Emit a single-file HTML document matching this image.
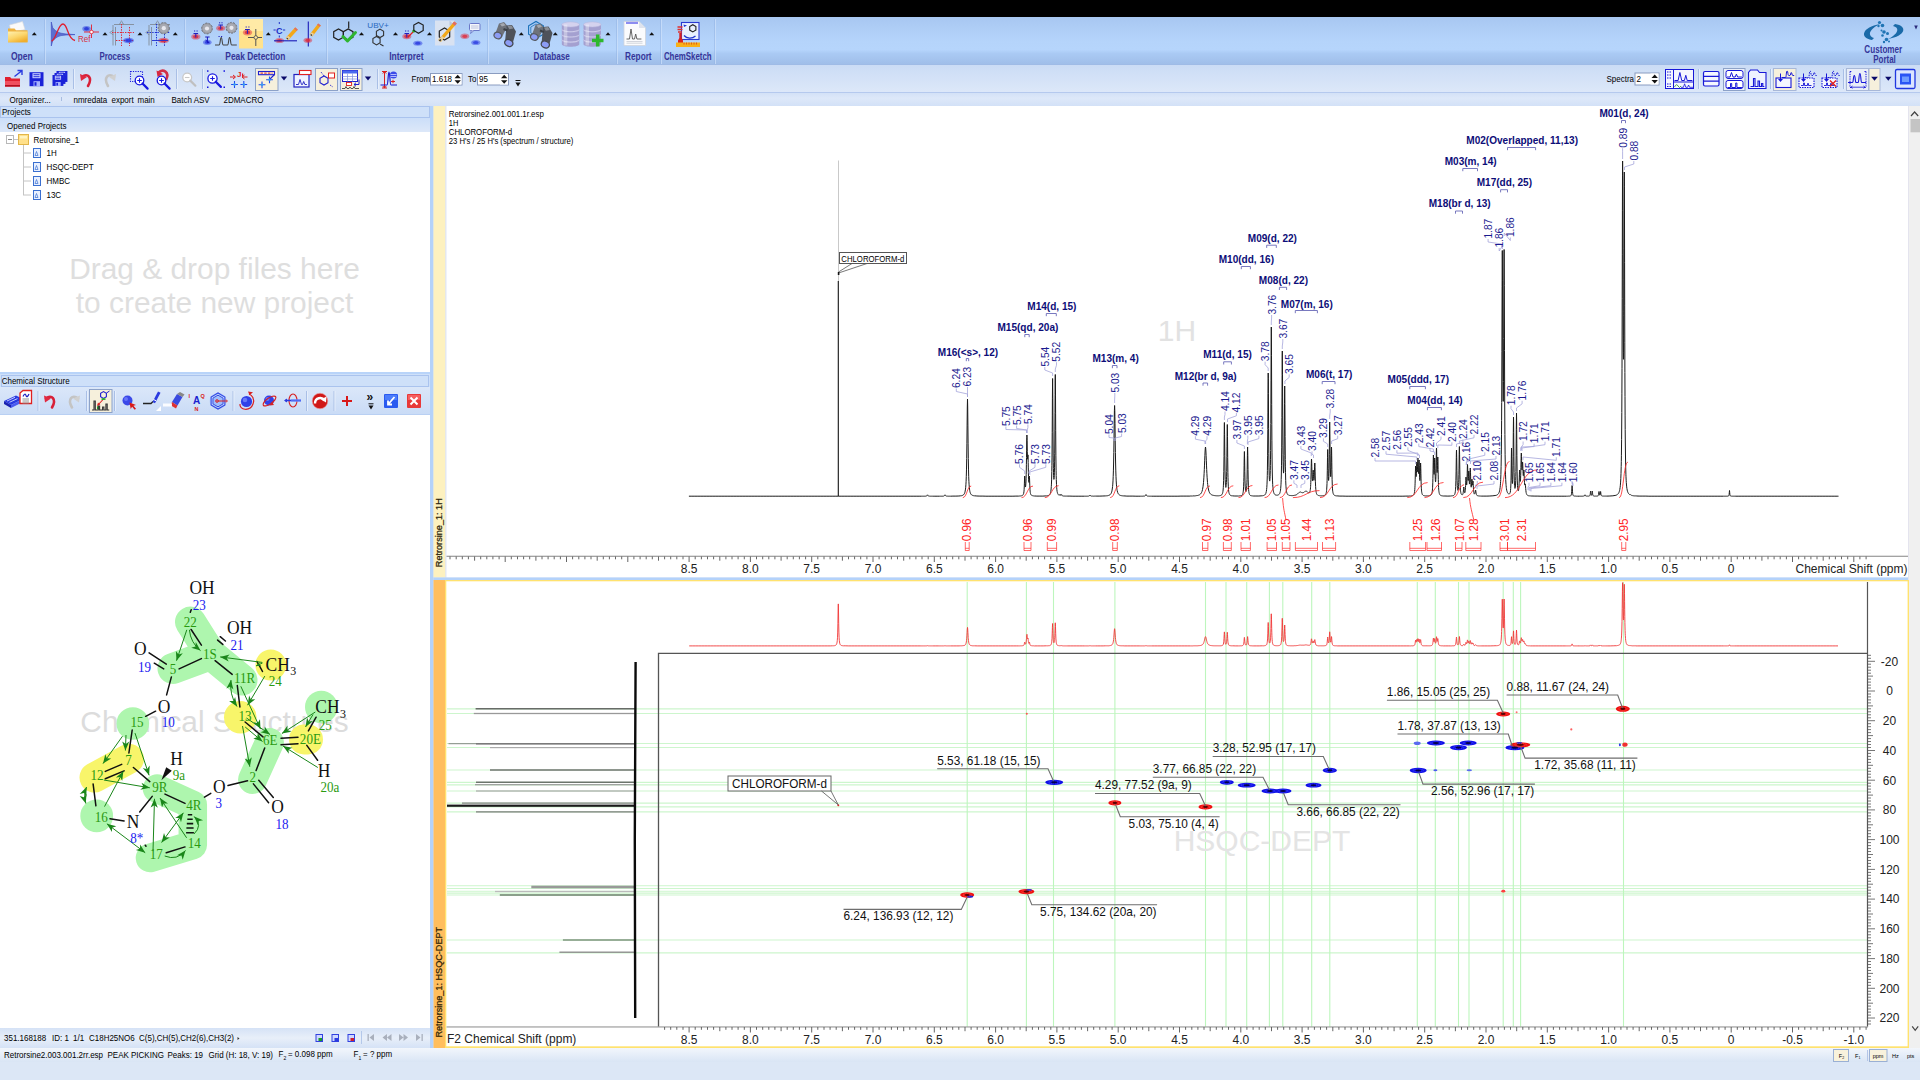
<!DOCTYPE html>
<html><head><meta charset="utf-8"><title>NMR Workbook</title>
<style>
html,body{margin:0;padding:0;background:#dce7f6;overflow:hidden;}
svg{display:block;font-family:"Liberation Sans",sans-serif;}
.ser{font-family:"Liberation Serif",serif;}
</style></head><body>
<svg width="1920" height="1080" viewBox="0 0 1920 1080">
<defs>
<linearGradient id="gRib" x1="0" y1="0" x2="0" y2="1">
<stop offset="0" stop-color="#a8c7f1"/><stop offset="0.5" stop-color="#b5d4fb"/><stop offset="0.68" stop-color="#b6d5fc"/><stop offset="0.76" stop-color="#aacaf4"/><stop offset="1" stop-color="#9fbde8"/></linearGradient>
<linearGradient id="gTb2" x1="0" y1="0" x2="0" y2="1">
<stop offset="0" stop-color="#cbdcf5"/><stop offset="1" stop-color="#dde8f9"/></linearGradient>
<linearGradient id="gTbS" x1="0" y1="0" x2="0" y2="1">
<stop offset="0" stop-color="#dbe7f9"/><stop offset="1" stop-color="#c9dbf6"/></linearGradient>
<linearGradient id="gTb3" x1="0" y1="0" x2="0" y2="1">
<stop offset="0" stop-color="#d3e1f7"/><stop offset="0.4" stop-color="#dde8f9"/><stop offset="1" stop-color="#d3e1f7"/></linearGradient>
<linearGradient id="gHdr" x1="0" y1="0" x2="0" y2="1">
<stop offset="0" stop-color="#cbdef9"/><stop offset="1" stop-color="#dde8f9"/></linearGradient>
<linearGradient id="gStat" x1="0" y1="0" x2="0" y2="1">
<stop offset="0" stop-color="#d5e2f6"/><stop offset="0.5" stop-color="#e8eff9"/><stop offset="1" stop-color="#d5e2f6"/></linearGradient>
<linearGradient id="gStat2" x1="0" y1="0" x2="0" y2="1">
<stop offset="0" stop-color="#f2f6fc"/><stop offset="1" stop-color="#d9e5f5"/></linearGradient>
</defs>
<rect x="0" y="0" width="1920" height="1080" fill="#dce7f6"/>
<rect x="0" y="0" width="1920" height="17" fill="#000"/>
<rect x="0" y="17" width="1920" height="48" fill="url(#gRib)"/>
<rect x="0" y="64" width="1920" height="1" fill="#9fbbe6"/>
<rect x="0" y="65" width="1920" height="28" fill="url(#gTb2)"/>
<rect x="0" y="92" width="1920" height="1" fill="#b5c9ee"/>
<rect x="0" y="93" width="1920" height="13" fill="url(#gTb3)"/>
<rect x="44" y="19" width="1" height="45" fill="#94b4e4" opacity="0.55"/><rect x="45" y="19" width="1" height="45" fill="#cfe1fb" opacity="0.7"/>
<rect x="184" y="19" width="1" height="45" fill="#94b4e4" opacity="0.55"/><rect x="185" y="19" width="1" height="45" fill="#cfe1fb" opacity="0.7"/>
<rect x="326" y="19" width="1" height="45" fill="#94b4e4" opacity="0.55"/><rect x="327" y="19" width="1" height="45" fill="#cfe1fb" opacity="0.7"/>
<rect x="487" y="19" width="1" height="45" fill="#94b4e4" opacity="0.55"/><rect x="488" y="19" width="1" height="45" fill="#cfe1fb" opacity="0.7"/>
<rect x="616" y="19" width="1" height="45" fill="#94b4e4" opacity="0.55"/><rect x="617" y="19" width="1" height="45" fill="#cfe1fb" opacity="0.7"/>
<rect x="660" y="19" width="1" height="45" fill="#94b4e4" opacity="0.55"/><rect x="661" y="19" width="1" height="45" fill="#cfe1fb" opacity="0.7"/>
<rect x="714" y="19" width="1" height="45" fill="#94b4e4" opacity="0.55"/><rect x="715" y="19" width="1" height="45" fill="#cfe1fb" opacity="0.7"/>
<rect x="0" y="106" width="430" height="942" fill="#fff"/>
<rect x="430" y="106" width="3.5" height="942" fill="#b4d2fa"/>
<rect x="0" y="106" width="430" height="12" fill="#cee0f9"/>
<rect x="0.5" y="106.5" width="429" height="11" fill="none" stroke="#aac3ee" stroke-width="1"/>
<rect x="0" y="118" width="430" height="14" fill="url(#gHdr)"/>
<rect x="0" y="372" width="430" height="3" fill="#b9d4f9"/>
<rect x="0" y="374" width="430" height="13" fill="#cee0f9"/>
<rect x="1.5" y="375.5" width="427" height="11" fill="none" stroke="#aac3ee" stroke-width="1"/>
<rect x="0" y="387" width="430" height="28" fill="url(#gTbS)"/>
<rect x="0" y="414" width="430" height="1" fill="#b9d0f3"/>
<rect x="0" y="1028" width="430" height="20" fill="url(#gStat)"/>
<rect x="0" y="1048" width="1920" height="14" fill="url(#gStat2)"/>
<rect x="433.5" y="106" width="12" height="471.5" fill="#fdf1bf"/>
<rect x="445.5" y="106" width="1" height="471.5" fill="#dfe3f8"/>
<rect x="446.5" y="106" width="1461.5" height="471.5" fill="#fff"/>
<rect x="433.5" y="577.5" width="1475" height="3" fill="#b4d2fa"/>
<rect x="1908" y="106" width="12" height="942" fill="#f0f0f0"/>
<rect x="1908" y="106" width="1" height="942" fill="#e4e4ee"/>
<rect x="1910.5" y="119" width="9.5" height="13.3" fill="#c4c4c4"/>
<path d="M1911 116 l3.6 -4 l3.6 4" fill="none" stroke="#444" stroke-width="1.2"/>
<path d="M1912.2 1026.3 l3 4 l3 -4" fill="none" stroke="#444" stroke-width="1.2"/>
<rect x="433.5" y="580" width="12" height="468" fill="#ffbe5e"/>
<rect x="445" y="580" width="1464" height="468" fill="#ffe26f"/>
<rect x="446.3" y="581.3" width="1461.3" height="465" fill="#fff"/>
<text x="2.17" y="115.2" font-size="8.7" fill="#000" transform="scale(0.92,1)" >Projects</text>
<text x="7.61" y="128.7" font-size="8.7" fill="#000" transform="scale(0.92,1)" >Opened Projects</text>
<text x="1.85" y="383.7" font-size="8.7" fill="#000" transform="scale(0.92,1)" >Chemical Structure</text>
<text x="10.33" y="102.6" font-size="8.7" fill="#000" transform="scale(0.92,1)" >Organizer...</text>
<rect x="61" y="97" width="1" height="4" fill="#a8bce0"/>
<text x="79.89" y="102.6" font-size="8.7" fill="#000" transform="scale(0.92,1)" >nmredata</text>
<text x="121.20" y="102.6" font-size="8.7" fill="#000" transform="scale(0.92,1)" >export</text>
<text x="149.46" y="102.6" font-size="8.7" fill="#000" transform="scale(0.92,1)" >main</text>
<text x="186.41" y="102.6" font-size="8.7" fill="#000" transform="scale(0.92,1)" >Batch ASV</text>
<text x="242.93" y="102.6" font-size="8.7" fill="#000" transform="scale(0.92,1)" >2DMACRO</text>
<text x="36.41" y="142.7" font-size="8.7" fill="#000" transform="scale(0.92,1)" >Retrorsine_1</text>
<text x="50.54" y="156.5" font-size="8.7" fill="#000" transform="scale(0.92,1)" >1H</text>
<rect x="33.5" y="148.5" width="7" height="9" fill="#e8f0ff" stroke="#3a6fd0" stroke-width="1"/>
<path d="M35 155.5 l1.5 -4 l1.5 4 z" fill="none" stroke="#3a6fd0" stroke-width="0.7"/>
<path d="M23 153 h8" stroke="#c4c4c4" stroke-width="1"/>
<text x="50.54" y="170.5" font-size="8.7" fill="#000" transform="scale(0.92,1)" >HSQC-DEPT</text>
<rect x="33.5" y="162.5" width="7" height="9" fill="#e8f0ff" stroke="#3a6fd0" stroke-width="1"/>
<path d="M35 169.5 l1.5 -4 l1.5 4 z" fill="none" stroke="#3a6fd0" stroke-width="0.7"/>
<path d="M23 167 h8" stroke="#c4c4c4" stroke-width="1"/>
<text x="50.54" y="184.5" font-size="8.7" fill="#000" transform="scale(0.92,1)" >HMBC</text>
<rect x="33.5" y="176.5" width="7" height="9" fill="#e8f0ff" stroke="#3a6fd0" stroke-width="1"/>
<path d="M35 183.5 l1.5 -4 l1.5 4 z" fill="none" stroke="#3a6fd0" stroke-width="0.7"/>
<path d="M23 181 h8" stroke="#c4c4c4" stroke-width="1"/>
<text x="50.54" y="198.5" font-size="8.7" fill="#000" transform="scale(0.92,1)" >13C</text>
<rect x="33.5" y="190.5" width="7" height="9" fill="#e8f0ff" stroke="#3a6fd0" stroke-width="1"/>
<path d="M35 197.5 l1.5 -4 l1.5 4 z" fill="none" stroke="#3a6fd0" stroke-width="0.7"/>
<path d="M23 195 h8" stroke="#c4c4c4" stroke-width="1"/>
<path d="M23.5 145 v50" stroke="#c4c4c4" stroke-width="1"/>
<path d="M12 139.5 h6" stroke="#c4c4c4" stroke-width="1"/>
<rect x="6.5" y="135.5" width="7" height="8" fill="#fff" stroke="#b8b8b8" stroke-width="1"/><path d="M8 139.5 h4" stroke="#888" stroke-width="1"/>
<rect x="18.5" y="134.5" width="10" height="10" fill="#ffe08a" stroke="#e2b64a" stroke-width="1"/><rect x="20" y="136" width="7" height="2.5" fill="#fff3c0"/>
<text x="214.5" y="279" font-size="29.9" fill="#dedede" text-anchor="middle">Drag &amp; drop files here</text>
<text x="214.5" y="313" font-size="29.9" fill="#dedede" text-anchor="middle">to create new project</text>
<text x="4.35" y="1041" font-size="8.7" fill="#000" transform="scale(0.92,1)" >351.168188</text>
<text x="56.52" y="1041" font-size="8.7" fill="#000" transform="scale(0.92,1)" >ID: 1</text>
<text x="79.35" y="1041" font-size="8.7" fill="#000" transform="scale(0.92,1)" >1/1</text>
<text x="96.74" y="1041" font-size="8.7" fill="#000" transform="scale(0.92,1)" >C18H25NO6</text>
<text x="151.09" y="1041" font-size="8.7" fill="#000" transform="scale(0.92,1)" >C(5),CH(5),CH2(6),CH3(2)</text>
<path d="M237.5 1037 l2 1.5 l-2 1.5 z" fill="#333"/>
<text x="4.35" y="1058" font-size="8.7" fill="#000" transform="scale(0.92,1)" >Retrorsine2.003.001.2rr.esp</text>
<text x="116.85" y="1058" font-size="8.7" fill="#000" transform="scale(0.92,1)" >PEAK PICKING</text>
<text x="182.07" y="1058" font-size="8.7" fill="#000" transform="scale(0.92,1)" >Peaks: 19</text>
<text x="226.63" y="1058" font-size="8.7" fill="#000" transform="scale(0.92,1)" >Grid (H: 18, V: 19)</text>
<text x="302.72" y="1057.5" font-size="8.7" fill="#000" transform="scale(0.92,1)" >F</text>
<text x="308.15" y="1060" font-size="5.5" fill="#000" transform="scale(0.92,1)" >2</text>
<text x="313.04" y="1057.5" font-size="8.7" fill="#000" transform="scale(0.92,1)" >= 0.098 ppm</text>
<text x="384.24" y="1057.5" font-size="8.7" fill="#000" transform="scale(0.92,1)" >F</text>
<text x="389.67" y="1060" font-size="5.5" fill="#000" transform="scale(0.92,1)" >1</text>
<text x="394.57" y="1057.5" font-size="8.7" fill="#000" transform="scale(0.92,1)" >= ? ppm</text>
<rect x="367.5" y="1034" width="1.3" height="7" fill="#a9b0bd"/><path d="M374 1034 v7 l-4.5 -3.5 z" fill="#a9b0bd"/>
<path d="M387 1034 v7 l-4.5 -3.5 z M391.5 1034 v7 l-4.5 -3.5 z" fill="#a9b0bd"/>
<path d="M399 1034 v7 l4.5 -3.5 z M403.5 1034 v7 l4.5 -3.5 z" fill="#a9b0bd"/>
<rect x="421.5" y="1034" width="1.3" height="7" fill="#a9b0bd"/><path d="M416 1034 v7 l4.5 -3.5 z" fill="#a9b0bd"/>
<rect x="361" y="1031" width="1" height="13" fill="#b4c8ea"/>
<rect x="316" y="1034.5" width="6.5" height="7" fill="#cfd8ff" stroke="#3040e0" stroke-width="1"/><rect x="318.5" y="1038" width="3.5" height="3" fill="#1a9a2a"/>
<rect x="332" y="1034.5" width="6.5" height="7" fill="#cfd8ff" stroke="#3040e0" stroke-width="1"/><rect x="334.5" y="1038" width="3.5" height="3" fill="#2a3ae0"/>
<rect x="348" y="1034.5" width="6.5" height="7" fill="#cfd8ff" stroke="#3040e0" stroke-width="1"/><rect x="350.5" y="1038" width="3.5" height="3" fill="#d02030"/>
<rect x="1833.5" y="1049.5" width="15" height="12" fill="#f8f2dc" stroke="#9ab0d4" stroke-width="1"/>
<rect x="1869.5" y="1049.5" width="17.5" height="12" fill="#f8f2dc" stroke="#9ab0d4" stroke-width="1"/><rect x="1867" y="1050" width="1" height="11" fill="#b4c6e8"/>
<text x="1838.80" y="1058" font-size="5.5" fill="#000" transform="scale(1,1)" >F</text>
<text x="1842.20" y="1059" font-size="3.5" fill="#000" transform="scale(1,1)" >2</text>
<text x="1855.00" y="1058" font-size="5.5" fill="#000" transform="scale(1,1)" >F</text>
<text x="1858.40" y="1059" font-size="3.5" fill="#000" transform="scale(1,1)" >1</text>
<text x="1872.70" y="1058" font-size="5.5" fill="#000" transform="scale(1,1)" >ppm</text>
<text x="1892.00" y="1058" font-size="5.5" fill="#000" transform="scale(1,1)" >Hz</text>
<text x="1907.00" y="1058" font-size="5.5" fill="#000" transform="scale(1,1)" >pts</text>
<text x="448.8" y="116.6" font-size="8.7" textLength="95" lengthAdjust="spacingAndGlyphs">Retrorsine2.001.001.1r.esp</text>
<text x="448.8" y="125.7" font-size="8.7" textLength="9.5" lengthAdjust="spacingAndGlyphs">1H</text>
<text x="448.8" y="134.8" font-size="8.7" textLength="63.3" lengthAdjust="spacingAndGlyphs">CHLOROFORM-d</text>
<text x="448.8" y="143.9" font-size="8.7" textLength="124.5" lengthAdjust="spacingAndGlyphs">23 H's / 25 H's (spectrum / structure)</text>
<text x="1177" y="341" font-size="30" fill="#e2e2e2" text-anchor="middle">1H</text>
<text transform="translate(442.3,567.2) rotate(-90)" font-size="9.15" fill="#2a2208" stroke="#2a2208" stroke-width="0.25">Retrorsine_1: 1H</text>
<path d="M838.5 160.5 V281" stroke="#c9c9c9" stroke-width="1"/>
<path d="M838.3 281 V496" stroke="#111" stroke-width="1.1"/>
<rect x="839.5" y="252.5" width="67" height="11" fill="#fff" stroke="#555" stroke-width="1"/>
<text x="841.3" y="261.6" font-size="8.7" textLength="63" lengthAdjust="spacingAndGlyphs">CHLOROFORM-d</text>
<path d="M852 263.5 L838.5 272 M867 263.5 L838.5 273" stroke="#555" stroke-width="0.8" fill="none"/>
<rect x="837.8" y="272" width="1.6" height="3" fill="#111"/>
<path d="M688.9 496.2 L691.9 496.2 L694.9 496.2 L697.9 496.2 L700.9 496.2 L703.9 496.2 L706.9 496.2 L709.9 496.2 L712.9 496.2 L715.9 496.2 L718.9 496.2 L721.9 496.2 L724.9 496.2 L727.9 496.2 L730.9 496.2 L733.9 496.2 L736.9 496.2 L739.9 496.2 L742.9 496.2 L745.9 496.2 L748.9 496.2 L751.9 496.2 L754.9 496.2 L757.9 496.2 L760.9 496.2 L763.9 496.2 L766.9 496.2 L769.9 496.2 L772.9 496.2 L775.9 496.2 L778.9 496.2 L781.9 496.2 L784.9 496.2 L787.9 496.2 L790.9 496.2 L793.9 496.2 L796.9 496.2 L799.9 496.2 L802.9 496.2 L805.9 496.2 L808.9 496.2 L811.9 496.2 L814.9 496.2 L817.9 496.2 L820.9 496.2 L823.9 496.2 L826.9 496.2 L829.9 496.2 L832.9 496.2 L835.9 496.2 L838.9 496.2 L841.9 496.2 L844.9 496.2 L847.9 496.2 L850.9 496.2 L853.9 496.2 L856.9 496.2 L859.9 496.2 L862.9 496.2 L865.9 496.2 L868.9 496.2 L871.9 496.2 L874.9 496.2 L877.9 496.2 L880.9 496.2 L883.9 496.2 L886.9 496.2 L889.9 496.2 L892.9 496.2 L895.9 496.2 L898.9 496.2 L901.9 496.2 L904.9 496.2 L907.9 496.2 L910.9 496.2 L913.9 496.2 L916.9 496.2 L919.9 496.2 L921.5 496.2 L922.0 496.2 L922.5 496.2 L922.9 496.2 L923.0 496.2 L923.5 496.2 L924.0 496.2 L924.5 496.2 L925.0 496.2 L925.5 496.2 L925.7 496.1 L925.9 496.1 L926.1 496.1 L926.3 496.1 L926.5 496.0 L926.7 495.9 L926.9 495.7 L927.1 495.4 L927.3 495.0 L927.5 494.8 L927.7 495.0 L927.9 495.4 L928.1 495.7 L928.3 495.9 L928.5 496.0 L928.7 496.1 L928.9 496.1 L929.1 496.1 L929.3 496.1 L929.5 496.2 L929.7 496.2 L929.9 496.2 L930.1 496.2 L930.6 496.2 L931.1 496.2 L931.6 496.2 L931.9 496.2 L932.1 496.2 L932.6 496.2 L933.1 496.2 L934.9 496.2 L937.9 496.2 L939.0 496.2 L939.5 496.2 L940.0 496.2 L940.5 496.2 L940.9 496.2 L941.0 496.2 L941.5 496.2 L942.0 496.2 L942.5 496.2 L943.0 496.1 L943.2 496.1 L943.4 496.1 L943.6 496.1 L943.8 496.1 L943.9 496.0 L944.0 496.0 L944.2 495.9 L944.4 495.7 L944.6 495.4 L944.8 495.0 L945.0 494.8 L945.2 495.0 L945.4 495.4 L945.6 495.7 L945.8 495.9 L946.0 496.0 L946.2 496.0 L946.4 496.1 L946.6 496.1 L946.8 496.1 L946.9 496.1 L947.0 496.1 L947.2 496.1 L947.4 496.1 L947.6 496.2 L948.1 496.2 L948.6 496.2 L949.1 496.2 L949.6 496.2 L949.9 496.2 L950.1 496.2 L950.6 496.2 L952.9 496.1 L955.9 496.1 L958.9 496.0 L960.0 495.9 L960.5 495.8 L961.0 495.8 L961.5 495.7 L961.9 495.6 L962.0 495.5 L962.5 495.4 L963.0 495.1 L963.5 494.8 L964.0 494.2 L964.5 493.4 L964.9 492.3 L965.0 491.9 L965.5 489.1 L965.7 487.3 L965.9 484.8 L966.1 481.3 L966.3 476.3 L966.5 469.1 L966.7 458.6 L966.9 443.8 L967.1 425.1 L967.3 407.0 L967.5 399.0 L967.7 407.0 L967.9 425.1 L968.1 443.8 L968.3 458.6 L968.5 469.1 L968.7 476.3 L968.9 481.3 L969.1 484.8 L969.3 487.3 L969.5 489.1 L969.7 490.4 L969.9 491.5 L970.1 492.3 L970.6 493.6 L970.9 494.1 L971.1 494.4 L971.6 494.9 L972.1 495.2 L972.6 495.4 L973.1 495.6 L973.6 495.7 L973.9 495.7 L974.1 495.8 L974.6 495.8 L976.9 496.0 L979.9 496.1 L982.9 496.1 L985.9 496.2 L988.9 496.2 L991.9 496.2 L994.9 496.2 L997.9 496.2 L1000.9 496.2 L1003.9 496.2 L1006.9 496.2 L1009.9 496.2 L1012.9 496.2 L1015.9 496.1 L1018.7 496.1 L1018.9 496.0 L1019.2 496.0 L1019.7 496.0 L1020.2 496.0 L1020.7 495.9 L1020.9 495.9 L1021.2 495.8 L1021.4 495.8 L1021.7 495.7 L1021.9 495.7 L1022.0 495.6 L1022.2 495.5 L1022.4 495.4 L1022.5 495.4 L1022.7 495.3 L1022.9 495.1 L1023.0 495.0 L1023.1 494.8 L1023.3 494.5 L1023.4 494.3 L1023.5 494.0 L1023.7 493.3 L1023.9 492.0 L1024.0 491.1 L1024.1 489.8 L1024.3 486.0 L1024.4 483.2 L1024.5 480.0 L1024.7 476.0 L1024.9 479.0 L1025.0 481.7 L1025.1 483.9 L1025.3 486.5 L1025.4 487.0 L1025.5 487.0 L1025.7 485.9 L1025.9 483.1 L1026.0 481.0 L1026.1 478.2 L1026.2 474.6 L1026.3 470.0 L1026.4 464.3 L1026.5 457.6 L1026.6 450.2 L1026.7 443.0 L1026.8 437.5 L1026.9 435.0 L1027.0 436.2 L1027.1 440.4 L1027.2 446.0 L1027.3 451.5 L1027.4 455.8 L1027.5 458.4 L1027.6 459.2 L1027.7 458.3 L1027.8 456.4 L1027.9 454.8 L1028.0 455.0 L1028.1 457.8 L1028.2 462.5 L1028.3 467.9 L1028.4 472.7 L1028.5 476.6 L1028.6 479.4 L1028.7 481.3 L1028.8 482.3 L1028.9 482.4 L1029.0 481.7 L1029.1 480.2 L1029.2 478.2 L1029.3 476.5 L1029.4 476.0 L1029.5 477.4 L1029.6 480.1 L1029.8 485.9 L1030.0 489.7 L1030.2 491.9 L1030.3 492.6 L1030.4 493.1 L1030.5 493.5 L1030.6 493.9 L1030.8 494.4 L1030.9 494.6 L1031.0 494.7 L1031.1 494.9 L1031.2 495.0 L1031.4 495.2 L1031.5 495.2 L1031.6 495.3 L1031.8 495.4 L1032.0 495.5 L1032.1 495.6 L1032.5 495.7 L1032.6 495.7 L1033.0 495.8 L1033.1 495.8 L1033.5 495.9 L1033.6 495.9 L1033.9 495.9 L1034.0 495.9 L1034.5 496.0 L1035.0 496.0 L1036.9 496.1 L1039.9 496.1 L1042.9 496.1 L1045.9 495.9 L1046.6 495.9 L1047.1 495.8 L1047.6 495.7 L1048.1 495.6 L1048.6 495.4 L1048.9 495.2 L1049.1 495.1 L1049.3 494.9 L1049.6 494.6 L1049.8 494.4 L1050.1 493.9 L1050.3 493.4 L1050.6 492.4 L1050.8 491.4 L1051.0 490.0 L1051.2 488.0 L1051.3 486.6 L1051.4 484.9 L1051.6 479.9 L1051.8 471.6 L1051.9 465.3 L1052.0 457.1 L1052.2 432.5 L1052.3 415.9 L1052.4 398.4 L1052.6 378.5 L1052.8 397.8 L1053.0 431.2 L1053.2 455.1 L1053.3 462.8 L1053.4 468.5 L1053.5 472.7 L1053.6 475.6 L1053.7 477.6 L1053.8 478.8 L1053.9 479.4 L1054.0 479.3 L1054.1 478.7 L1054.2 477.3 L1054.3 475.2 L1054.4 472.2 L1054.5 467.8 L1054.6 461.9 L1054.7 453.8 L1054.8 443.0 L1054.9 429.1 L1055.0 412.3 L1055.1 394.5 L1055.2 380.1 L1055.3 374.5 L1055.5 395.1 L1055.6 413.2 L1055.7 430.3 L1055.9 455.8 L1056.1 470.8 L1056.2 475.6 L1056.3 479.4 L1056.5 484.5 L1056.6 486.3 L1056.7 487.7 L1056.9 489.8 L1057.1 491.3 L1057.2 491.8 L1057.3 492.3 L1057.5 493.0 L1057.6 493.3 L1057.7 493.6 L1057.9 494.0 L1058.1 494.3 L1058.2 494.5 L1058.3 494.6 L1058.4 494.7 L1058.5 494.8 L1058.6 494.9 L1058.7 494.9 L1058.9 495.1 L1059.1 495.1 L1059.3 495.2 L1059.4 495.1 L1059.5 495.1 L1059.6 495.0 L1059.7 494.9 L1059.8 494.7 L1059.9 494.5 L1060.0 494.3 L1060.1 494.2 L1060.2 494.3 L1060.3 494.6 L1060.4 494.8 L1060.5 495.1 L1060.6 495.2 L1060.7 495.3 L1060.8 495.4 L1060.9 495.4 L1061.0 495.4 L1061.1 495.3 L1061.2 495.2 L1061.3 495.0 L1061.4 494.8 L1061.5 494.6 L1061.6 494.5 L1061.7 494.6 L1061.8 494.9 L1061.9 495.1 L1062.0 495.3 L1062.1 495.5 L1062.2 495.6 L1062.3 495.7 L1062.4 495.8 L1062.5 495.8 L1062.6 495.9 L1062.7 495.9 L1062.8 495.9 L1063.0 495.9 L1063.2 496.0 L1063.4 496.0 L1063.6 496.0 L1063.7 496.0 L1063.8 496.0 L1063.9 496.0 L1064.0 496.0 L1064.2 496.0 L1064.7 496.1 L1065.2 496.1 L1065.7 496.1 L1066.2 496.1 L1066.7 496.1 L1066.9 496.1 L1067.2 496.1 L1069.9 496.1 L1072.9 496.2 L1075.9 496.2 L1078.9 496.2 L1081.9 496.2 L1084.0 496.2 L1084.5 496.2 L1084.9 496.2 L1085.0 496.2 L1085.5 496.2 L1086.0 496.2 L1086.5 496.2 L1087.0 496.2 L1087.5 496.2 L1087.9 496.1 L1088.0 496.1 L1088.2 496.1 L1088.4 496.1 L1088.6 496.1 L1088.8 496.1 L1089.0 496.0 L1089.2 495.9 L1089.4 495.8 L1089.6 495.5 L1089.8 495.2 L1090.0 495.0 L1090.2 495.2 L1090.4 495.5 L1090.6 495.8 L1090.8 495.9 L1090.9 496.0 L1091.0 496.0 L1091.2 496.1 L1091.4 496.1 L1091.6 496.1 L1091.8 496.1 L1092.0 496.1 L1092.2 496.1 L1092.4 496.1 L1092.6 496.1 L1093.1 496.1 L1093.6 496.2 L1093.9 496.2 L1094.1 496.2 L1094.6 496.1 L1095.1 496.1 L1095.6 496.1 L1096.9 496.1 L1099.9 496.1 L1102.9 496.0 L1105.6 495.9 L1105.9 495.9 L1106.1 495.9 L1106.6 495.8 L1107.1 495.8 L1107.6 495.7 L1108.1 495.6 L1108.6 495.4 L1108.9 495.3 L1109.1 495.2 L1109.6 495.0 L1110.1 494.7 L1110.6 494.1 L1111.1 493.4 L1111.6 492.2 L1111.9 491.1 L1112.1 490.1 L1112.6 486.4 L1112.8 484.1 L1113.0 480.9 L1113.2 476.7 L1113.4 470.9 L1113.6 463.0 L1113.8 452.4 L1114.0 438.9 L1114.2 423.8 L1114.4 410.8 L1114.6 405.5 L1114.8 410.8 L1114.9 416.7 L1115.0 423.8 L1115.2 438.9 L1115.4 452.4 L1115.6 463.0 L1115.8 470.9 L1116.0 476.7 L1116.2 480.9 L1116.4 484.1 L1116.6 486.4 L1116.8 488.2 L1117.0 489.6 L1117.2 490.6 L1117.7 492.5 L1117.9 493.0 L1118.2 493.6 L1118.7 494.3 L1119.2 494.7 L1119.7 495.1 L1120.2 495.3 L1120.7 495.5 L1120.9 495.5 L1121.2 495.6 L1121.7 495.7 L1122.2 495.8 L1122.7 495.8 L1123.2 495.9 L1123.9 495.9 L1126.9 496.1 L1129.9 496.1 L1132.9 496.1 L1135.9 496.2 L1138.9 496.2 L1140.0 496.2 L1140.5 496.2 L1141.0 496.2 L1141.5 496.2 L1141.9 496.2 L1142.0 496.2 L1142.5 496.2 L1143.0 496.2 L1143.5 496.1 L1144.0 496.1 L1144.2 496.1 L1144.4 496.1 L1144.6 496.1 L1144.8 496.0 L1144.9 496.0 L1145.0 496.0 L1145.2 495.8 L1145.4 495.6 L1145.6 495.3 L1145.8 494.8 L1146.0 494.5 L1146.2 494.8 L1146.4 495.3 L1146.6 495.6 L1146.8 495.8 L1147.0 496.0 L1147.2 496.0 L1147.4 496.1 L1147.6 496.1 L1147.8 496.1 L1147.9 496.1 L1148.0 496.1 L1148.2 496.1 L1148.4 496.1 L1148.6 496.2 L1149.1 496.2 L1149.6 496.2 L1150.1 496.2 L1150.6 496.2 L1150.9 496.2 L1151.1 496.2 L1151.6 496.2 L1153.9 496.2 L1156.9 496.2 L1159.9 496.2 L1162.9 496.2 L1165.9 496.2 L1168.9 496.2 L1171.9 496.2 L1174.9 496.2 L1177.9 496.2 L1180.9 496.1 L1183.9 496.1 L1186.9 496.1 L1189.9 496.1 L1190.5 496.0 L1191.0 496.0 L1191.5 496.0 L1192.0 496.0 L1192.5 496.0 L1192.9 496.0 L1193.0 495.9 L1193.5 495.9 L1194.0 495.9 L1194.5 495.9 L1195.0 495.8 L1195.5 495.8 L1195.9 495.7 L1196.0 495.7 L1196.5 495.6 L1197.0 495.6 L1197.5 495.5 L1198.0 495.4 L1198.5 495.2 L1198.9 495.1 L1199.0 495.0 L1199.5 494.8 L1200.0 494.4 L1200.5 494.0 L1201.0 493.4 L1201.5 492.6 L1201.9 491.7 L1202.0 491.4 L1202.5 489.6 L1203.0 486.8 L1203.5 482.5 L1203.7 480.1 L1203.9 477.2 L1204.1 473.7 L1204.3 469.7 L1204.5 465.1 L1204.7 460.2 L1204.9 455.3 L1205.1 451.0 L1205.3 448.1 L1205.5 447.0 L1205.7 448.1 L1205.9 451.0 L1206.1 455.3 L1206.3 460.2 L1206.5 465.1 L1206.7 469.7 L1206.9 473.7 L1207.1 477.2 L1207.3 480.0 L1207.5 482.5 L1207.7 484.5 L1207.9 486.1 L1208.1 487.5 L1208.6 490.0 L1209.1 491.7 L1209.6 492.8 L1210.1 493.5 L1210.6 494.1 L1210.9 494.3 L1211.1 494.5 L1211.6 494.8 L1212.1 495.0 L1212.6 495.2 L1213.1 495.3 L1213.6 495.4 L1213.9 495.5 L1214.1 495.5 L1214.6 495.6 L1215.1 495.7 L1215.6 495.7 L1216.1 495.7 L1216.6 495.8 L1216.9 495.8 L1217.1 495.8 L1217.6 495.8 L1218.1 495.8 L1218.4 495.8 L1218.6 495.8 L1218.9 495.7 L1219.1 495.7 L1219.4 495.7 L1219.6 495.7 L1219.9 495.6 L1220.1 495.6 L1220.4 495.5 L1220.9 495.4 L1221.3 495.2 L1221.4 495.1 L1221.8 494.8 L1221.9 494.6 L1222.3 494.0 L1222.4 493.7 L1222.6 493.1 L1222.8 492.3 L1222.9 491.7 L1223.0 491.0 L1223.2 489.0 L1223.3 487.7 L1223.4 485.9 L1223.6 480.7 L1223.8 471.7 L1224.0 456.3 L1224.2 434.9 L1224.3 426.0 L1224.4 422.5 L1224.6 434.7 L1224.8 455.7 L1225.0 470.8 L1225.2 479.4 L1225.3 482.1 L1225.4 484.1 L1225.5 485.5 L1225.6 486.4 L1225.7 487.1 L1225.8 487.4 L1225.9 487.4 L1226.0 487.1 L1226.1 486.5 L1226.2 485.6 L1226.3 484.3 L1226.4 482.4 L1226.5 479.8 L1226.6 476.2 L1226.7 471.4 L1226.8 465.0 L1226.9 456.8 L1227.0 446.8 L1227.1 436.3 L1227.3 424.5 L1227.5 436.6 L1227.7 457.4 L1227.9 472.4 L1228.0 477.4 L1228.1 481.2 L1228.3 486.2 L1228.5 489.3 L1228.7 491.2 L1228.9 492.4 L1229.0 492.9 L1229.1 493.2 L1229.3 493.8 L1229.5 494.3 L1229.7 494.6 L1229.9 494.9 L1230.0 495.0 L1230.4 495.3 L1230.9 495.5 L1231.4 495.7 L1231.9 495.8 L1232.4 495.8 L1232.9 495.9 L1234.9 496.0 L1237.9 496.0 L1238.4 496.0 L1238.9 496.0 L1239.4 495.9 L1239.9 495.9 L1240.4 495.8 L1240.9 495.7 L1241.4 495.6 L1241.6 495.5 L1241.9 495.3 L1242.1 495.1 L1242.4 494.7 L1242.6 494.3 L1242.8 493.8 L1243.0 493.1 L1243.1 492.5 L1243.2 491.9 L1243.4 490.0 L1243.6 486.8 L1243.8 481.4 L1243.9 477.2 L1244.0 472.0 L1244.1 465.7 L1244.2 459.0 L1244.4 451.5 L1244.6 458.9 L1244.8 471.7 L1245.0 480.9 L1245.1 483.9 L1245.2 486.2 L1245.4 489.1 L1245.6 490.7 L1245.8 491.4 L1246.0 491.6 L1246.2 491.3 L1246.4 490.4 L1246.6 488.6 L1246.8 485.3 L1246.9 482.8 L1247.0 479.5 L1247.2 469.3 L1247.4 455.2 L1247.5 449.3 L1247.6 447.0 L1247.8 455.3 L1248.0 469.6 L1248.2 479.9 L1248.4 485.9 L1248.5 487.9 L1248.6 489.4 L1248.8 491.5 L1249.0 492.8 L1249.2 493.6 L1249.4 494.2 L1249.5 494.4 L1249.6 494.6 L1249.8 494.9 L1249.9 495.0 L1250.0 495.1 L1250.2 495.3 L1250.7 495.6 L1251.2 495.7 L1251.7 495.8 L1252.2 495.9 L1252.7 495.9 L1252.9 496.0 L1253.2 496.0 L1255.9 496.0 L1258.9 496.0 L1261.9 495.8 L1262.2 495.8 L1262.7 495.7 L1263.2 495.6 L1263.7 495.5 L1264.2 495.3 L1264.7 495.0 L1264.9 494.8 L1265.2 494.5 L1265.3 494.4 L1265.7 493.7 L1265.8 493.4 L1266.2 492.1 L1266.3 491.6 L1266.4 491.1 L1266.6 489.6 L1266.8 487.5 L1267.0 484.2 L1267.2 479.0 L1267.3 475.3 L1267.4 470.3 L1267.6 455.2 L1267.8 429.4 L1267.9 412.1 L1268.0 393.8 L1268.2 373.0 L1268.3 378.7 L1268.4 393.3 L1268.6 428.3 L1268.8 453.4 L1269.0 467.8 L1269.2 475.5 L1269.3 477.9 L1269.4 479.5 L1269.5 480.5 L1269.6 481.0 L1269.7 481.1 L1269.8 480.8 L1269.9 479.9 L1270.0 478.6 L1270.1 476.7 L1270.2 474.1 L1270.3 470.5 L1270.4 465.7 L1270.5 459.2 L1270.6 450.6 L1270.7 439.0 L1270.8 423.6 L1270.9 403.9 L1271.0 380.2 L1271.1 355.2 L1271.3 327.0 L1271.5 355.6 L1271.7 404.7 L1271.8 424.6 L1271.9 440.2 L1272.0 452.1 L1272.1 461.0 L1272.3 473.0 L1272.5 480.1 L1272.7 484.5 L1272.8 486.1 L1272.9 487.4 L1273.0 488.5 L1273.1 489.4 L1273.3 490.8 L1273.5 491.8 L1273.7 492.5 L1273.8 492.8 L1273.9 493.1 L1274.0 493.3 L1274.4 494.0 L1274.5 494.2 L1274.9 494.6 L1275.0 494.6 L1275.4 494.9 L1275.5 494.9 L1275.9 495.1 L1276.0 495.1 L1276.3 495.1 L1276.4 495.2 L1276.5 495.2 L1276.8 495.2 L1276.9 495.2 L1277.0 495.2 L1277.3 495.2 L1277.5 495.1 L1277.8 495.1 L1278.0 495.0 L1278.3 494.9 L1278.5 494.8 L1278.7 494.7 L1278.8 494.6 L1279.0 494.4 L1279.2 494.2 L1279.3 494.1 L1279.5 493.8 L1279.7 493.4 L1279.8 493.2 L1279.9 492.9 L1280.0 492.6 L1280.2 491.8 L1280.3 491.4 L1280.5 490.2 L1280.7 488.5 L1280.9 485.9 L1281.0 484.2 L1281.1 482.1 L1281.2 479.4 L1281.3 476.0 L1281.5 465.8 L1281.7 447.9 L1281.9 417.6 L1282.0 397.1 L1282.1 375.6 L1282.2 358.0 L1282.3 351.0 L1282.5 374.8 L1282.7 415.9 L1282.9 445.2 L1283.0 454.7 L1283.1 461.6 L1283.3 469.9 L1283.5 473.1 L1283.7 472.3 L1283.9 467.1 L1284.0 462.3 L1284.1 455.5 L1284.3 434.0 L1284.5 403.6 L1284.7 386.0 L1284.9 404.6 L1285.0 420.9 L1285.1 436.3 L1285.3 459.3 L1285.4 466.9 L1285.5 472.7 L1285.7 480.5 L1285.9 485.2 L1286.0 486.8 L1286.1 488.1 L1286.3 490.0 L1286.4 490.8 L1286.5 491.4 L1286.7 492.3 L1286.9 493.0 L1287.0 493.3 L1287.1 493.5 L1287.3 493.9 L1287.4 494.1 L1287.5 494.2 L1287.8 494.6 L1287.9 494.7 L1288.0 494.7 L1288.3 495.0 L1288.5 495.1 L1288.8 495.2 L1288.9 495.2 L1289.0 495.3 L1289.3 495.4 L1289.5 495.4 L1289.8 495.5 L1290.0 495.5 L1290.3 495.5 L1290.5 495.5 L1291.0 495.6 L1291.5 495.6 L1291.9 495.6 L1292.0 495.6 L1292.5 495.6 L1293.0 495.5 L1293.5 495.5 L1294.0 495.4 L1294.5 495.3 L1294.9 495.3 L1295.0 495.2 L1295.5 495.1 L1296.0 494.9 L1296.5 494.7 L1297.0 494.4 L1297.5 494.0 L1297.9 493.6 L1298.0 493.6 L1298.2 493.4 L1298.4 493.2 L1298.5 493.1 L1298.6 493.0 L1298.8 492.8 L1299.0 492.6 L1299.2 492.4 L1299.4 492.3 L1299.5 492.2 L1299.6 492.1 L1299.8 492.1 L1300.0 492.0 L1300.2 492.0 L1300.4 492.0 L1300.5 492.0 L1300.6 492.0 L1300.8 492.1 L1300.9 492.1 L1301.0 492.2 L1301.2 492.3 L1301.4 492.4 L1301.5 492.4 L1301.6 492.5 L1301.8 492.6 L1302.0 492.6 L1302.2 492.7 L1302.4 492.7 L1302.5 492.7 L1302.6 492.7 L1303.0 492.7 L1303.1 492.7 L1303.5 492.5 L1303.6 492.5 L1303.9 492.3 L1304.0 492.2 L1304.1 492.2 L1304.2 492.1 L1304.4 491.9 L1304.6 491.8 L1304.8 491.6 L1305.0 491.4 L1305.1 491.3 L1305.2 491.3 L1305.4 491.1 L1305.5 491.1 L1305.6 491.1 L1305.8 491.0 L1306.0 491.0 L1306.1 491.0 L1306.2 491.0 L1306.4 491.1 L1306.5 491.2 L1306.6 491.2 L1306.8 491.4 L1306.9 491.5 L1307.0 491.6 L1307.1 491.7 L1307.2 491.8 L1307.4 492.0 L1307.5 492.1 L1307.6 492.1 L1307.7 492.2 L1307.8 492.3 L1308.0 492.5 L1308.1 492.6 L1308.2 492.7 L1308.4 492.8 L1308.5 492.8 L1308.6 492.9 L1308.7 492.9 L1308.8 492.9 L1309.0 492.9 L1309.1 492.9 L1309.2 492.8 L1309.3 492.8 L1309.5 492.6 L1309.6 492.4 L1309.7 492.3 L1309.8 492.0 L1309.9 491.7 L1310.1 490.9 L1310.2 490.4 L1310.3 489.7 L1310.5 487.8 L1310.6 486.4 L1310.7 484.6 L1310.8 482.4 L1310.9 479.7 L1311.1 472.2 L1311.2 467.8 L1311.3 463.6 L1311.4 460.3 L1311.5 459.0 L1311.6 460.0 L1311.7 462.8 L1311.8 466.7 L1311.9 470.6 L1312.0 474.1 L1312.1 476.9 L1312.2 478.9 L1312.3 480.2 L1312.4 480.8 L1312.5 480.8 L1312.6 480.1 L1312.7 478.8 L1312.8 476.9 L1312.9 474.7 L1313.0 472.4 L1313.1 470.7 L1313.2 470.0 L1313.3 470.7 L1313.4 472.4 L1313.5 474.6 L1313.6 476.8 L1313.7 478.6 L1313.8 479.9 L1313.9 480.4 L1314.0 480.3 L1314.1 479.6 L1314.2 478.0 L1314.4 472.9 L1314.6 466.2 L1314.8 463.0 L1315.0 467.2 L1315.1 471.1 L1315.2 475.1 L1315.4 481.8 L1315.6 486.4 L1315.8 489.3 L1315.9 490.3 L1316.0 491.1 L1316.1 491.8 L1316.2 492.3 L1316.3 492.8 L1316.4 493.2 L1316.6 493.8 L1316.8 494.2 L1317.0 494.5 L1317.1 494.6 L1317.2 494.7 L1317.3 494.8 L1317.4 494.9 L1317.6 495.1 L1317.8 495.2 L1317.9 495.3 L1318.1 495.3 L1318.3 495.4 L1318.4 495.5 L1318.6 495.5 L1318.8 495.6 L1318.9 495.6 L1319.1 495.6 L1319.4 495.7 L1319.6 495.7 L1319.9 495.7 L1320.1 495.7 L1320.4 495.8 L1320.6 495.8 L1321.1 495.8 L1321.6 495.8 L1321.7 495.8 L1321.9 495.8 L1322.1 495.8 L1322.2 495.8 L1322.6 495.8 L1322.7 495.7 L1323.1 495.7 L1323.2 495.7 L1323.6 495.6 L1323.7 495.6 L1324.1 495.5 L1324.2 495.5 L1324.6 495.3 L1324.7 495.3 L1324.9 495.2 L1325.1 495.0 L1325.2 495.0 L1325.5 494.6 L1325.6 494.5 L1325.7 494.3 L1325.9 493.9 L1326.0 493.6 L1326.1 493.3 L1326.2 492.9 L1326.3 492.5 L1326.5 491.2 L1326.6 490.4 L1326.7 489.2 L1326.9 486.0 L1327.0 483.5 L1327.1 480.3 L1327.2 476.1 L1327.3 470.7 L1327.5 457.4 L1327.6 451.9 L1327.7 449.5 L1327.9 456.4 L1328.0 462.6 L1328.1 468.4 L1328.3 476.5 L1328.5 480.0 L1328.6 480.5 L1328.7 480.1 L1328.9 476.8 L1329.0 473.6 L1329.1 469.0 L1329.3 454.6 L1329.5 434.1 L1329.6 425.4 L1329.7 422.0 L1329.9 433.8 L1330.1 453.9 L1330.3 467.9 L1330.5 474.8 L1330.6 476.3 L1330.7 476.7 L1330.8 475.9 L1330.9 474.0 L1331.1 466.2 L1331.3 454.0 L1331.5 447.0 L1331.6 449.5 L1331.7 455.4 L1331.8 462.6 L1331.9 469.4 L1332.1 479.5 L1332.3 485.4 L1332.5 488.9 L1332.6 490.1 L1332.7 491.0 L1332.8 491.7 L1332.9 492.3 L1333.1 493.2 L1333.3 493.8 L1333.5 494.3 L1333.6 494.5 L1333.7 494.6 L1333.8 494.7 L1333.9 494.9 L1334.1 495.1 L1334.3 495.2 L1334.6 495.4 L1334.8 495.5 L1335.1 495.6 L1335.3 495.7 L1335.6 495.7 L1336.1 495.8 L1336.6 495.9 L1336.9 495.9 L1337.1 495.9 L1339.9 496.1 L1342.9 496.1 L1345.9 496.2 L1348.9 496.2 L1351.9 496.2 L1354.9 496.2 L1357.9 496.2 L1360.9 496.2 L1363.9 496.2 L1366.9 496.2 L1369.9 496.2 L1372.9 496.2 L1375.9 496.2 L1378.9 496.2 L1381.9 496.2 L1384.9 496.2 L1387.9 496.2 L1390.9 496.2 L1393.9 496.2 L1396.9 496.2 L1399.9 496.2 L1402.9 496.2 L1405.9 496.1 L1408.9 496.1 L1409.6 496.0 L1410.1 496.0 L1410.6 496.0 L1410.8 496.0 L1411.1 495.9 L1411.3 495.9 L1411.6 495.8 L1411.8 495.8 L1411.9 495.8 L1412.1 495.7 L1412.3 495.7 L1412.4 495.7 L1412.6 495.6 L1412.8 495.5 L1412.9 495.5 L1413.1 495.3 L1413.3 495.2 L1413.4 495.1 L1413.6 494.9 L1413.8 494.6 L1413.9 494.4 L1414.0 494.2 L1414.1 494.0 L1414.2 493.6 L1414.3 493.3 L1414.4 492.8 L1414.6 491.5 L1414.8 489.4 L1414.9 487.8 L1415.0 485.8 L1415.1 483.2 L1415.2 479.8 L1415.4 471.4 L1415.6 466.0 L1415.8 469.2 L1415.9 472.2 L1416.0 474.7 L1416.1 476.3 L1416.2 476.6 L1416.3 475.7 L1416.4 473.6 L1416.5 470.4 L1416.6 466.7 L1416.7 463.5 L1416.8 462.0 L1416.9 462.9 L1417.0 465.5 L1417.1 468.5 L1417.2 470.8 L1417.3 471.8 L1417.4 471.4 L1417.5 469.5 L1417.6 466.4 L1417.7 462.6 L1417.8 459.3 L1417.9 458.0 L1418.0 459.4 L1418.1 462.9 L1418.2 467.0 L1418.3 470.4 L1418.4 472.7 L1418.5 473.5 L1418.6 473.0 L1418.7 471.0 L1418.8 467.9 L1418.9 464.2 L1419.0 461.1 L1419.1 460.0 L1419.2 461.7 L1419.3 465.5 L1419.4 470.0 L1419.5 474.1 L1419.6 477.3 L1419.7 479.4 L1419.8 480.5 L1419.9 480.6 L1420.0 479.8 L1420.1 478.1 L1420.2 475.2 L1420.3 471.5 L1420.4 467.4 L1420.5 464.1 L1420.6 463.0 L1420.7 464.8 L1420.8 468.7 L1420.9 473.5 L1421.0 478.1 L1421.1 481.9 L1421.2 484.8 L1421.3 487.1 L1421.4 488.8 L1421.5 490.1 L1421.6 491.2 L1421.7 492.0 L1421.8 492.6 L1421.9 493.1 L1422.0 493.5 L1422.2 494.1 L1422.4 494.5 L1422.5 494.7 L1422.6 494.8 L1422.7 494.9 L1422.8 495.0 L1423.0 495.2 L1423.2 495.3 L1423.5 495.5 L1423.7 495.6 L1423.9 495.6 L1424.2 495.7 L1424.7 495.8 L1425.2 495.9 L1425.7 495.9 L1426.2 495.9 L1426.9 495.9 L1427.4 495.9 L1427.9 495.9 L1428.4 495.9 L1428.7 495.8 L1428.9 495.8 L1429.2 495.8 L1429.4 495.7 L1429.7 495.7 L1429.9 495.6 L1430.2 495.5 L1430.4 495.4 L1430.5 495.4 L1430.7 495.3 L1430.9 495.1 L1431.0 495.0 L1431.2 494.8 L1431.4 494.6 L1431.5 494.4 L1431.6 494.2 L1431.7 494.0 L1431.8 493.7 L1432.0 492.9 L1432.2 491.8 L1432.3 491.0 L1432.4 490.1 L1432.5 488.8 L1432.6 487.2 L1432.7 485.0 L1432.8 482.2 L1432.9 478.5 L1433.0 473.8 L1433.1 468.2 L1433.2 462.2 L1433.3 457.2 L1433.4 455.0 L1433.5 456.3 L1433.6 460.2 L1433.7 465.1 L1433.8 469.4 L1433.9 472.5 L1434.0 474.2 L1434.1 474.4 L1434.2 473.3 L1434.3 470.7 L1434.4 467.0 L1434.5 462.8 L1434.6 459.3 L1434.7 458.0 L1434.8 459.8 L1434.9 463.9 L1435.0 468.8 L1435.1 473.3 L1435.2 476.8 L1435.3 479.4 L1435.4 481.0 L1435.5 481.8 L1435.6 481.8 L1435.7 481.1 L1435.8 479.5 L1435.9 476.9 L1436.0 473.3 L1436.1 468.3 L1436.2 462.2 L1436.3 455.7 L1436.4 450.3 L1436.5 448.0 L1436.6 449.8 L1436.7 454.6 L1436.8 460.4 L1436.9 465.7 L1437.0 469.6 L1437.1 471.8 L1437.2 472.5 L1437.3 471.6 L1437.4 469.3 L1437.5 465.7 L1437.6 461.5 L1437.7 458.0 L1437.8 457.0 L1437.9 459.2 L1438.0 464.0 L1438.1 469.6 L1438.2 474.9 L1438.3 479.3 L1438.4 482.8 L1438.5 485.5 L1438.6 487.5 L1438.7 489.1 L1438.8 490.3 L1438.9 491.2 L1439.0 491.9 L1439.1 492.5 L1439.2 493.0 L1439.3 493.4 L1439.4 493.7 L1439.6 494.2 L1439.8 494.6 L1440.0 494.9 L1440.1 495.0 L1440.2 495.1 L1440.3 495.2 L1440.4 495.2 L1440.6 495.4 L1440.9 495.5 L1441.1 495.6 L1441.4 495.7 L1441.6 495.7 L1441.9 495.8 L1442.1 495.8 L1442.4 495.9 L1442.9 495.9 L1443.4 496.0 L1444.9 496.0 L1447.9 496.1 L1450.5 496.0 L1450.9 496.0 L1451.0 496.0 L1451.5 495.9 L1452.0 495.9 L1452.5 495.8 L1453.0 495.7 L1453.4 495.6 L1453.5 495.5 L1453.9 495.3 L1454.0 495.2 L1454.4 494.8 L1454.5 494.7 L1454.7 494.3 L1454.9 493.7 L1455.1 492.9 L1455.3 491.7 L1455.4 490.8 L1455.5 489.8 L1455.7 486.5 L1455.9 480.8 L1456.1 471.2 L1456.3 457.8 L1456.4 452.2 L1456.5 450.0 L1456.7 457.6 L1456.9 470.7 L1457.1 480.2 L1457.3 485.5 L1457.4 487.2 L1457.5 488.4 L1457.6 489.3 L1457.7 489.9 L1457.8 490.2 L1457.9 490.4 L1458.0 490.3 L1458.1 490.1 L1458.2 489.7 L1458.3 489.0 L1458.4 488.0 L1458.5 486.7 L1458.6 484.9 L1458.7 482.4 L1458.8 479.1 L1458.9 474.6 L1459.0 468.9 L1459.1 462.0 L1459.2 454.7 L1459.3 448.8 L1459.4 446.5 L1459.6 454.9 L1459.8 469.2 L1459.9 475.1 L1460.0 479.6 L1460.1 483.1 L1460.2 485.7 L1460.3 487.7 L1460.4 489.2 L1460.5 490.3 L1460.6 491.2 L1460.8 492.5 L1461.0 493.4 L1461.1 493.7 L1461.2 493.9 L1461.3 494.1 L1461.4 494.3 L1461.5 494.4 L1461.6 494.5 L1461.8 494.7 L1462.0 494.8 L1462.1 494.8 L1462.2 494.8 L1462.4 494.7 L1462.5 494.7 L1462.6 494.6 L1462.8 494.3 L1462.9 494.0 L1463.0 493.7 L1463.2 492.7 L1463.3 491.9 L1463.4 490.9 L1463.5 489.7 L1463.6 488.5 L1463.8 487.0 L1464.0 488.3 L1464.2 490.5 L1464.3 491.4 L1464.4 492.0 L1464.5 492.4 L1464.6 492.7 L1464.8 492.8 L1465.0 492.3 L1465.2 491.2 L1465.3 490.3 L1465.4 489.1 L1465.5 487.5 L1465.6 485.4 L1465.7 482.9 L1465.8 480.3 L1465.9 478.0 L1466.0 477.0 L1466.1 477.5 L1466.2 479.2 L1466.3 481.3 L1466.4 483.1 L1466.5 484.4 L1466.6 485.0 L1466.7 485.0 L1466.8 484.3 L1466.9 482.9 L1467.0 480.7 L1467.1 477.6 L1467.2 473.7 L1467.3 469.5 L1467.4 466.0 L1467.5 464.5 L1467.6 465.7 L1467.7 468.8 L1467.8 472.6 L1467.9 476.1 L1468.0 478.6 L1468.1 480.1 L1468.2 480.6 L1468.3 480.2 L1468.4 478.8 L1468.5 476.5 L1468.6 474.0 L1468.7 471.8 L1468.8 471.0 L1468.9 472.1 L1469.0 474.6 L1469.1 477.6 L1469.2 480.3 L1469.3 482.3 L1469.4 483.6 L1469.5 484.1 L1469.6 484.0 L1469.7 483.0 L1469.8 481.3 L1469.9 478.8 L1470.0 475.6 L1470.1 472.0 L1470.2 469.1 L1470.3 468.0 L1470.4 469.3 L1470.5 472.4 L1470.6 476.2 L1470.7 479.7 L1470.8 482.6 L1470.9 484.7 L1471.0 486.1 L1471.1 486.9 L1471.2 487.2 L1471.3 486.9 L1471.4 486.2 L1471.5 485.0 L1471.6 483.2 L1471.7 481.3 L1471.8 479.7 L1471.9 479.0 L1472.0 479.5 L1472.1 481.0 L1472.2 482.7 L1472.3 484.1 L1472.4 485.0 L1472.5 485.2 L1472.6 484.7 L1472.7 483.7 L1472.8 482.3 L1472.9 481.3 L1473.0 481.0 L1473.1 481.9 L1473.2 483.7 L1473.3 485.8 L1473.4 487.8 L1473.5 489.4 L1473.6 490.7 L1473.7 491.7 L1473.8 492.4 L1473.9 492.9 L1474.0 493.3 L1474.1 493.6 L1474.2 493.9 L1474.3 494.0 L1474.4 494.1 L1474.5 494.1 L1474.6 494.0 L1474.8 493.7 L1474.9 493.4 L1475.0 493.1 L1475.2 492.0 L1475.4 490.6 L1475.5 490.2 L1475.6 490.0 L1475.8 490.8 L1475.9 491.5 L1476.0 492.2 L1476.1 492.9 L1476.2 493.4 L1476.4 494.3 L1476.5 494.6 L1476.6 494.8 L1476.8 495.2 L1477.0 495.4 L1477.1 495.5 L1477.2 495.6 L1477.4 495.7 L1477.5 495.7 L1477.6 495.7 L1477.8 495.8 L1477.9 495.8 L1478.0 495.9 L1478.1 495.9 L1478.2 495.9 L1478.6 495.9 L1478.7 496.0 L1479.2 496.0 L1479.7 496.0 L1480.2 496.0 L1480.7 496.1 L1480.9 496.1 L1481.2 496.1 L1483.9 496.1 L1486.9 496.1 L1489.9 496.0 L1492.9 495.8 L1495.9 495.4 L1496.3 495.3 L1496.8 495.1 L1497.3 494.8 L1497.8 494.4 L1498.1 494.1 L1498.3 493.9 L1498.6 493.5 L1498.8 493.1 L1498.9 492.9 L1499.1 492.4 L1499.3 491.9 L1499.6 490.8 L1499.8 489.8 L1500.1 487.7 L1500.3 485.8 L1500.5 483.2 L1500.6 481.6 L1500.7 479.6 L1500.9 474.4 L1501.1 466.6 L1501.3 454.4 L1501.5 434.8 L1501.6 420.7 L1501.7 402.5 L1501.9 351.2 L1502.1 286.6 L1502.3 250.5 L1502.5 280.9 L1502.7 339.0 L1502.9 381.6 L1503.1 401.4 L1503.3 401.3 L1503.5 381.3 L1503.7 338.5 L1503.9 280.1 L1504.1 249.5 L1504.3 285.7 L1504.5 350.6 L1504.7 402.0 L1504.9 434.5 L1505.1 454.2 L1505.3 466.4 L1505.4 470.7 L1505.5 474.2 L1505.7 479.4 L1505.9 483.0 L1506.0 484.4 L1506.1 485.6 L1506.3 487.5 L1506.4 488.3 L1506.5 489.0 L1506.7 490.1 L1506.9 490.9 L1507.0 491.3 L1507.2 491.9 L1507.4 492.4 L1507.5 492.6 L1507.7 493.0 L1507.9 493.2 L1508.0 493.4 L1508.2 493.6 L1508.5 493.8 L1508.7 493.9 L1509.0 493.9 L1509.2 493.9 L1509.5 493.8 L1509.7 493.6 L1509.9 493.3 L1510.0 493.1 L1510.1 492.8 L1510.3 492.1 L1510.5 490.7 L1510.7 488.4 L1510.9 483.9 L1511.0 480.2 L1511.1 475.0 L1511.3 459.4 L1511.5 448.0 L1511.7 458.6 L1511.9 473.2 L1512.0 477.9 L1512.1 480.9 L1512.3 483.6 L1512.5 483.2 L1512.7 479.7 L1512.9 471.9 L1513.0 465.4 L1513.1 456.6 L1513.3 432.5 L1513.5 417.0 L1513.6 421.5 L1513.7 432.6 L1513.9 456.9 L1514.0 465.9 L1514.1 472.6 L1514.3 480.9 L1514.5 485.3 L1514.6 486.6 L1514.7 487.5 L1514.9 488.4 L1515.1 488.3 L1515.3 487.3 L1515.5 485.0 L1515.6 483.0 L1515.7 480.4 L1515.8 476.7 L1515.9 471.6 L1516.1 455.1 L1516.3 429.4 L1516.5 413.0 L1516.6 417.8 L1516.7 429.5 L1516.8 443.2 L1516.9 455.3 L1517.1 471.9 L1517.3 480.9 L1517.5 485.7 L1517.6 487.3 L1517.7 488.4 L1517.8 489.2 L1517.9 489.9 L1518.0 490.3 L1518.1 490.6 L1518.2 490.8 L1518.3 490.8 L1518.4 490.7 L1518.5 490.5 L1518.6 490.1 L1518.7 489.5 L1518.8 488.6 L1518.9 487.5 L1519.0 485.9 L1519.1 483.8 L1519.2 481.1 L1519.3 477.8 L1519.4 474.3 L1519.5 471.3 L1519.6 470.0 L1519.7 470.7 L1519.8 473.0 L1519.9 475.8 L1520.0 478.3 L1520.1 480.1 L1520.2 481.2 L1520.3 481.5 L1520.4 481.1 L1520.5 480.0 L1520.6 478.1 L1520.7 475.5 L1520.8 472.0 L1520.9 467.7 L1521.0 463.0 L1521.1 458.3 L1521.2 454.6 L1521.3 453.0 L1521.4 453.8 L1521.5 456.6 L1521.6 460.4 L1521.7 464.2 L1521.8 467.2 L1521.9 469.2 L1522.0 470.0 L1522.1 469.7 L1522.2 468.4 L1522.3 466.4 L1522.4 464.2 L1522.5 462.5 L1522.6 462.0 L1522.7 463.1 L1522.8 465.5 L1522.9 468.5 L1523.0 471.3 L1523.1 473.6 L1523.2 475.1 L1523.3 475.7 L1523.4 475.5 L1523.5 474.6 L1523.6 473.1 L1523.7 471.4 L1523.8 470.2 L1523.9 470.0 L1524.0 471.1 L1524.1 473.2 L1524.2 475.9 L1524.3 478.6 L1524.4 480.9 L1524.5 482.7 L1524.6 484.0 L1524.7 484.8 L1524.8 485.1 L1524.9 485.0 L1525.0 484.6 L1525.1 484.2 L1525.2 483.9 L1525.3 484.0 L1525.4 484.7 L1525.5 485.8 L1525.7 488.5 L1525.9 490.7 L1526.1 492.3 L1526.2 492.8 L1526.3 493.3 L1526.4 493.6 L1526.5 493.9 L1526.7 494.4 L1526.9 494.7 L1527.0 494.9 L1527.1 495.0 L1527.2 495.1 L1527.3 495.1 L1527.5 495.3 L1527.7 495.4 L1527.9 495.5 L1528.0 495.5 L1528.2 495.6 L1528.4 495.7 L1528.5 495.7 L1528.9 495.8 L1529.0 495.8 L1529.4 495.8 L1529.5 495.9 L1529.9 495.9 L1530.4 495.9 L1530.9 496.0 L1531.9 496.0 L1534.9 496.1 L1537.9 496.1 L1540.9 496.2 L1543.9 496.2 L1546.9 496.2 L1549.9 496.2 L1552.9 496.2 L1555.9 496.2 L1558.9 496.2 L1561.9 496.2 L1564.9 496.2 L1566.1 496.2 L1566.6 496.2 L1567.1 496.2 L1567.6 496.2 L1567.9 496.2 L1568.1 496.2 L1568.6 496.1 L1569.1 496.1 L1569.6 496.1 L1570.1 496.0 L1570.3 496.0 L1570.5 495.9 L1570.7 495.8 L1570.9 495.6 L1571.1 495.3 L1571.3 494.8 L1571.5 493.7 L1571.7 491.7 L1571.9 488.1 L1572.1 485.5 L1572.3 488.1 L1572.5 491.7 L1572.7 493.7 L1572.9 494.8 L1573.1 495.3 L1573.3 495.6 L1573.5 495.8 L1573.7 495.9 L1573.9 496.0 L1574.1 496.0 L1574.3 496.0 L1574.5 496.1 L1574.7 496.1 L1575.2 496.1 L1575.7 496.1 L1576.2 496.2 L1576.7 496.2 L1576.9 496.2 L1577.2 496.2 L1577.7 496.2 L1579.0 496.2 L1579.5 496.2 L1579.9 496.2 L1580.0 496.2 L1580.5 496.2 L1581.0 496.2 L1581.5 496.2 L1582.0 496.2 L1582.5 496.2 L1582.9 496.2 L1583.0 496.2 L1583.2 496.1 L1583.4 496.1 L1583.6 496.1 L1583.8 496.1 L1584.0 496.1 L1584.2 496.0 L1584.4 495.9 L1584.6 495.6 L1584.8 495.1 L1585.0 494.8 L1585.1 494.9 L1585.2 495.1 L1585.4 495.6 L1585.6 495.9 L1585.8 496.0 L1585.9 496.0 L1586.0 496.1 L1586.1 496.1 L1586.2 496.1 L1586.3 496.1 L1586.4 496.1 L1586.6 496.1 L1586.8 496.1 L1587.0 496.1 L1587.1 496.1 L1587.2 496.1 L1587.3 496.1 L1587.4 496.1 L1587.6 496.1 L1587.8 496.1 L1588.1 496.1 L1588.3 496.1 L1588.6 496.1 L1588.8 496.1 L1588.9 496.1 L1589.0 496.0 L1589.1 496.0 L1589.2 496.0 L1589.3 496.0 L1589.4 495.9 L1589.6 495.8 L1589.8 495.6 L1590.0 495.2 L1590.1 494.9 L1590.2 494.3 L1590.3 493.6 L1590.4 492.5 L1590.5 491.5 L1590.6 491.0 L1590.7 491.5 L1590.8 492.5 L1590.9 493.5 L1591.0 494.2 L1591.1 494.7 L1591.2 495.0 L1591.3 495.2 L1591.4 495.2 L1591.5 495.2 L1591.6 495.2 L1591.7 495.0 L1591.8 494.7 L1591.9 494.2 L1592.0 493.5 L1592.1 492.5 L1592.2 491.5 L1592.3 491.0 L1592.4 491.5 L1592.5 492.5 L1592.6 493.6 L1592.7 494.3 L1592.8 494.9 L1592.9 495.2 L1593.0 495.4 L1593.1 495.6 L1593.2 495.7 L1593.3 495.8 L1593.5 495.9 L1593.7 496.0 L1593.9 496.0 L1594.0 496.0 L1594.1 496.1 L1594.2 496.1 L1594.3 496.1 L1594.5 496.1 L1594.6 496.1 L1594.7 496.1 L1594.9 496.1 L1595.0 496.1 L1595.1 496.1 L1595.2 496.1 L1595.4 496.1 L1595.5 496.1 L1595.6 496.1 L1595.7 496.1 L1595.9 496.1 L1596.0 496.1 L1596.1 496.1 L1596.2 496.1 L1596.4 496.1 L1596.5 496.1 L1596.6 496.1 L1596.9 496.1 L1597.0 496.1 L1597.1 496.1 L1597.2 496.1 L1597.4 496.0 L1597.6 496.0 L1597.8 495.9 L1597.9 495.9 L1598.0 495.8 L1598.1 495.8 L1598.2 495.6 L1598.4 495.3 L1598.6 494.5 L1598.8 492.9 L1599.0 491.5 L1599.2 492.8 L1599.4 494.4 L1599.6 495.0 L1599.8 495.2 L1600.0 495.0 L1600.2 494.4 L1600.4 492.8 L1600.6 491.5 L1600.8 492.9 L1600.9 493.8 L1601.0 494.5 L1601.2 495.3 L1601.4 495.6 L1601.6 495.8 L1601.8 495.9 L1602.0 496.0 L1602.1 496.0 L1602.2 496.0 L1602.4 496.0 L1602.6 496.1 L1602.8 496.1 L1603.0 496.1 L1603.1 496.1 L1603.2 496.1 L1603.6 496.1 L1603.7 496.1 L1603.9 496.1 L1604.1 496.1 L1604.2 496.1 L1604.6 496.1 L1604.7 496.1 L1605.2 496.1 L1605.7 496.1 L1606.2 496.1 L1606.9 496.1 L1609.9 496.0 L1612.9 495.8 L1615.9 495.3 L1616.6 495.0 L1617.1 494.7 L1617.6 494.3 L1618.1 493.8 L1618.3 493.6 L1618.6 493.1 L1618.8 492.8 L1618.9 492.5 L1619.1 492.1 L1619.3 491.5 L1619.6 490.4 L1619.8 489.4 L1620.1 487.5 L1620.3 485.8 L1620.6 482.1 L1620.8 478.6 L1621.0 473.6 L1621.2 466.5 L1621.3 461.7 L1621.4 455.8 L1621.6 439.3 L1621.8 412.5 L1621.9 393.2 L1622.0 368.4 L1622.2 298.6 L1622.3 254.7 L1622.4 210.5 L1622.5 175.7 L1622.6 161.0 L1622.7 171.3 L1622.8 201.7 L1622.9 241.0 L1623.0 279.4 L1623.1 311.5 L1623.2 335.3 L1623.3 350.9 L1623.4 358.8 L1623.5 359.3 L1623.6 352.5 L1623.7 338.1 L1623.8 315.7 L1623.9 285.1 L1624.0 248.4 L1624.1 210.8 L1624.2 181.8 L1624.3 172.0 L1624.4 186.3 L1624.5 220.0 L1624.6 262.6 L1624.7 305.1 L1624.8 342.2 L1624.9 372.5 L1625.0 396.4 L1625.1 415.1 L1625.2 429.6 L1625.3 441.0 L1625.5 457.0 L1625.7 467.3 L1625.9 474.2 L1626.0 476.8 L1626.1 479.0 L1626.2 480.8 L1626.3 482.4 L1626.5 485.0 L1626.7 486.9 L1626.9 488.4 L1627.0 489.0 L1627.2 490.0 L1627.4 490.9 L1627.5 491.2 L1627.7 491.9 L1627.9 492.4 L1628.0 492.6 L1628.2 493.0 L1628.4 493.3 L1628.5 493.5 L1628.7 493.7 L1628.9 494.0 L1629.1 494.2 L1629.3 494.3 L1629.4 494.4 L1629.5 494.5 L1629.7 494.6 L1629.9 494.6 L1630.1 494.6 L1630.3 494.6 L1630.5 494.6 L1630.7 494.8 L1630.9 495.0 L1631.1 495.1 L1631.3 495.3 L1631.5 495.3 L1631.7 495.4 L1631.9 495.5 L1632.1 495.5 L1632.3 495.6 L1632.5 495.6 L1632.7 495.6 L1632.9 495.7 L1633.1 495.7 L1633.6 495.8 L1633.9 495.8 L1634.1 495.8 L1634.6 495.9 L1635.1 495.9 L1635.6 495.9 L1636.1 495.9 L1636.9 496.0 L1639.9 496.1 L1642.9 496.1 L1645.9 496.1 L1648.9 496.2 L1651.9 496.2 L1654.9 496.2 L1657.9 496.2 L1660.9 496.2 L1663.9 496.2 L1666.9 496.2 L1669.9 496.2 L1672.9 496.2 L1675.9 496.2 L1678.9 496.2 L1681.9 496.2 L1684.9 496.2 L1687.9 496.2 L1690.9 496.2 L1693.9 496.2 L1696.9 496.2 L1699.9 496.2 L1702.9 496.2 L1705.9 496.2 L1708.9 496.2 L1711.9 496.2 L1714.9 496.2 L1717.9 496.2 L1720.9 496.2 L1723.5 496.2 L1723.9 496.2 L1724.0 496.2 L1724.5 496.2 L1725.0 496.2 L1725.5 496.2 L1726.0 496.2 L1726.5 496.2 L1726.9 496.2 L1727.0 496.2 L1727.5 496.2 L1727.7 496.1 L1727.9 496.1 L1728.1 496.1 L1728.3 496.0 L1728.5 495.9 L1728.7 495.8 L1728.9 495.4 L1729.1 494.6 L1729.3 492.6 L1729.5 490.5 L1729.7 492.6 L1729.9 494.6 L1730.1 495.4 L1730.3 495.8 L1730.5 495.9 L1730.7 496.0 L1730.9 496.1 L1731.1 496.1 L1731.3 496.1 L1731.5 496.2 L1731.7 496.2 L1731.9 496.2 L1732.1 496.2 L1732.6 496.2 L1732.9 496.2 L1733.1 496.2 L1733.6 496.2 L1734.1 496.2 L1734.6 496.2 L1735.1 496.2 L1735.9 496.2 L1738.9 496.2 L1741.9 496.2 L1744.9 496.2 L1747.9 496.2 L1750.9 496.2 L1753.9 496.2 L1756.9 496.2 L1759.9 496.2 L1762.9 496.2 L1765.9 496.2 L1768.9 496.2 L1771.9 496.2 L1774.9 496.2 L1777.9 496.2 L1780.9 496.2 L1783.9 496.2 L1786.9 496.2 L1789.9 496.2 L1792.9 496.2 L1795.9 496.2 L1798.9 496.2 L1801.9 496.2 L1804.9 496.2 L1807.9 496.2 L1810.9 496.2 L1813.9 496.2 L1816.9 496.2 L1819.9 496.2 L1822.9 496.2 L1825.9 496.2 L1828.9 496.2 L1831.9 496.2 L1834.9 496.2 L1837.9 496.2 L1838.5 496.2" fill="none" stroke="#1a1a1a" stroke-width="1" stroke-linejoin="round"/>
<path d="M962.8 497.6 C967.0 497.6 967.0 486.1 971.2 486.1" fill="none" stroke="#ff2222" stroke-width="0.9" opacity="0.9"/>
<path d="M1021.5 497.6 C1027.2 497.6 1027.2 486.1 1033.0 486.1" fill="none" stroke="#ff2222" stroke-width="0.9" opacity="0.9"/>
<path d="M1044.8 497.6 C1051.7 497.6 1051.7 485.7 1058.6 485.7" fill="none" stroke="#ff2222" stroke-width="0.9" opacity="0.9"/>
<path d="M1110.2 497.6 C1114.8 497.6 1114.8 485.8 1119.3 485.8" fill="none" stroke="#ff2222" stroke-width="0.9" opacity="0.9"/>
<path d="M1200.0 497.6 C1205.0 497.6 1205.0 486.0 1209.9 486.0" fill="none" stroke="#ff2222" stroke-width="0.9" opacity="0.9"/>
<path d="M1220.9 497.6 C1227.1 497.6 1227.1 485.8 1233.3 485.8" fill="none" stroke="#ff2222" stroke-width="0.9" opacity="0.9"/>
<path d="M1238.5 497.6 C1245.5 497.6 1245.5 485.5 1252.4 485.5" fill="none" stroke="#ff2222" stroke-width="0.9" opacity="0.9"/>
<path d="M1264.6 497.6 C1271.5 497.6 1271.5 485.0 1278.5 485.0" fill="none" stroke="#ff2222" stroke-width="0.9" opacity="0.9"/>
<path d="M1279.8 497.6 C1285.9 497.6 1285.9 485.0 1292.0 485.0" fill="none" stroke="#ff2222" stroke-width="0.9" opacity="0.9"/>
<path d="M1292.9 497.6 C1306.2 497.6 1306.2 490.6 1319.5 490.6" fill="none" stroke="#ff2222" stroke-width="0.9" opacity="0.9"/>
<path d="M1320.0 497.6 C1328.8 497.6 1328.8 484.0 1337.6 484.0" fill="none" stroke="#ff2222" stroke-width="0.9" opacity="0.9"/>
<path d="M1407.3 497.6 C1417.4 497.6 1417.4 482.6 1427.6 482.6" fill="none" stroke="#ff2222" stroke-width="0.9" opacity="0.9"/>
<path d="M1424.5 497.6 C1434.0 497.6 1434.0 482.5 1443.5 482.5" fill="none" stroke="#ff2222" stroke-width="0.9" opacity="0.9"/>
<path d="M1453.0 497.6 C1458.5 497.6 1458.5 484.8 1464.0 484.8" fill="none" stroke="#ff2222" stroke-width="0.9" opacity="0.9"/>
<path d="M1463.3 497.6 C1473.2 497.6 1473.2 482.2 1483.0 482.2" fill="none" stroke="#ff2222" stroke-width="0.9" opacity="0.9"/>
<path d="M1497.5 497.6 C1503.5 497.6 1503.5 461.5 1509.5 461.5" fill="none" stroke="#ff2222" stroke-width="0.9" opacity="0.9"/>
<path d="M1505.0 497.6 C1521.2 497.6 1521.2 469.9 1537.5 469.9" fill="none" stroke="#ff2222" stroke-width="0.9" opacity="0.9"/>
<path d="M1619.2 497.6 C1623.5 497.6 1623.5 462.2 1627.8 462.2" fill="none" stroke="#ff2222" stroke-width="0.9" opacity="0.9"/>
<path d="M956.3 388.5 V391.5 L967.5 394.0 V397.0" fill="none" stroke="#a4a4da" stroke-width="0.8"/>
<text transform="translate(960.2,388.1) rotate(-90) scale(0.93,1)" font-size="11" fill="#1b1b8f">6.24</text>
<path d="M967.5 387.0 V390.0 L967.5 394.0 V397.0" fill="none" stroke="#a4a4da" stroke-width="0.8"/>
<text transform="translate(971.4,386.6) rotate(-90) scale(0.93,1)" font-size="11" fill="#1b1b8f">6.23</text>
<path d="M1005.9 426.5 V429.5 L1026.5 430.0 V433.0" fill="none" stroke="#a4a4da" stroke-width="0.8"/>
<text transform="translate(1009.8,426.1) rotate(-90) scale(0.93,1)" font-size="11" fill="#1b1b8f">5.75</text>
<path d="M1016.6 425.5 V428.5 L1026.8 430.0 V433.0" fill="none" stroke="#a4a4da" stroke-width="0.8"/>
<text transform="translate(1020.5,425.1) rotate(-90) scale(0.93,1)" font-size="11" fill="#1b1b8f">5.75</text>
<path d="M1027.9 424.5 V427.5 L1027.2 430.0 V433.0" fill="none" stroke="#a4a4da" stroke-width="0.8"/>
<text transform="translate(1031.8,424.1) rotate(-90) scale(0.93,1)" font-size="11" fill="#1b1b8f">5.74</text>
<path d="M1019.5 464.3 V467.3 L1024.7 471.0 V474.0" fill="none" stroke="#a4a4da" stroke-width="0.8"/>
<text transform="translate(1023.4,463.9) rotate(-90) scale(0.93,1)" font-size="11" fill="#1b1b8f">5.76</text>
<path d="M1035.0 464.3 V467.3 L1029.2 471.0 V474.0" fill="none" stroke="#a4a4da" stroke-width="0.8"/>
<text transform="translate(1038.9,463.9) rotate(-90) scale(0.93,1)" font-size="11" fill="#1b1b8f">5.73</text>
<path d="M1045.8 464.3 V467.3 L1029.8 472.0 V475.0" fill="none" stroke="#a4a4da" stroke-width="0.8"/>
<text transform="translate(1049.7,463.9) rotate(-90) scale(0.93,1)" font-size="11" fill="#1b1b8f">5.73</text>
<path d="M1044.8 367.0 V370.0 L1052.6 373.0 V376.0" fill="none" stroke="#a4a4da" stroke-width="0.8"/>
<text transform="translate(1048.7,366.6) rotate(-90) scale(0.93,1)" font-size="11" fill="#1b1b8f">5.54</text>
<path d="M1056.5 362.2 V365.2 L1055.3 369.0 V372.0" fill="none" stroke="#a4a4da" stroke-width="0.8"/>
<text transform="translate(1060.4,361.8) rotate(-90) scale(0.93,1)" font-size="11" fill="#1b1b8f">5.52</text>
<path d="M1114.8 393.0 V396.0 L1114.6 400.0 V403.0" fill="none" stroke="#a4a4da" stroke-width="0.8"/>
<text transform="translate(1118.7,392.6) rotate(-90) scale(0.93,1)" font-size="11" fill="#1b1b8f">5.03</text>
<path d="M1109.0 434.5 V437.5 L1114.0 438.0 V441.0" fill="none" stroke="#a4a4da" stroke-width="0.8"/>
<text transform="translate(1112.9,434.1) rotate(-90) scale(0.93,1)" font-size="11" fill="#1b1b8f">5.04</text>
<path d="M1121.6 433.5 V436.5 L1115.2 438.0 V441.0" fill="none" stroke="#a4a4da" stroke-width="0.8"/>
<text transform="translate(1125.5,433.1) rotate(-90) scale(0.93,1)" font-size="11" fill="#1b1b8f">5.03</text>
<path d="M1195.4 436.2 V439.2 L1205.0 441.0 V444.0" fill="none" stroke="#a4a4da" stroke-width="0.8"/>
<text transform="translate(1199.3,435.8) rotate(-90) scale(0.93,1)" font-size="11" fill="#1b1b8f">4.29</text>
<path d="M1207.0 436.2 V439.2 L1205.6 441.0 V444.0" fill="none" stroke="#a4a4da" stroke-width="0.8"/>
<text transform="translate(1210.9,435.8) rotate(-90) scale(0.93,1)" font-size="11" fill="#1b1b8f">4.29</text>
<path d="M1225.0 411.5 V414.5 L1224.4 417.0 V420.0" fill="none" stroke="#a4a4da" stroke-width="0.8"/>
<text transform="translate(1228.9,411.1) rotate(-90) scale(0.93,1)" font-size="11" fill="#1b1b8f">4.14</text>
<path d="M1236.4 412.8 V415.8 L1227.5 419.0 V422.0" fill="none" stroke="#a4a4da" stroke-width="0.8"/>
<text transform="translate(1240.3,412.4) rotate(-90) scale(0.93,1)" font-size="11" fill="#1b1b8f">4.12</text>
<path d="M1236.9 440.0 V443.0 L1244.4 446.0 V449.0" fill="none" stroke="#a4a4da" stroke-width="0.8"/>
<text transform="translate(1240.8,439.6) rotate(-90) scale(0.93,1)" font-size="11" fill="#1b1b8f">3.97</text>
<path d="M1247.8 435.6 V438.6 L1247.4 441.0 V444.0" fill="none" stroke="#a4a4da" stroke-width="0.8"/>
<text transform="translate(1251.7,435.2) rotate(-90) scale(0.93,1)" font-size="11" fill="#1b1b8f">3.95</text>
<path d="M1258.9 435.6 V438.6 L1248.0 442.0 V445.0" fill="none" stroke="#a4a4da" stroke-width="0.8"/>
<text transform="translate(1262.8,435.2) rotate(-90) scale(0.93,1)" font-size="11" fill="#1b1b8f">3.95</text>
<path d="M1265.1 361.7 V364.7 L1268.2 368.0 V371.0" fill="none" stroke="#a4a4da" stroke-width="0.8"/>
<text transform="translate(1269.0,361.3) rotate(-90) scale(0.93,1)" font-size="11" fill="#1b1b8f">3.78</text>
<path d="M1271.6 315.0 V318.0 L1271.3 322.0 V325.0" fill="none" stroke="#a4a4da" stroke-width="0.8"/>
<text transform="translate(1275.5,314.6) rotate(-90) scale(0.93,1)" font-size="11" fill="#1b1b8f">3.76</text>
<path d="M1282.8 339.0 V342.0 L1282.3 346.0 V349.0" fill="none" stroke="#a4a4da" stroke-width="0.8"/>
<text transform="translate(1286.7,338.6) rotate(-90) scale(0.93,1)" font-size="11" fill="#1b1b8f">3.67</text>
<path d="M1289.2 374.4 V377.4 L1284.9 381.0 V384.0" fill="none" stroke="#a4a4da" stroke-width="0.8"/>
<text transform="translate(1293.1,374.0) rotate(-90) scale(0.93,1)" font-size="11" fill="#1b1b8f">3.65</text>
<path d="M1293.9 480.3 V483.3 L1297.0 485.0 V488.0" fill="none" stroke="#a4a4da" stroke-width="0.8"/>
<text transform="translate(1297.8,479.9) rotate(-90) scale(0.93,1)" font-size="11" fill="#1b1b8f">3.47</text>
<path d="M1304.8 480.3 V483.3 L1301.0 485.0 V488.0" fill="none" stroke="#a4a4da" stroke-width="0.8"/>
<text transform="translate(1308.7,479.9) rotate(-90) scale(0.93,1)" font-size="11" fill="#1b1b8f">3.45</text>
<path d="M1300.9 446.0 V449.0 L1311.3 453.0 V456.0" fill="none" stroke="#a4a4da" stroke-width="0.8"/>
<text transform="translate(1304.8,445.6) rotate(-90) scale(0.93,1)" font-size="11" fill="#1b1b8f">3.43</text>
<path d="M1312.0 451.3 V454.3 L1313.5 455.0 V458.0" fill="none" stroke="#a4a4da" stroke-width="0.8"/>
<text transform="translate(1315.9,450.9) rotate(-90) scale(0.93,1)" font-size="11" fill="#1b1b8f">3.40</text>
<path d="M1323.4 438.3 V441.3 L1327.7 444.0 V447.0" fill="none" stroke="#a4a4da" stroke-width="0.8"/>
<text transform="translate(1327.3,437.9) rotate(-90) scale(0.93,1)" font-size="11" fill="#1b1b8f">3.29</text>
<path d="M1330.2 409.0 V412.0 L1329.7 416.0 V419.0" fill="none" stroke="#a4a4da" stroke-width="0.8"/>
<text transform="translate(1334.1,408.6) rotate(-90) scale(0.93,1)" font-size="11" fill="#1b1b8f">3.28</text>
<path d="M1337.7 435.7 V438.7 L1331.6 441.0 V444.0" fill="none" stroke="#a4a4da" stroke-width="0.8"/>
<text transform="translate(1341.6,435.3) rotate(-90) scale(0.93,1)" font-size="11" fill="#1b1b8f">3.27</text>
<path d="M1375.0 458.0 V461.0 L1415.6 461.0 V464.0" fill="none" stroke="#a4a4da" stroke-width="0.8"/>
<text transform="translate(1378.9,457.6) rotate(-90) scale(0.93,1)" font-size="11" fill="#1b1b8f">2.58</text>
<path d="M1386.0 451.2 V454.2 L1416.8 457.0 V460.0" fill="none" stroke="#a4a4da" stroke-width="0.8"/>
<text transform="translate(1389.9,450.8) rotate(-90) scale(0.93,1)" font-size="11" fill="#1b1b8f">2.57</text>
<path d="M1396.9 450.2 V453.2 L1417.9 453.0 V456.0" fill="none" stroke="#a4a4da" stroke-width="0.8"/>
<text transform="translate(1400.8,449.8) rotate(-90) scale(0.93,1)" font-size="11" fill="#1b1b8f">2.56</text>
<path d="M1407.9 447.4 V450.4 L1419.5 455.0 V458.0" fill="none" stroke="#a4a4da" stroke-width="0.8"/>
<text transform="translate(1411.8,447.0) rotate(-90) scale(0.93,1)" font-size="11" fill="#1b1b8f">2.55</text>
<path d="M1418.8 443.6 V446.6 L1433.4 449.0 V452.0" fill="none" stroke="#a4a4da" stroke-width="0.8"/>
<text transform="translate(1422.7,443.2) rotate(-90) scale(0.93,1)" font-size="11" fill="#1b1b8f">2.43</text>
<path d="M1430.0 448.0 V451.0 L1434.7 452.0 V455.0" fill="none" stroke="#a4a4da" stroke-width="0.8"/>
<text transform="translate(1433.9,447.6) rotate(-90) scale(0.93,1)" font-size="11" fill="#1b1b8f">2.42</text>
<path d="M1441.0 436.5 V439.5 L1436.5 443.0 V446.0" fill="none" stroke="#a4a4da" stroke-width="0.8"/>
<text transform="translate(1444.9,436.1) rotate(-90) scale(0.93,1)" font-size="11" fill="#1b1b8f">2.41</text>
<path d="M1451.9 442.3 V445.3 L1437.8 445.0 V448.0" fill="none" stroke="#a4a4da" stroke-width="0.8"/>
<text transform="translate(1455.8,441.9) rotate(-90) scale(0.93,1)" font-size="11" fill="#1b1b8f">2.40</text>
<path d="M1462.9 439.5 V442.5 L1456.5 444.0 V447.0" fill="none" stroke="#a4a4da" stroke-width="0.8"/>
<text transform="translate(1466.8,439.1) rotate(-90) scale(0.93,1)" font-size="11" fill="#1b1b8f">2.24</text>
<path d="M1474.0 434.8 V437.8 L1459.4 441.0 V444.0" fill="none" stroke="#a4a4da" stroke-width="0.8"/>
<text transform="translate(1477.9,434.4) rotate(-90) scale(0.93,1)" font-size="11" fill="#1b1b8f">2.22</text>
<path d="M1466.3 462.0 V465.0 L1467.3 459.0 V462.0" fill="none" stroke="#a4a4da" stroke-width="0.8"/>
<text transform="translate(1470.2,461.6) rotate(-90) scale(0.93,1)" font-size="11" fill="#1b1b8f">2.16</text>
<path d="M1484.8 452.3 V455.3 L1468.8 459.0 V462.0" fill="none" stroke="#a4a4da" stroke-width="0.8"/>
<text transform="translate(1488.7,451.9) rotate(-90) scale(0.93,1)" font-size="11" fill="#1b1b8f">2.15</text>
<path d="M1496.0 456.0 V459.0 L1470.5 461.0 V464.0" fill="none" stroke="#a4a4da" stroke-width="0.8"/>
<text transform="translate(1499.9,455.6) rotate(-90) scale(0.93,1)" font-size="11" fill="#1b1b8f">2.13</text>
<path d="M1477.3 481.0 V484.0 L1475.5 485.0 V488.0" fill="none" stroke="#a4a4da" stroke-width="0.8"/>
<text transform="translate(1481.2,480.6) rotate(-90) scale(0.93,1)" font-size="11" fill="#1b1b8f">2.10</text>
<path d="M1494.0 481.0 V484.0 L1477.0 486.0 V489.0" fill="none" stroke="#a4a4da" stroke-width="0.8"/>
<text transform="translate(1497.9,480.6) rotate(-90) scale(0.93,1)" font-size="11" fill="#1b1b8f">2.08</text>
<path d="M1488.1 239.0 V242.0 L1501.7 244.0 V247.0" fill="none" stroke="#a4a4da" stroke-width="0.8"/>
<text transform="translate(1492.0,238.6) rotate(-90) scale(0.93,1)" font-size="11" fill="#1b1b8f">1.87</text>
<path d="M1499.2 248.0 V251.0 L1502.4 246.0 V249.0" fill="none" stroke="#a4a4da" stroke-width="0.8"/>
<text transform="translate(1503.1,247.6) rotate(-90) scale(0.93,1)" font-size="11" fill="#1b1b8f">1.86</text>
<path d="M1510.3 237.5 V240.5 L1504.2 233.0 V236.0" fill="none" stroke="#a4a4da" stroke-width="0.8"/>
<text transform="translate(1514.2,237.1) rotate(-90) scale(0.93,1)" font-size="11" fill="#1b1b8f">1.86</text>
<path d="M1511.0 405.7 V408.7 L1513.5 412.0 V415.0" fill="none" stroke="#a4a4da" stroke-width="0.8"/>
<text transform="translate(1514.9,405.3) rotate(-90) scale(0.93,1)" font-size="11" fill="#1b1b8f">1.78</text>
<path d="M1522.1 400.8 V403.8 L1516.5 408.0 V411.0" fill="none" stroke="#a4a4da" stroke-width="0.8"/>
<text transform="translate(1526.0,400.4) rotate(-90) scale(0.93,1)" font-size="11" fill="#1b1b8f">1.76</text>
<path d="M1523.1 441.5 V444.5 L1520.8 448.0 V451.0" fill="none" stroke="#a4a4da" stroke-width="0.8"/>
<text transform="translate(1527.0,441.1) rotate(-90) scale(0.93,1)" font-size="11" fill="#1b1b8f">1.72</text>
<path d="M1534.1 443.6 V446.6 L1521.3 447.0 V450.0" fill="none" stroke="#a4a4da" stroke-width="0.8"/>
<text transform="translate(1538.0,443.2) rotate(-90) scale(0.93,1)" font-size="11" fill="#1b1b8f">1.71</text>
<path d="M1545.0 441.7 V444.7 L1522.0 448.0 V451.0" fill="none" stroke="#a4a4da" stroke-width="0.8"/>
<text transform="translate(1548.9,441.3) rotate(-90) scale(0.93,1)" font-size="11" fill="#1b1b8f">1.71</text>
<path d="M1556.3 457.3 V460.3 L1523.0 457.0 V460.0" fill="none" stroke="#a4a4da" stroke-width="0.8"/>
<text transform="translate(1560.2,456.9) rotate(-90) scale(0.93,1)" font-size="11" fill="#1b1b8f">1.71</text>
<path d="M1529.0 482.7 V485.7 L1528.0 487.0 V490.0" fill="none" stroke="#a4a4da" stroke-width="0.8"/>
<text transform="translate(1532.9,482.3) rotate(-90) scale(0.93,1)" font-size="11" fill="#1b1b8f">1.65</text>
<path d="M1540.0 482.7 V485.7 L1529.0 487.5 V490.5" fill="none" stroke="#a4a4da" stroke-width="0.8"/>
<text transform="translate(1543.9,482.3) rotate(-90) scale(0.93,1)" font-size="11" fill="#1b1b8f">1.65</text>
<path d="M1550.9 482.7 V485.7 L1530.0 488.0 V491.0" fill="none" stroke="#a4a4da" stroke-width="0.8"/>
<text transform="translate(1554.8,482.3) rotate(-90) scale(0.93,1)" font-size="11" fill="#1b1b8f">1.64</text>
<path d="M1561.9 482.7 V485.7 L1531.0 488.5 V491.5" fill="none" stroke="#a4a4da" stroke-width="0.8"/>
<text transform="translate(1565.8,482.3) rotate(-90) scale(0.93,1)" font-size="11" fill="#1b1b8f">1.64</text>
<path d="M1572.9 482.7 V485.7 L1572.1 481.5 V484.5" fill="none" stroke="#a4a4da" stroke-width="0.8"/>
<text transform="translate(1576.8,482.3) rotate(-90) scale(0.93,1)" font-size="11" fill="#1b1b8f">1.60</text>
<path d="M1622.6 148.2 V151.2 L1622.6 156.0 V159.0" fill="none" stroke="#a4a4da" stroke-width="0.8"/>
<text transform="translate(1626.5,147.8) rotate(-90) scale(0.93,1)" font-size="11" fill="#1b1b8f">0.89</text>
<path d="M1633.8 161.0 V164.0 L1624.5 167.0 V170.0" fill="none" stroke="#a4a4da" stroke-width="0.8"/>
<text transform="translate(1637.7,160.6) rotate(-90) scale(0.93,1)" font-size="11" fill="#1b1b8f">0.88</text>
<text x="1024.9" y="355.6" font-size="11" font-weight="bold" fill="#0d0d78" transform="scale(0.915,1)">M16(&lt;s&gt;, 12)</text>
<path d="M966.3 361.2 V358.5 H968.7 V361.2" fill="none" stroke="#6a6ab8" stroke-width="0.9"/>
<text x="1090.1" y="331.4" font-size="11" font-weight="bold" fill="#0d0d78" transform="scale(0.915,1)">M15(qd, 20a)</text>
<path d="M1024.8 337.2 V334.5 H1029.2 V337.2" fill="none" stroke="#6a6ab8" stroke-width="0.9"/>
<text x="1122.7" y="310.2" font-size="11" font-weight="bold" fill="#0d0d78" transform="scale(0.915,1)">M14(d, 15)</text>
<path d="M1046.3 316.2 V313.5 H1056.3 V316.2" fill="none" stroke="#6a6ab8" stroke-width="0.9"/>
<text x="1193.9" y="362.2" font-size="11" font-weight="bold" fill="#0d0d78" transform="scale(0.915,1)">M13(m, 4)</text>
<path d="M1112.4 368.2 V365.5 H1117.0 V368.2" fill="none" stroke="#6a6ab8" stroke-width="0.9"/>
<text x="1283.8" y="379.6" font-size="11" font-weight="bold" fill="#0d0d78" transform="scale(0.915,1)">M12(br d, 9a)</text>
<path d="M1203.0 385.7 V383.0 H1207.6 V385.7" fill="none" stroke="#6a6ab8" stroke-width="0.9"/>
<text x="1315.0" y="358.3" font-size="11" font-weight="bold" fill="#0d0d78" transform="scale(0.915,1)">M11(d, 15)</text>
<path d="M1223.7 364.5 V361.8 H1231.4 V364.5" fill="none" stroke="#6a6ab8" stroke-width="0.9"/>
<text x="1331.9" y="262.8" font-size="11" font-weight="bold" fill="#0d0d78" transform="scale(0.915,1)">M10(dd, 16)</text>
<path d="M1241.3 269.2 V266.5 H1250.4 V269.2" fill="none" stroke="#6a6ab8" stroke-width="0.9"/>
<text x="1363.7" y="241.8" font-size="11" font-weight="bold" fill="#0d0d78" transform="scale(0.915,1)">M09(d, 22)</text>
<path d="M1266.7 247.9 V245.2 H1276.3 V247.9" fill="none" stroke="#6a6ab8" stroke-width="0.9"/>
<text x="1375.8" y="283.8" font-size="11" font-weight="bold" fill="#0d0d78" transform="scale(0.915,1)">M08(d, 22)</text>
<path d="M1279.4 290.0 V287.3 H1286.6 V290.0" fill="none" stroke="#6a6ab8" stroke-width="0.9"/>
<text x="1399.8" y="307.7" font-size="11" font-weight="bold" fill="#0d0d78" transform="scale(0.915,1)">M07(m, 16)</text>
<path d="M1295.3 313.2 V310.5 H1317.4 V313.2" fill="none" stroke="#6a6ab8" stroke-width="0.9"/>
<text x="1427.3" y="378.2" font-size="11" font-weight="bold" fill="#0d0d78" transform="scale(0.915,1)">M06(t, 17)</text>
<path d="M1322.2 384.2 V381.5 H1335.0 V384.2" fill="none" stroke="#6a6ab8" stroke-width="0.9"/>
<text x="1516.5" y="383.3" font-size="11" font-weight="bold" fill="#0d0d78" transform="scale(0.915,1)">M05(ddd, 17)</text>
<path d="M1409.8 389.2 V386.5 H1425.4 V389.2" fill="none" stroke="#6a6ab8" stroke-width="0.9"/>
<text x="1538.1" y="404.4" font-size="11" font-weight="bold" fill="#0d0d78" transform="scale(0.915,1)">M04(dd, 14)</text>
<path d="M1427.4 410.2 V407.5 H1441.4 V410.2" fill="none" stroke="#6a6ab8" stroke-width="0.9"/>
<text x="1578.9" y="165.4" font-size="11" font-weight="bold" fill="#0d0d78" transform="scale(0.915,1)">M03(m, 14)</text>
<path d="M1462.8 171.2 V168.5 H1477.5 V171.2" fill="none" stroke="#6a6ab8" stroke-width="0.9"/>
<text x="1602.5" y="144.3" font-size="11" font-weight="bold" fill="#0d0d78" transform="scale(0.915,1)">M02(Overlapped, 11,13)</text>
<path d="M1507.5 150.2 V147.5 H1535.6 V150.2" fill="none" stroke="#6a6ab8" stroke-width="0.9"/>
<text x="1613.9" y="186.4" font-size="11" font-weight="bold" fill="#0d0d78" transform="scale(0.915,1)">M17(dd, 25)</text>
<path d="M1500.6 192.4 V189.7 H1507.5 V192.4" fill="none" stroke="#6a6ab8" stroke-width="0.9"/>
<text x="1561.4" y="207.5" font-size="11" font-weight="bold" fill="#0d0d78" transform="scale(0.915,1)">M18(br d, 13)</text>
<path d="M1455.5 213.7 V211.0 H1462.5 V213.7" fill="none" stroke="#6a6ab8" stroke-width="0.9"/>
<text x="1748.0" y="117.3" font-size="11" font-weight="bold" fill="#0d0d78" transform="scale(0.915,1)">M01(d, 24)</text>
<path d="M1621.5 123.2 V120.5 H1625.5 V123.2" fill="none" stroke="#6a6ab8" stroke-width="0.9"/>
<path d="M965.3 542 V550.5 H969.2 V542 M965.3 548.3 H969.2" fill="none" stroke="#ff2222" stroke-width="0.8" opacity="0.85"/>
<text transform="translate(971.3,541.3) rotate(-90) scale(0.98,1)" font-size="12" fill="#ff2222">0.96</text>
<path d="M1024.0 542 V550.5 H1031.0 V542 M1024.0 548.3 H1031.0" fill="none" stroke="#ff2222" stroke-width="0.8" opacity="0.85"/>
<text transform="translate(1032.0,541.3) rotate(-90) scale(0.98,1)" font-size="12" fill="#ff2222">0.96</text>
<path d="M1047.3 542 V550.5 H1056.6 V542 M1047.3 548.3 H1056.6" fill="none" stroke="#ff2222" stroke-width="0.8" opacity="0.85"/>
<text transform="translate(1056.3,541.3) rotate(-90) scale(0.98,1)" font-size="12" fill="#ff2222">0.99</text>
<path d="M1112.7 542 V550.5 H1117.3 V542 M1112.7 548.3 H1117.3" fill="none" stroke="#ff2222" stroke-width="0.8" opacity="0.85"/>
<text transform="translate(1119.3,541.3) rotate(-90) scale(0.98,1)" font-size="12" fill="#ff2222">0.98</text>
<path d="M1202.5 542 V550.5 H1207.9 V542 M1202.5 548.3 H1207.9" fill="none" stroke="#ff2222" stroke-width="0.8" opacity="0.85"/>
<text transform="translate(1210.6,541.3) rotate(-90) scale(0.98,1)" font-size="12" fill="#ff2222">0.97</text>
<path d="M1223.4 542 V550.5 H1231.3 V542 M1223.4 548.3 H1231.3" fill="none" stroke="#ff2222" stroke-width="0.8" opacity="0.85"/>
<text transform="translate(1231.6,541.3) rotate(-90) scale(0.98,1)" font-size="12" fill="#ff2222">0.98</text>
<path d="M1241.0 542 V550.5 H1250.4 V542 M1241.0 548.3 H1250.4" fill="none" stroke="#ff2222" stroke-width="0.8" opacity="0.85"/>
<text transform="translate(1250.3,541.3) rotate(-90) scale(0.98,1)" font-size="12" fill="#ff2222">1.01</text>
<path d="M1267.1 542 V550.5 H1276.5 V542 M1267.1 548.3 H1276.5" fill="none" stroke="#ff2222" stroke-width="0.8" opacity="0.85"/>
<text transform="translate(1276.2,541.3) rotate(-90) scale(0.98,1)" font-size="12" fill="#ff2222">1.05</text>
<path d="M1282.3 542 V550.5 H1290.0 V542 M1282.3 548.3 H1290.0" fill="none" stroke="#ff2222" stroke-width="0.8" opacity="0.85"/>
<text transform="translate(1290.3,541.3) rotate(-90) scale(0.98,1)" font-size="12" fill="#ff2222">1.05</text>
<path d="M1295.4 542 V550.5 H1317.5 V542 M1295.4 548.3 H1317.5" fill="none" stroke="#ff2222" stroke-width="0.8" opacity="0.85"/>
<text transform="translate(1311.2,541.3) rotate(-90) scale(0.98,1)" font-size="12" fill="#ff2222">1.44</text>
<path d="M1322.5 542 V550.5 H1335.6 V542 M1322.5 548.3 H1335.6" fill="none" stroke="#ff2222" stroke-width="0.8" opacity="0.85"/>
<text transform="translate(1333.7,541.3) rotate(-90) scale(0.98,1)" font-size="12" fill="#ff2222">1.13</text>
<path d="M1409.8 542 V550.5 H1425.6 V542 M1409.8 548.3 H1425.6" fill="none" stroke="#ff2222" stroke-width="0.8" opacity="0.85"/>
<text transform="translate(1422.3,541.3) rotate(-90) scale(0.98,1)" font-size="12" fill="#ff2222">1.25</text>
<path d="M1427.0 542 V550.5 H1441.5 V542 M1427.0 548.3 H1441.5" fill="none" stroke="#ff2222" stroke-width="0.8" opacity="0.85"/>
<text transform="translate(1439.6,541.3) rotate(-90) scale(0.98,1)" font-size="12" fill="#ff2222">1.26</text>
<path d="M1455.5 542 V550.5 H1462.0 V542 M1455.5 548.3 H1462.0" fill="none" stroke="#ff2222" stroke-width="0.8" opacity="0.85"/>
<text transform="translate(1463.8,541.3) rotate(-90) scale(0.98,1)" font-size="12" fill="#ff2222">1.07</text>
<path d="M1465.8 542 V550.5 H1481.0 V542 M1465.8 548.3 H1481.0" fill="none" stroke="#ff2222" stroke-width="0.8" opacity="0.85"/>
<text transform="translate(1477.9,541.3) rotate(-90) scale(0.98,1)" font-size="12" fill="#ff2222">1.28</text>
<path d="M1500.0 542 V550.5 H1507.5 V542 M1500.0 548.3 H1507.5" fill="none" stroke="#ff2222" stroke-width="0.8" opacity="0.85"/>
<text transform="translate(1509.3,541.3) rotate(-90) scale(0.98,1)" font-size="12" fill="#ff2222">3.01</text>
<path d="M1507.5 542 V550.5 H1535.5 V542 M1507.5 548.3 H1535.5" fill="none" stroke="#ff2222" stroke-width="0.8" opacity="0.85"/>
<text transform="translate(1526.3,541.3) rotate(-90) scale(0.98,1)" font-size="12" fill="#ff2222">2.31</text>
<path d="M1621.7 542 V550.5 H1625.8 V542 M1621.7 548.3 H1625.8" fill="none" stroke="#ff2222" stroke-width="0.8" opacity="0.85"/>
<text transform="translate(1628.3,541.3) rotate(-90) scale(0.98,1)" font-size="12" fill="#ff2222">2.95</text>
<path d="M1282.6 498 C1283.5 510 1284.5 512 1286 520" fill="none" stroke="#ff2222" stroke-width="0.8"/>
<path d="M1469.5 498 C1470.5 508 1472 512 1473.8 520" fill="none" stroke="#ff2222" stroke-width="0.8"/>
<rect x="446.5" y="555.7" width="1461.5" height="1.2" fill="#9a9a9a"/>
<path d="M1866.1 556.5 v2.8 M1859.9 556.5 v2.8 M1853.8 556.5 v5.5 M1847.7 556.5 v2.8 M1841.5 556.5 v2.8 M1835.4 556.5 v2.8 M1829.3 556.5 v2.8 M1823.2 556.5 v4.2 M1817.0 556.5 v2.8 M1810.9 556.5 v2.8 M1804.8 556.5 v2.8 M1798.6 556.5 v2.8 M1792.5 556.5 v5.5 M1786.4 556.5 v2.8 M1780.2 556.5 v2.8 M1774.1 556.5 v2.8 M1768.0 556.5 v2.8 M1761.9 556.5 v4.2 M1755.7 556.5 v2.8 M1749.6 556.5 v2.8 M1743.5 556.5 v2.8 M1737.3 556.5 v2.8 M1731.2 556.5 v5.5 M1725.1 556.5 v2.8 M1718.9 556.5 v2.8 M1712.8 556.5 v2.8 M1706.7 556.5 v2.8 M1700.5 556.5 v4.2 M1694.4 556.5 v2.8 M1688.3 556.5 v2.8 M1682.2 556.5 v2.8 M1676.0 556.5 v2.8 M1669.9 556.5 v5.5 M1663.8 556.5 v2.8 M1657.6 556.5 v2.8 M1651.5 556.5 v2.8 M1645.4 556.5 v2.8 M1639.2 556.5 v4.2 M1633.1 556.5 v2.8 M1627.0 556.5 v2.8 M1620.9 556.5 v2.8 M1614.7 556.5 v2.8 M1608.6 556.5 v5.5 M1602.5 556.5 v2.8 M1596.3 556.5 v2.8 M1590.2 556.5 v2.8 M1584.1 556.5 v2.8 M1578.0 556.5 v4.2 M1571.8 556.5 v2.8 M1565.7 556.5 v2.8 M1559.6 556.5 v2.8 M1553.4 556.5 v2.8 M1547.3 556.5 v5.5 M1541.2 556.5 v2.8 M1535.0 556.5 v2.8 M1528.9 556.5 v2.8 M1522.8 556.5 v2.8 M1516.7 556.5 v4.2 M1510.5 556.5 v2.8 M1504.4 556.5 v2.8 M1498.3 556.5 v2.8 M1492.1 556.5 v2.8 M1486.0 556.5 v5.5 M1479.9 556.5 v2.8 M1473.7 556.5 v2.8 M1467.6 556.5 v2.8 M1461.5 556.5 v2.8 M1455.4 556.5 v4.2 M1449.2 556.5 v2.8 M1443.1 556.5 v2.8 M1437.0 556.5 v2.8 M1430.8 556.5 v2.8 M1424.7 556.5 v5.5 M1418.6 556.5 v2.8 M1412.4 556.5 v2.8 M1406.3 556.5 v2.8 M1400.2 556.5 v2.8 M1394.1 556.5 v4.2 M1387.9 556.5 v2.8 M1381.8 556.5 v2.8 M1375.7 556.5 v2.8 M1369.5 556.5 v2.8 M1363.4 556.5 v5.5 M1357.3 556.5 v2.8 M1351.1 556.5 v2.8 M1345.0 556.5 v2.8 M1338.9 556.5 v2.8 M1332.8 556.5 v4.2 M1326.6 556.5 v2.8 M1320.5 556.5 v2.8 M1314.4 556.5 v2.8 M1308.2 556.5 v2.8 M1302.1 556.5 v5.5 M1296.0 556.5 v2.8 M1289.8 556.5 v2.8 M1283.7 556.5 v2.8 M1277.6 556.5 v2.8 M1271.5 556.5 v4.2 M1265.3 556.5 v2.8 M1259.2 556.5 v2.8 M1253.1 556.5 v2.8 M1246.9 556.5 v2.8 M1240.8 556.5 v5.5 M1234.7 556.5 v2.8 M1228.5 556.5 v2.8 M1222.4 556.5 v2.8 M1216.3 556.5 v2.8 M1210.2 556.5 v4.2 M1204.0 556.5 v2.8 M1197.9 556.5 v2.8 M1191.8 556.5 v2.8 M1185.6 556.5 v2.8 M1179.5 556.5 v5.5 M1173.4 556.5 v2.8 M1167.2 556.5 v2.8 M1161.1 556.5 v2.8 M1155.0 556.5 v2.8 M1148.8 556.5 v4.2 M1142.7 556.5 v2.8 M1136.6 556.5 v2.8 M1130.5 556.5 v2.8 M1124.3 556.5 v2.8 M1118.2 556.5 v5.5 M1112.1 556.5 v2.8 M1105.9 556.5 v2.8 M1099.8 556.5 v2.8 M1093.7 556.5 v2.8 M1087.6 556.5 v4.2 M1081.4 556.5 v2.8 M1075.3 556.5 v2.8 M1069.2 556.5 v2.8 M1063.0 556.5 v2.8 M1056.9 556.5 v5.5 M1050.8 556.5 v2.8 M1044.6 556.5 v2.8 M1038.5 556.5 v2.8 M1032.4 556.5 v2.8 M1026.2 556.5 v4.2 M1020.1 556.5 v2.8 M1014.0 556.5 v2.8 M1007.9 556.5 v2.8 M1001.7 556.5 v2.8 M995.6 556.5 v5.5 M989.5 556.5 v2.8 M983.3 556.5 v2.8 M977.2 556.5 v2.8 M971.1 556.5 v2.8 M965.0 556.5 v4.2 M958.8 556.5 v2.8 M952.7 556.5 v2.8 M946.6 556.5 v2.8 M940.4 556.5 v2.8 M934.3 556.5 v5.5 M928.2 556.5 v2.8 M922.0 556.5 v2.8 M915.9 556.5 v2.8 M909.8 556.5 v2.8 M903.7 556.5 v4.2 M897.5 556.5 v2.8 M891.4 556.5 v2.8 M885.3 556.5 v2.8 M879.1 556.5 v2.8 M873.0 556.5 v5.5 M866.9 556.5 v2.8 M860.7 556.5 v2.8 M854.6 556.5 v2.8 M848.5 556.5 v2.8 M842.4 556.5 v4.2 M836.2 556.5 v2.8 M830.1 556.5 v2.8 M824.0 556.5 v2.8 M817.8 556.5 v2.8 M811.7 556.5 v5.5 M805.6 556.5 v2.8 M799.4 556.5 v2.8 M793.3 556.5 v2.8 M787.2 556.5 v2.8 M781.1 556.5 v4.2 M774.9 556.5 v2.8 M768.8 556.5 v2.8 M762.7 556.5 v2.8 M756.5 556.5 v2.8 M750.4 556.5 v5.5 M744.3 556.5 v2.8 M738.1 556.5 v2.8 M732.0 556.5 v2.8 M725.9 556.5 v2.8 M719.8 556.5 v4.2 M713.6 556.5 v2.8 M707.5 556.5 v2.8 M701.4 556.5 v2.8 M695.2 556.5 v2.8 M689.1 556.5 v5.5 M683.0 556.5 v2.8 M676.8 556.5 v2.8 M670.7 556.5 v2.8 M664.6 556.5 v2.8 M658.5 556.5 v4.2 M652.3 556.5 v2.8 M646.2 556.5 v2.8 M640.1 556.5 v2.8 M633.9 556.5 v2.8 M627.8 556.5 v5.5 M621.7 556.5 v2.8 M615.5 556.5 v2.8 M609.4 556.5 v2.8 M603.3 556.5 v2.8 M597.2 556.5 v4.2 M591.0 556.5 v2.8 M584.9 556.5 v2.8 M578.8 556.5 v2.8 M572.6 556.5 v2.8 M566.5 556.5 v5.5 M560.4 556.5 v2.8 M554.2 556.5 v2.8 M548.1 556.5 v2.8 M542.0 556.5 v2.8 M535.9 556.5 v4.2 M529.7 556.5 v2.8 M523.6 556.5 v2.8 M517.5 556.5 v2.8 M511.3 556.5 v2.8 M505.2 556.5 v5.5 M499.1 556.5 v2.8 M492.9 556.5 v2.8 M486.8 556.5 v2.8 M480.7 556.5 v2.8 M474.6 556.5 v4.2 M468.4 556.5 v2.8 M462.3 556.5 v2.8 M456.2 556.5 v2.8 M450.0 556.5 v2.8" stroke="#555" stroke-width="0.9" fill="none"/>
<text x="1731.2" y="572.6" font-size="12" fill="#222" text-anchor="middle">0</text>
<text x="1669.9" y="572.6" font-size="12" fill="#222" text-anchor="middle">0.5</text>
<text x="1608.6" y="572.6" font-size="12" fill="#222" text-anchor="middle">1.0</text>
<text x="1547.3" y="572.6" font-size="12" fill="#222" text-anchor="middle">1.5</text>
<text x="1486.0" y="572.6" font-size="12" fill="#222" text-anchor="middle">2.0</text>
<text x="1424.7" y="572.6" font-size="12" fill="#222" text-anchor="middle">2.5</text>
<text x="1363.4" y="572.6" font-size="12" fill="#222" text-anchor="middle">3.0</text>
<text x="1302.1" y="572.6" font-size="12" fill="#222" text-anchor="middle">3.5</text>
<text x="1240.8" y="572.6" font-size="12" fill="#222" text-anchor="middle">4.0</text>
<text x="1179.5" y="572.6" font-size="12" fill="#222" text-anchor="middle">4.5</text>
<text x="1118.2" y="572.6" font-size="12" fill="#222" text-anchor="middle">5.0</text>
<text x="1056.9" y="572.6" font-size="12" fill="#222" text-anchor="middle">5.5</text>
<text x="995.6" y="572.6" font-size="12" fill="#222" text-anchor="middle">6.0</text>
<text x="934.3" y="572.6" font-size="12" fill="#222" text-anchor="middle">6.5</text>
<text x="873.0" y="572.6" font-size="12" fill="#222" text-anchor="middle">7.0</text>
<text x="811.7" y="572.6" font-size="12" fill="#222" text-anchor="middle">7.5</text>
<text x="750.4" y="572.6" font-size="12" fill="#222" text-anchor="middle">8.0</text>
<text x="689.1" y="572.6" font-size="12" fill="#222" text-anchor="middle">8.5</text>
<text x="1907.5" y="572.6" font-size="12" fill="#222" text-anchor="end">Chemical Shift (ppm)</text>
<path d="M447 708.9 H1867 M447 713.5 H1867 M447 743.5 H1867 M447 747.5 H1867 M447 770 H1867 M447 782.4 H1867 M447 784.9 H1867 M447 791 H1867 M447 803.1 H1867 M447 806.9 H1867 M447 811.9 H1867 M447 885.7 H1867 M447 888.5 H1867 M447 891.2 H1867 M447 893.1 H1867 M447 895 H1867 M447 940 H1867 M447 952.9 H1867" stroke="#cdf6cd" stroke-width="1.1" fill="none"/>
<path d="M967.2 582 V1027 M1026.4 582 V1027 M1053.5 582 V1027 M1114.9 582 V1027 M1205.5 582 V1027 M1226 582 V1027 M1246.7 582 V1027 M1269.4 582 V1027 M1282.8 582 V1027 M1311.7 582 V1027 M1329.8 582 V1027 M1417.3 582 V1027 M1435.3 582 V1027 M1458.5 582 V1027 M1469 582 V1027 M1503.2 582 V1027 M1513.3 582 V1027 M1520.6 582 V1027 M1623.5 582 V1027" stroke="#bdf6bd" stroke-width="1.1" fill="none"/>
<text x="1262" y="851" font-size="30" fill="#e4e4e4" text-anchor="middle">HSQC-DEPT</text>
<text transform="translate(442.4,1037.6) rotate(-90)" font-size="9.1" fill="#2e1e04" stroke="#2e1e04" stroke-width="0.25">Retrorsine_1: HSQC-DEPT</text>
<path d="M658.5 1027 V653.3 H1867.5" fill="none" stroke="#555" stroke-width="1.3"/>
<path d="M1867.5 582 V1027" fill="none" stroke="#555" stroke-width="1.2"/>
<rect x="446.5" y="1026.3" width="1421.5" height="1.3" fill="#a6a6a6"/>
<clipPath id="cpH"><rect x="446" y="582.5" width="1425" height="70"/></clipPath>
<path d="M689.2 645.9 L692.2 645.9 L695.2 645.9 L698.2 645.9 L701.2 645.9 L704.2 645.9 L707.2 645.9 L710.2 645.9 L713.2 645.9 L716.2 645.9 L719.2 645.9 L722.2 645.9 L725.2 645.9 L728.2 645.9 L731.2 645.9 L734.2 645.9 L737.2 645.9 L740.2 645.9 L743.2 645.9 L746.2 645.9 L749.2 645.9 L752.2 645.9 L755.2 645.9 L758.2 645.9 L761.2 645.9 L764.2 645.9 L767.2 645.9 L770.2 645.9 L773.2 645.9 L776.2 645.9 L779.2 645.9 L782.2 645.9 L785.2 645.9 L788.2 645.9 L791.2 645.9 L794.2 645.9 L797.2 645.9 L800.2 645.9 L803.2 645.9 L806.2 645.9 L809.2 645.9 L812.2 645.9 L815.2 645.9 L818.2 645.9 L821.2 645.9 L824.2 645.9 L827.2 645.9 L830.2 645.9 L832.3 645.8 L832.8 645.8 L833.2 645.8 L833.3 645.8 L833.8 645.7 L834.3 645.7 L834.8 645.6 L835.3 645.4 L835.8 645.2 L836.2 644.8 L836.3 644.7 L836.5 644.3 L836.7 643.9 L836.9 643.1 L837.1 642.0 L837.3 640.3 L837.5 637.3 L837.7 632.1 L837.9 623.3 L838.1 611.0 L838.3 603.9 L838.5 611.0 L838.7 623.3 L838.9 632.1 L839.1 637.3 L839.2 639.0 L839.3 640.3 L839.5 642.0 L839.7 643.1 L839.9 643.9 L840.1 644.3 L840.3 644.7 L840.5 644.9 L840.7 645.1 L840.9 645.2 L841.4 645.5 L841.9 645.6 L842.2 645.7 L842.4 645.7 L842.9 645.7 L843.4 645.8 L843.9 645.8 L845.2 645.8 L848.2 645.9 L851.2 645.9 L854.2 645.9 L857.2 645.9 L860.2 645.9 L863.2 645.9 L866.2 645.9 L869.2 645.9 L872.2 645.9 L875.2 645.9 L878.2 645.9 L881.2 645.9 L884.2 645.9 L887.2 645.9 L890.2 645.9 L893.2 645.9 L896.2 645.9 L899.2 645.9 L902.2 645.9 L905.2 645.9 L908.2 645.9 L911.2 645.9 L914.2 645.9 L917.2 645.9 L920.2 645.9 L921.5 645.9 L922.0 645.9 L922.5 645.9 L923.0 645.9 L923.2 645.9 L923.5 645.9 L924.0 645.9 L924.5 645.9 L925.0 645.9 L925.5 645.9 L925.7 645.9 L925.9 645.9 L926.1 645.9 L926.2 645.9 L926.3 645.9 L926.5 645.9 L926.7 645.8 L926.9 645.8 L927.1 645.8 L927.3 645.7 L927.5 645.6 L927.7 645.7 L927.9 645.8 L928.1 645.8 L928.3 645.8 L928.5 645.9 L928.7 645.9 L928.9 645.9 L929.1 645.9 L929.2 645.9 L929.3 645.9 L929.5 645.9 L929.7 645.9 L929.9 645.9 L930.1 645.9 L930.6 645.9 L931.1 645.9 L931.6 645.9 L932.1 645.9 L932.2 645.9 L932.6 645.9 L933.1 645.9 L935.2 645.9 L938.2 645.9 L939.0 645.9 L939.5 645.9 L940.0 645.9 L940.5 645.9 L941.0 645.9 L941.2 645.9 L941.5 645.9 L942.0 645.9 L942.5 645.9 L943.0 645.9 L943.2 645.9 L943.4 645.9 L943.6 645.9 L943.8 645.9 L944.0 645.9 L944.2 645.8 L944.4 645.8 L944.6 645.8 L944.8 645.7 L945.0 645.6 L945.2 645.7 L945.4 645.8 L945.6 645.8 L945.8 645.8 L946.0 645.9 L946.2 645.9 L946.4 645.9 L946.6 645.9 L946.8 645.9 L947.0 645.9 L947.2 645.9 L947.4 645.9 L947.6 645.9 L948.1 645.9 L948.6 645.9 L949.1 645.9 L949.6 645.9 L950.1 645.9 L950.2 645.9 L950.6 645.9 L953.2 645.9 L956.2 645.9 L959.2 645.9 L960.0 645.8 L960.5 645.8 L961.0 645.8 L961.5 645.8 L962.0 645.8 L962.2 645.8 L962.5 645.7 L963.0 645.7 L963.5 645.6 L964.0 645.5 L964.5 645.4 L965.0 645.1 L965.2 644.9 L965.5 644.6 L965.7 644.2 L965.9 643.7 L966.1 643.1 L966.3 642.1 L966.5 640.7 L966.7 638.8 L966.9 635.9 L967.1 632.4 L967.3 629.0 L967.5 627.4 L967.7 629.0 L967.9 632.4 L968.1 635.9 L968.2 637.5 L968.3 638.8 L968.5 640.7 L968.7 642.1 L968.9 643.1 L969.1 643.7 L969.3 644.2 L969.5 644.6 L969.7 644.8 L969.9 645.0 L970.1 645.2 L970.6 645.4 L971.1 645.6 L971.2 645.6 L971.6 645.6 L972.1 645.7 L972.6 645.8 L973.1 645.8 L973.6 645.8 L974.1 645.8 L974.2 645.8 L974.6 645.8 L977.2 645.9 L980.2 645.9 L983.2 645.9 L986.2 645.9 L989.2 645.9 L992.2 645.9 L995.2 645.9 L998.2 645.9 L1001.2 645.9 L1004.2 645.9 L1007.2 645.9 L1010.2 645.9 L1013.2 645.9 L1016.2 645.9 L1018.7 645.9 L1019.2 645.9 L1019.7 645.9 L1020.2 645.9 L1020.7 645.8 L1020.9 645.8 L1021.2 645.8 L1021.4 645.8 L1021.7 645.8 L1021.9 645.8 L1022.0 645.8 L1022.2 645.8 L1022.4 645.8 L1022.5 645.7 L1022.7 645.7 L1022.9 645.7 L1023.0 645.7 L1023.1 645.6 L1023.3 645.6 L1023.4 645.5 L1023.5 645.5 L1023.7 645.3 L1023.9 645.1 L1024.0 644.9 L1024.1 644.7 L1024.3 644.0 L1024.4 643.4 L1024.5 642.8 L1024.7 642.1 L1024.9 642.6 L1025.0 643.1 L1025.1 643.6 L1025.2 643.9 L1025.3 644.1 L1025.4 644.2 L1025.5 644.2 L1025.7 643.9 L1025.9 643.4 L1026.0 643.0 L1026.1 642.5 L1026.2 641.8 L1026.3 640.9 L1026.4 639.8 L1026.5 638.6 L1026.6 637.2 L1026.7 635.8 L1026.8 634.7 L1026.9 634.3 L1027.0 634.5 L1027.1 635.3 L1027.2 636.4 L1027.3 637.4 L1027.4 638.2 L1027.5 638.7 L1027.6 638.9 L1027.7 638.7 L1027.8 638.3 L1027.9 638.0 L1028.0 638.1 L1028.1 638.6 L1028.2 639.5 L1028.3 640.5 L1028.4 641.4 L1028.5 642.2 L1028.6 642.7 L1028.7 643.1 L1028.8 643.3 L1028.9 643.3 L1029.0 643.1 L1029.1 642.9 L1029.2 642.5 L1029.3 642.1 L1029.4 642.1 L1029.5 642.3 L1029.6 642.8 L1029.8 643.9 L1030.0 644.7 L1030.2 645.1 L1030.3 645.2 L1030.4 645.3 L1030.5 645.4 L1030.6 645.5 L1030.8 645.6 L1031.0 645.6 L1031.1 645.6 L1031.2 645.7 L1031.4 645.7 L1031.5 645.7 L1031.6 645.7 L1031.8 645.8 L1032.0 645.8 L1032.1 645.8 L1032.5 645.8 L1032.6 645.8 L1033.0 645.8 L1033.1 645.8 L1033.5 645.8 L1033.6 645.8 L1034.0 645.8 L1034.2 645.9 L1034.5 645.9 L1035.0 645.9 L1037.2 645.9 L1040.2 645.9 L1043.2 645.9 L1046.2 645.8 L1046.6 645.8 L1047.1 645.8 L1047.6 645.8 L1048.1 645.8 L1048.6 645.7 L1049.1 645.7 L1049.2 645.7 L1049.3 645.7 L1049.6 645.6 L1049.8 645.6 L1050.1 645.5 L1050.3 645.4 L1050.6 645.2 L1050.8 645.0 L1051.0 644.7 L1051.2 644.3 L1051.3 644.1 L1051.4 643.7 L1051.6 642.8 L1051.8 641.2 L1052.0 638.5 L1052.2 633.8 L1052.3 630.6 L1052.4 627.3 L1052.6 623.5 L1052.8 627.2 L1053.0 633.5 L1053.2 638.1 L1053.3 639.6 L1053.4 640.6 L1053.5 641.4 L1053.6 642.0 L1053.7 642.4 L1053.8 642.6 L1053.9 642.7 L1054.0 642.7 L1054.1 642.6 L1054.2 642.3 L1054.3 641.9 L1054.4 641.3 L1054.5 640.5 L1054.6 639.4 L1054.7 637.8 L1054.8 635.8 L1054.9 633.1 L1055.0 630.0 L1055.1 626.6 L1055.2 623.8 L1055.3 622.8 L1055.5 626.7 L1055.6 630.1 L1055.7 633.4 L1055.9 638.2 L1056.1 641.1 L1056.2 642.0 L1056.3 642.7 L1056.5 643.7 L1056.6 644.0 L1056.7 644.3 L1056.9 644.7 L1057.1 645.0 L1057.2 645.1 L1057.3 645.2 L1057.5 645.3 L1057.6 645.4 L1057.7 645.4 L1057.9 645.5 L1058.1 645.5 L1058.2 645.6 L1058.3 645.6 L1058.4 645.6 L1058.5 645.6 L1058.6 645.6 L1058.7 645.7 L1058.9 645.7 L1059.1 645.7 L1059.3 645.7 L1059.4 645.7 L1059.5 645.7 L1059.6 645.7 L1059.7 645.7 L1059.8 645.6 L1059.9 645.6 L1060.0 645.5 L1060.1 645.5 L1060.2 645.5 L1060.3 645.6 L1060.4 645.6 L1060.5 645.7 L1060.6 645.7 L1060.7 645.7 L1060.8 645.7 L1060.9 645.7 L1061.0 645.7 L1061.1 645.7 L1061.2 645.7 L1061.3 645.7 L1061.4 645.6 L1061.5 645.6 L1061.6 645.6 L1061.7 645.6 L1061.8 645.6 L1061.9 645.7 L1062.0 645.7 L1062.1 645.8 L1062.2 645.8 L1062.3 645.8 L1062.4 645.8 L1062.5 645.8 L1062.6 645.8 L1062.7 645.8 L1062.8 645.8 L1063.0 645.9 L1063.2 645.9 L1063.4 645.9 L1063.6 645.9 L1063.7 645.9 L1063.8 645.9 L1064.0 645.9 L1064.2 645.9 L1064.7 645.9 L1065.2 645.9 L1065.7 645.9 L1066.2 645.9 L1066.7 645.9 L1067.2 645.9 L1070.2 645.9 L1073.2 645.9 L1076.2 645.9 L1079.2 645.9 L1082.2 645.9 L1084.0 645.9 L1084.5 645.9 L1085.0 645.9 L1085.2 645.9 L1085.5 645.9 L1086.0 645.9 L1086.5 645.9 L1087.0 645.9 L1087.5 645.9 L1088.0 645.9 L1088.2 645.9 L1088.4 645.9 L1088.6 645.9 L1088.8 645.9 L1089.0 645.9 L1089.2 645.8 L1089.4 645.8 L1089.6 645.8 L1089.8 645.7 L1090.0 645.7 L1090.2 645.7 L1090.4 645.8 L1090.6 645.8 L1090.8 645.8 L1091.0 645.9 L1091.2 645.9 L1091.4 645.9 L1091.6 645.9 L1091.8 645.9 L1092.0 645.9 L1092.2 645.9 L1092.4 645.9 L1092.6 645.9 L1093.1 645.9 L1093.6 645.9 L1094.1 645.9 L1094.2 645.9 L1094.6 645.9 L1095.1 645.9 L1095.6 645.9 L1097.2 645.9 L1100.2 645.9 L1103.2 645.9 L1105.6 645.8 L1106.1 645.8 L1106.2 645.8 L1106.6 645.8 L1107.1 645.8 L1107.6 645.8 L1108.1 645.8 L1108.6 645.8 L1109.1 645.7 L1109.2 645.7 L1109.6 645.7 L1110.1 645.6 L1110.6 645.5 L1111.1 645.4 L1111.6 645.1 L1112.1 644.7 L1112.2 644.6 L1112.6 644.0 L1112.8 643.6 L1113.0 643.0 L1113.2 642.2 L1113.4 641.1 L1113.6 639.6 L1113.8 637.6 L1114.0 635.0 L1114.2 632.1 L1114.4 629.7 L1114.6 628.7 L1114.8 629.7 L1115.0 632.1 L1115.2 635.0 L1115.4 637.6 L1115.6 639.6 L1115.8 641.1 L1116.0 642.2 L1116.2 643.0 L1116.4 643.6 L1116.6 644.0 L1116.8 644.4 L1117.0 644.6 L1117.2 644.8 L1117.7 645.2 L1118.2 645.4 L1118.7 645.5 L1119.2 645.6 L1119.7 645.7 L1120.2 645.7 L1120.7 645.8 L1121.2 645.8 L1121.7 645.8 L1122.2 645.8 L1122.7 645.8 L1123.2 645.8 L1124.2 645.9 L1127.2 645.9 L1130.2 645.9 L1133.2 645.9 L1136.2 645.9 L1139.2 645.9 L1140.0 645.9 L1140.5 645.9 L1141.0 645.9 L1141.5 645.9 L1142.0 645.9 L1142.2 645.9 L1142.5 645.9 L1143.0 645.9 L1143.5 645.9 L1144.0 645.9 L1144.2 645.9 L1144.4 645.9 L1144.6 645.9 L1144.8 645.9 L1145.0 645.9 L1145.2 645.8 L1145.4 645.8 L1145.6 645.7 L1145.8 645.6 L1146.0 645.6 L1146.2 645.6 L1146.4 645.7 L1146.6 645.8 L1146.8 645.8 L1147.0 645.9 L1147.2 645.9 L1147.4 645.9 L1147.6 645.9 L1147.8 645.9 L1148.0 645.9 L1148.2 645.9 L1148.4 645.9 L1148.6 645.9 L1149.1 645.9 L1149.6 645.9 L1150.1 645.9 L1150.6 645.9 L1151.1 645.9 L1151.2 645.9 L1151.6 645.9 L1154.2 645.9 L1157.2 645.9 L1160.2 645.9 L1163.2 645.9 L1166.2 645.9 L1169.2 645.9 L1172.2 645.9 L1175.2 645.9 L1178.2 645.9 L1181.2 645.9 L1184.2 645.9 L1187.2 645.9 L1190.2 645.9 L1190.5 645.9 L1191.0 645.9 L1191.5 645.9 L1192.0 645.9 L1192.5 645.9 L1193.0 645.9 L1193.2 645.9 L1193.5 645.8 L1194.0 645.8 L1194.5 645.8 L1195.0 645.8 L1195.5 645.8 L1196.0 645.8 L1196.2 645.8 L1196.5 645.8 L1197.0 645.8 L1197.5 645.8 L1198.0 645.7 L1198.5 645.7 L1199.0 645.7 L1199.2 645.7 L1199.5 645.6 L1200.0 645.6 L1200.5 645.5 L1201.0 645.4 L1201.5 645.2 L1202.0 645.0 L1202.2 644.9 L1202.5 644.6 L1203.0 644.1 L1203.5 643.3 L1203.7 642.8 L1203.9 642.3 L1204.1 641.6 L1204.3 640.9 L1204.5 640.0 L1204.7 639.1 L1204.9 638.1 L1205.1 637.3 L1205.2 637.0 L1205.3 636.8 L1205.5 636.6 L1205.7 636.8 L1205.9 637.3 L1206.1 638.1 L1206.3 639.1 L1206.5 640.0 L1206.7 640.9 L1206.9 641.6 L1207.1 642.3 L1207.3 642.8 L1207.5 643.3 L1207.7 643.7 L1207.9 644.0 L1208.1 644.2 L1208.2 644.4 L1208.6 644.7 L1209.1 645.0 L1209.6 645.2 L1210.1 645.4 L1210.6 645.5 L1211.1 645.6 L1211.2 645.6 L1211.6 645.6 L1212.1 645.7 L1212.6 645.7 L1213.1 645.7 L1213.6 645.8 L1214.1 645.8 L1214.2 645.8 L1214.6 645.8 L1215.1 645.8 L1215.6 645.8 L1216.1 645.8 L1216.6 645.8 L1217.1 645.8 L1217.2 645.8 L1217.6 645.8 L1218.1 645.8 L1218.4 645.8 L1218.6 645.8 L1218.9 645.8 L1219.1 645.8 L1219.4 645.8 L1219.6 645.8 L1219.9 645.8 L1220.1 645.8 L1220.2 645.8 L1220.4 645.8 L1220.9 645.7 L1221.3 645.7 L1221.4 645.7 L1221.8 645.6 L1221.9 645.6 L1222.3 645.5 L1222.4 645.4 L1222.6 645.3 L1222.8 645.2 L1223.0 644.9 L1223.2 644.5 L1223.3 644.3 L1223.4 644.0 L1223.6 643.0 L1223.8 641.2 L1224.0 638.3 L1224.2 634.3 L1224.3 632.6 L1224.4 631.9 L1224.6 634.2 L1224.8 638.2 L1225.0 641.1 L1225.2 642.7 L1225.3 643.2 L1225.4 643.6 L1225.5 643.9 L1225.6 644.0 L1225.7 644.2 L1225.8 644.2 L1225.9 644.2 L1226.0 644.2 L1226.1 644.1 L1226.2 643.9 L1226.3 643.6 L1226.4 643.3 L1226.5 642.8 L1226.6 642.1 L1226.7 641.2 L1226.8 640.0 L1226.9 638.4 L1227.0 636.5 L1227.1 634.5 L1227.3 632.3 L1227.5 634.6 L1227.7 638.5 L1227.9 641.4 L1228.0 642.3 L1228.1 643.0 L1228.3 644.0 L1228.5 644.6 L1228.7 644.9 L1228.9 645.2 L1229.0 645.3 L1229.1 645.3 L1229.2 645.4 L1229.3 645.5 L1229.5 645.5 L1229.7 645.6 L1229.9 645.6 L1230.0 645.7 L1230.4 645.7 L1230.9 645.8 L1231.4 645.8 L1231.9 645.8 L1232.2 645.8 L1232.4 645.8 L1232.9 645.8 L1235.2 645.9 L1238.2 645.9 L1238.4 645.9 L1238.9 645.9 L1239.4 645.9 L1239.9 645.8 L1240.4 645.8 L1240.9 645.8 L1241.2 645.8 L1241.4 645.8 L1241.6 645.8 L1241.9 645.7 L1242.1 645.7 L1242.4 645.6 L1242.6 645.5 L1242.8 645.4 L1243.0 645.3 L1243.1 645.2 L1243.2 645.1 L1243.4 644.7 L1243.6 644.1 L1243.8 643.1 L1244.0 641.3 L1244.1 640.1 L1244.2 638.8 L1244.4 637.4 L1244.6 638.8 L1244.8 641.2 L1245.0 643.0 L1245.1 643.6 L1245.2 644.0 L1245.4 644.6 L1245.6 644.9 L1245.8 645.0 L1246.0 645.0 L1246.2 645.0 L1246.4 644.8 L1246.6 644.5 L1246.8 643.8 L1247.0 642.7 L1247.2 640.8 L1247.4 638.1 L1247.5 637.0 L1247.6 636.6 L1247.8 638.1 L1248.0 640.8 L1248.2 642.8 L1248.4 643.9 L1248.5 644.3 L1248.6 644.6 L1248.8 645.0 L1249.0 645.2 L1249.2 645.4 L1249.4 645.5 L1249.5 645.6 L1249.6 645.6 L1249.8 645.7 L1250.0 645.7 L1250.2 645.7 L1250.7 645.8 L1251.2 645.8 L1251.7 645.8 L1252.2 645.8 L1252.7 645.9 L1253.2 645.9 L1256.2 645.9 L1259.2 645.9 L1262.2 645.8 L1262.7 645.8 L1263.2 645.8 L1263.7 645.8 L1264.2 645.7 L1264.7 645.7 L1265.2 645.6 L1265.3 645.5 L1265.7 645.4 L1265.8 645.4 L1266.2 645.1 L1266.3 645.0 L1266.4 644.9 L1266.6 644.6 L1266.8 644.2 L1267.0 643.6 L1267.2 642.6 L1267.3 641.9 L1267.4 641.0 L1267.6 638.1 L1267.8 633.2 L1268.0 626.4 L1268.2 622.5 L1268.3 623.6 L1268.4 626.3 L1268.6 633.0 L1268.8 637.8 L1269.0 640.5 L1269.2 642.0 L1269.3 642.4 L1269.4 642.7 L1269.5 642.9 L1269.6 643.0 L1269.7 643.0 L1269.8 643.0 L1269.9 642.8 L1270.0 642.6 L1270.1 642.2 L1270.2 641.7 L1270.3 641.0 L1270.4 640.1 L1270.5 638.9 L1270.6 637.2 L1270.7 635.0 L1270.8 632.1 L1270.9 628.4 L1271.0 623.9 L1271.1 619.1 L1271.2 615.3 L1271.3 613.8 L1271.5 619.2 L1271.7 628.5 L1271.8 632.3 L1271.9 635.3 L1272.0 637.5 L1272.1 639.2 L1272.3 641.5 L1272.5 642.8 L1272.7 643.7 L1272.8 644.0 L1272.9 644.2 L1273.0 644.4 L1273.1 644.6 L1273.3 644.9 L1273.5 645.1 L1273.7 645.2 L1273.8 645.3 L1273.9 645.3 L1274.0 645.4 L1274.2 645.4 L1274.4 645.5 L1274.5 645.5 L1274.9 645.6 L1275.0 645.6 L1275.4 645.6 L1275.5 645.7 L1275.9 645.7 L1276.0 645.7 L1276.3 645.7 L1276.4 645.7 L1276.5 645.7 L1276.8 645.7 L1276.9 645.7 L1277.0 645.7 L1277.2 645.7 L1277.3 645.7 L1277.5 645.7 L1277.8 645.7 L1278.0 645.7 L1278.3 645.7 L1278.5 645.6 L1278.7 645.6 L1278.8 645.6 L1279.0 645.6 L1279.2 645.5 L1279.3 645.5 L1279.5 645.4 L1279.7 645.4 L1279.8 645.3 L1280.0 645.2 L1280.2 645.1 L1280.3 645.0 L1280.5 644.8 L1280.7 644.4 L1280.9 644.0 L1281.0 643.6 L1281.1 643.2 L1281.2 642.7 L1281.3 642.1 L1281.5 640.1 L1281.7 636.7 L1281.9 631.0 L1282.0 627.1 L1282.1 623.0 L1282.2 619.6 L1282.3 618.3 L1282.5 622.8 L1282.7 630.6 L1282.9 636.2 L1283.0 638.0 L1283.1 639.3 L1283.2 640.3 L1283.3 640.9 L1283.5 641.5 L1283.7 641.4 L1283.9 640.4 L1284.0 639.5 L1284.1 638.2 L1284.3 634.1 L1284.5 628.3 L1284.7 625.0 L1284.9 628.5 L1285.0 631.6 L1285.1 634.5 L1285.3 638.9 L1285.4 640.3 L1285.5 641.4 L1285.7 642.9 L1285.9 643.8 L1286.0 644.1 L1286.1 644.4 L1286.2 644.6 L1286.3 644.7 L1286.4 644.9 L1286.5 645.0 L1286.7 645.2 L1286.9 645.3 L1287.0 645.3 L1287.1 645.4 L1287.3 645.5 L1287.4 645.5 L1287.5 645.5 L1287.8 645.6 L1287.9 645.6 L1288.0 645.6 L1288.3 645.7 L1288.5 645.7 L1288.8 645.7 L1289.0 645.7 L1289.2 645.7 L1289.3 645.7 L1289.5 645.7 L1289.8 645.8 L1290.0 645.8 L1290.3 645.8 L1290.5 645.8 L1291.0 645.8 L1291.5 645.8 L1292.0 645.8 L1292.2 645.8 L1292.5 645.8 L1293.0 645.8 L1293.5 645.8 L1294.0 645.8 L1294.5 645.7 L1295.0 645.7 L1295.2 645.7 L1295.5 645.7 L1296.0 645.7 L1296.5 645.6 L1297.0 645.6 L1297.5 645.5 L1298.0 645.4 L1298.2 645.4 L1298.4 645.3 L1298.5 645.3 L1298.6 645.3 L1298.8 645.3 L1299.0 645.2 L1299.2 645.2 L1299.4 645.2 L1299.5 645.1 L1299.6 645.1 L1299.8 645.1 L1300.0 645.1 L1300.2 645.1 L1300.4 645.1 L1300.5 645.1 L1300.6 645.1 L1300.8 645.1 L1301.0 645.1 L1301.2 645.2 L1301.4 645.2 L1301.5 645.2 L1301.6 645.2 L1301.8 645.2 L1302.0 645.2 L1302.2 645.2 L1302.4 645.2 L1302.5 645.2 L1302.6 645.2 L1303.0 645.2 L1303.1 645.2 L1303.5 645.2 L1303.6 645.2 L1304.0 645.1 L1304.1 645.1 L1304.2 645.1 L1304.4 645.1 L1304.6 645.1 L1304.8 645.0 L1305.0 645.0 L1305.1 645.0 L1305.2 645.0 L1305.4 644.9 L1305.5 644.9 L1305.6 644.9 L1305.8 644.9 L1306.0 644.9 L1306.1 644.9 L1306.2 644.9 L1306.4 644.9 L1306.5 644.9 L1306.6 645.0 L1306.8 645.0 L1307.0 645.0 L1307.1 645.0 L1307.2 645.1 L1307.4 645.1 L1307.5 645.1 L1307.6 645.1 L1307.7 645.1 L1307.8 645.2 L1308.0 645.2 L1308.1 645.2 L1308.2 645.2 L1308.4 645.2 L1308.5 645.3 L1308.6 645.3 L1308.7 645.3 L1308.8 645.3 L1309.0 645.3 L1309.1 645.3 L1309.2 645.3 L1309.3 645.3 L1309.5 645.2 L1309.6 645.2 L1309.7 645.1 L1309.8 645.1 L1309.9 645.1 L1310.1 644.9 L1310.2 644.8 L1310.3 644.7 L1310.5 644.3 L1310.6 644.0 L1310.7 643.7 L1310.8 643.3 L1310.9 642.8 L1311.1 641.3 L1311.2 640.5 L1311.3 639.7 L1311.4 639.1 L1311.5 638.8 L1311.6 639.0 L1311.7 639.6 L1311.8 640.3 L1311.9 641.0 L1312.0 641.7 L1312.1 642.2 L1312.2 642.6 L1312.3 642.9 L1312.4 643.0 L1312.5 643.0 L1312.6 642.8 L1312.7 642.6 L1312.8 642.2 L1312.9 641.8 L1313.0 641.4 L1313.1 641.0 L1313.2 640.9 L1313.3 641.0 L1313.4 641.4 L1313.5 641.8 L1313.6 642.2 L1313.7 642.6 L1313.8 642.8 L1313.9 642.9 L1314.0 642.9 L1314.1 642.7 L1314.2 642.4 L1314.4 641.5 L1314.6 640.2 L1314.8 639.6 L1315.0 640.4 L1315.1 641.1 L1315.2 641.9 L1315.4 643.2 L1315.6 644.0 L1315.8 644.6 L1316.0 644.9 L1316.1 645.1 L1316.2 645.2 L1316.3 645.3 L1316.4 645.3 L1316.6 645.4 L1316.8 645.5 L1317.0 645.6 L1317.1 645.6 L1317.2 645.6 L1317.3 645.6 L1317.4 645.7 L1317.6 645.7 L1317.8 645.7 L1317.9 645.7 L1318.1 645.7 L1318.3 645.8 L1318.4 645.8 L1318.6 645.8 L1318.8 645.8 L1318.9 645.8 L1319.1 645.8 L1319.2 645.8 L1319.4 645.8 L1319.6 645.8 L1319.9 645.8 L1320.1 645.8 L1320.4 645.8 L1320.6 645.8 L1321.1 645.8 L1321.6 645.8 L1321.7 645.8 L1322.1 645.8 L1322.2 645.8 L1322.6 645.8 L1322.7 645.8 L1323.1 645.8 L1323.2 645.8 L1323.6 645.8 L1323.7 645.8 L1324.1 645.8 L1324.2 645.8 L1324.6 645.7 L1324.7 645.7 L1325.1 645.7 L1325.2 645.7 L1325.5 645.6 L1325.6 645.6 L1325.7 645.5 L1325.9 645.5 L1326.0 645.4 L1326.1 645.4 L1326.2 645.3 L1326.3 645.2 L1326.5 645.0 L1326.6 644.8 L1326.7 644.6 L1326.9 644.0 L1327.0 643.5 L1327.1 642.9 L1327.2 642.1 L1327.3 641.1 L1327.5 638.5 L1327.6 637.5 L1327.7 637.0 L1327.9 638.3 L1328.0 639.5 L1328.1 640.6 L1328.2 641.5 L1328.3 642.2 L1328.5 642.8 L1328.6 642.9 L1328.7 642.8 L1328.9 642.2 L1329.0 641.6 L1329.1 640.7 L1329.3 638.0 L1329.5 634.1 L1329.6 632.5 L1329.7 631.8 L1329.9 634.0 L1330.1 637.9 L1330.3 640.5 L1330.5 641.8 L1330.6 642.1 L1330.7 642.2 L1330.8 642.1 L1330.9 641.7 L1331.1 640.2 L1331.2 639.1 L1331.3 637.9 L1331.5 636.6 L1331.6 637.0 L1331.7 638.2 L1331.8 639.5 L1331.9 640.8 L1332.1 642.7 L1332.3 643.9 L1332.5 644.5 L1332.6 644.7 L1332.7 644.9 L1332.8 645.1 L1332.9 645.2 L1333.1 645.3 L1333.3 645.5 L1333.5 645.5 L1333.6 645.6 L1333.7 645.6 L1333.8 645.6 L1333.9 645.6 L1334.1 645.7 L1334.2 645.7 L1334.3 645.7 L1334.6 645.7 L1334.8 645.8 L1335.1 645.8 L1335.3 645.8 L1335.6 645.8 L1336.1 645.8 L1336.6 645.8 L1337.1 645.9 L1337.2 645.9 L1340.2 645.9 L1343.2 645.9 L1346.2 645.9 L1349.2 645.9 L1352.2 645.9 L1355.2 645.9 L1358.2 645.9 L1361.2 645.9 L1364.2 645.9 L1367.2 645.9 L1370.2 645.9 L1373.2 645.9 L1376.2 645.9 L1379.2 645.9 L1382.2 645.9 L1385.2 645.9 L1388.2 645.9 L1391.2 645.9 L1394.2 645.9 L1397.2 645.9 L1400.2 645.9 L1403.2 645.9 L1406.2 645.9 L1409.2 645.9 L1409.6 645.9 L1410.1 645.9 L1410.6 645.9 L1410.8 645.9 L1411.1 645.8 L1411.3 645.8 L1411.6 645.8 L1411.8 645.8 L1411.9 645.8 L1412.1 645.8 L1412.2 645.8 L1412.3 645.8 L1412.4 645.8 L1412.6 645.8 L1412.8 645.8 L1412.9 645.8 L1413.1 645.7 L1413.3 645.7 L1413.4 645.7 L1413.6 645.7 L1413.8 645.6 L1413.9 645.6 L1414.0 645.5 L1414.1 645.5 L1414.2 645.4 L1414.3 645.3 L1414.4 645.3 L1414.6 645.0 L1414.8 644.6 L1414.9 644.3 L1415.0 643.9 L1415.1 643.4 L1415.2 642.8 L1415.4 641.2 L1415.6 640.2 L1415.8 640.8 L1415.9 641.3 L1416.0 641.8 L1416.1 642.1 L1416.2 642.2 L1416.3 642.0 L1416.4 641.6 L1416.5 641.0 L1416.6 640.3 L1416.7 639.7 L1416.8 639.4 L1416.9 639.6 L1417.0 640.1 L1417.1 640.6 L1417.2 641.1 L1417.3 641.3 L1417.4 641.2 L1417.5 640.8 L1417.6 640.2 L1417.7 639.5 L1417.8 638.9 L1417.9 638.6 L1418.0 638.9 L1418.1 639.6 L1418.2 640.3 L1418.3 641.0 L1418.4 641.4 L1418.5 641.6 L1418.6 641.5 L1418.7 641.1 L1418.8 640.5 L1418.9 639.8 L1419.0 639.2 L1419.1 639.0 L1419.2 639.3 L1419.3 640.1 L1419.4 640.9 L1419.5 641.7 L1419.6 642.3 L1419.7 642.7 L1419.8 642.9 L1419.9 642.9 L1420.0 642.8 L1420.1 642.5 L1420.2 641.9 L1420.3 641.2 L1420.4 640.4 L1420.5 639.8 L1420.6 639.6 L1420.7 639.9 L1420.8 640.7 L1420.9 641.6 L1421.0 642.5 L1421.1 643.2 L1421.2 643.7 L1421.3 644.2 L1421.4 644.5 L1421.5 644.8 L1421.6 644.9 L1421.7 645.1 L1421.8 645.2 L1421.9 645.3 L1422.0 645.4 L1422.2 645.5 L1422.4 645.6 L1422.5 645.6 L1422.6 645.6 L1422.7 645.7 L1422.8 645.7 L1423.0 645.7 L1423.2 645.7 L1423.5 645.8 L1423.7 645.8 L1424.2 645.8 L1424.7 645.8 L1425.2 645.8 L1425.7 645.8 L1426.2 645.8 L1427.2 645.8 L1427.4 645.8 L1427.9 645.8 L1428.4 645.8 L1428.7 645.8 L1428.9 645.8 L1429.2 645.8 L1429.4 645.8 L1429.7 645.8 L1429.9 645.8 L1430.2 645.8 L1430.4 645.8 L1430.5 645.7 L1430.7 645.7 L1430.9 645.7 L1431.0 645.7 L1431.2 645.6 L1431.4 645.6 L1431.5 645.6 L1431.6 645.5 L1431.7 645.5 L1431.8 645.4 L1432.0 645.3 L1432.2 645.1 L1432.3 644.9 L1432.4 644.7 L1432.5 644.5 L1432.6 644.2 L1432.7 643.8 L1432.8 643.2 L1432.9 642.5 L1433.0 641.6 L1433.1 640.6 L1433.2 639.4 L1433.3 638.5 L1433.4 638.1 L1433.5 638.3 L1433.6 639.1 L1433.7 640.0 L1433.8 640.8 L1433.9 641.4 L1434.0 641.7 L1434.1 641.8 L1434.2 641.5 L1434.3 641.1 L1434.4 640.4 L1434.5 639.6 L1434.6 638.9 L1434.7 638.6 L1434.8 639.0 L1434.9 639.8 L1435.0 640.7 L1435.1 641.5 L1435.2 642.2 L1435.3 642.7 L1435.4 643.0 L1435.5 643.2 L1435.6 643.2 L1435.7 643.0 L1435.8 642.7 L1435.9 642.2 L1436.0 641.5 L1436.1 640.6 L1436.2 639.4 L1436.3 638.2 L1436.4 637.2 L1436.5 636.7 L1436.6 637.1 L1436.7 638.0 L1436.8 639.1 L1436.9 640.1 L1437.0 640.8 L1437.1 641.3 L1437.2 641.4 L1437.3 641.2 L1437.4 640.8 L1437.5 640.1 L1437.6 639.3 L1437.7 638.6 L1437.8 638.5 L1437.9 638.9 L1438.0 639.8 L1438.1 640.8 L1438.2 641.9 L1438.3 642.7 L1438.4 643.4 L1438.5 643.9 L1438.6 644.3 L1438.7 644.5 L1438.8 644.8 L1438.9 645.0 L1439.0 645.1 L1439.1 645.2 L1439.2 645.3 L1439.3 645.4 L1439.4 645.4 L1439.6 645.5 L1439.8 645.6 L1440.0 645.6 L1440.1 645.7 L1440.2 645.7 L1440.3 645.7 L1440.4 645.7 L1440.6 645.7 L1440.9 645.8 L1441.1 645.8 L1441.4 645.8 L1441.6 645.8 L1441.9 645.8 L1442.1 645.8 L1442.2 645.8 L1442.4 645.8 L1442.9 645.8 L1443.4 645.9 L1445.2 645.9 L1448.2 645.9 L1450.5 645.9 L1451.0 645.9 L1451.2 645.9 L1451.5 645.9 L1452.0 645.8 L1452.5 645.8 L1453.0 645.8 L1453.4 645.8 L1453.5 645.8 L1453.9 645.7 L1454.0 645.7 L1454.2 645.7 L1454.4 645.6 L1454.5 645.6 L1454.7 645.5 L1454.9 645.4 L1455.1 645.3 L1455.3 645.0 L1455.4 644.9 L1455.5 644.7 L1455.7 644.1 L1455.9 643.0 L1456.1 641.1 L1456.3 638.6 L1456.4 637.5 L1456.5 637.1 L1456.7 638.6 L1456.9 641.1 L1457.1 642.9 L1457.2 643.4 L1457.3 643.9 L1457.4 644.2 L1457.5 644.4 L1457.6 644.6 L1457.7 644.7 L1457.8 644.8 L1457.9 644.8 L1458.0 644.8 L1458.1 644.7 L1458.2 644.7 L1458.3 644.5 L1458.4 644.4 L1458.5 644.1 L1458.6 643.7 L1458.7 643.3 L1458.8 642.6 L1458.9 641.8 L1459.0 640.7 L1459.1 639.4 L1459.2 638.0 L1459.3 636.9 L1459.4 636.5 L1459.6 638.0 L1459.8 640.8 L1460.0 642.7 L1460.1 643.4 L1460.2 643.9 L1460.3 644.3 L1460.4 644.6 L1460.5 644.8 L1460.6 645.0 L1460.8 645.2 L1461.0 645.4 L1461.1 645.4 L1461.2 645.5 L1461.3 645.5 L1461.4 645.5 L1461.5 645.6 L1461.6 645.6 L1461.8 645.6 L1462.0 645.6 L1462.1 645.6 L1462.2 645.6 L1462.4 645.6 L1462.5 645.6 L1462.6 645.6 L1462.8 645.5 L1463.0 645.4 L1463.2 645.2 L1463.3 645.1 L1463.4 644.9 L1463.5 644.7 L1463.6 644.4 L1463.8 644.2 L1464.0 644.4 L1464.2 644.8 L1464.3 645.0 L1464.4 645.1 L1464.5 645.2 L1464.6 645.2 L1464.8 645.2 L1465.0 645.2 L1465.2 644.9 L1465.3 644.8 L1465.4 644.5 L1465.5 644.2 L1465.6 643.9 L1465.7 643.4 L1465.8 642.9 L1465.9 642.4 L1466.0 642.3 L1466.1 642.4 L1466.2 642.7 L1466.3 643.1 L1466.4 643.4 L1466.5 643.7 L1466.6 643.8 L1466.7 643.8 L1466.8 643.6 L1466.9 643.4 L1467.0 643.0 L1467.1 642.4 L1467.2 641.6 L1467.3 640.8 L1467.4 640.2 L1467.5 639.9 L1467.6 640.1 L1467.7 640.7 L1467.8 641.4 L1467.9 642.1 L1468.0 642.6 L1468.1 642.8 L1468.2 642.9 L1468.3 642.9 L1468.4 642.6 L1468.5 642.2 L1468.6 641.7 L1468.7 641.3 L1468.8 641.1 L1468.9 641.3 L1469.0 641.8 L1469.1 642.4 L1469.2 642.9 L1469.3 643.3 L1469.4 643.5 L1469.5 643.6 L1469.6 643.6 L1469.7 643.4 L1469.8 643.1 L1469.9 642.6 L1470.0 642.0 L1470.1 641.3 L1470.2 640.7 L1470.3 640.5 L1470.4 640.8 L1470.5 641.4 L1470.6 642.1 L1470.7 642.8 L1470.8 643.3 L1470.9 643.7 L1471.0 644.0 L1471.1 644.1 L1471.2 644.2 L1471.3 644.1 L1471.4 644.0 L1471.5 643.8 L1471.6 643.4 L1471.7 643.1 L1471.8 642.8 L1471.9 642.6 L1472.0 642.7 L1472.1 643.0 L1472.2 643.3 L1472.3 643.6 L1472.4 643.8 L1472.5 643.8 L1472.6 643.7 L1472.7 643.5 L1472.8 643.3 L1472.9 643.1 L1473.0 643.0 L1473.1 643.2 L1473.2 643.5 L1473.3 643.9 L1473.4 644.3 L1473.5 644.6 L1473.6 644.9 L1473.7 645.0 L1473.8 645.2 L1473.9 645.3 L1474.0 645.4 L1474.1 645.4 L1474.2 645.5 L1474.3 645.5 L1474.4 645.5 L1474.5 645.5 L1474.6 645.5 L1474.8 645.4 L1474.9 645.4 L1475.0 645.3 L1475.2 645.1 L1475.4 644.8 L1475.5 644.8 L1475.6 644.7 L1475.8 644.9 L1475.9 645.0 L1476.0 645.1 L1476.1 645.3 L1476.2 645.4 L1476.4 645.5 L1476.5 645.6 L1476.6 645.6 L1476.8 645.7 L1477.0 645.7 L1477.1 645.8 L1477.2 645.8 L1477.4 645.8 L1477.5 645.8 L1477.6 645.8 L1477.8 645.8 L1478.0 645.8 L1478.1 645.8 L1478.2 645.8 L1478.6 645.9 L1478.7 645.9 L1479.2 645.9 L1479.7 645.9 L1480.2 645.9 L1480.7 645.9 L1481.2 645.9 L1484.2 645.9 L1487.2 645.9 L1490.2 645.9 L1493.2 645.8 L1496.2 645.7 L1496.3 645.7 L1496.8 645.7 L1497.3 645.6 L1497.8 645.6 L1498.1 645.5 L1498.3 645.5 L1498.6 645.4 L1498.8 645.3 L1499.1 645.2 L1499.2 645.1 L1499.3 645.1 L1499.6 644.9 L1499.8 644.7 L1500.1 644.3 L1500.3 643.9 L1500.5 643.4 L1500.6 643.1 L1500.7 642.7 L1500.9 641.8 L1501.1 640.3 L1501.3 638.0 L1501.5 634.2 L1501.6 631.5 L1501.7 628.1 L1501.9 618.4 L1502.1 606.1 L1502.2 601.2 L1502.3 599.2 L1502.5 605.0 L1502.7 616.0 L1502.9 624.1 L1503.1 627.9 L1503.3 627.9 L1503.5 624.1 L1503.7 615.9 L1503.9 604.8 L1504.1 599.0 L1504.3 605.9 L1504.5 618.2 L1504.7 628.0 L1504.9 634.2 L1505.1 637.9 L1505.2 639.2 L1505.3 640.2 L1505.4 641.1 L1505.5 641.7 L1505.7 642.7 L1505.9 643.4 L1506.0 643.7 L1506.1 643.9 L1506.3 644.3 L1506.4 644.4 L1506.5 644.5 L1506.7 644.7 L1506.9 644.9 L1507.0 645.0 L1507.2 645.1 L1507.4 645.2 L1507.5 645.2 L1507.7 645.3 L1507.9 645.3 L1508.0 645.4 L1508.2 645.4 L1508.5 645.4 L1508.7 645.5 L1509.0 645.5 L1509.2 645.5 L1509.5 645.4 L1509.7 645.4 L1509.9 645.4 L1510.0 645.3 L1510.1 645.3 L1510.3 645.1 L1510.5 644.9 L1510.7 644.4 L1510.9 643.6 L1511.0 642.9 L1511.1 641.9 L1511.2 640.5 L1511.3 638.9 L1511.5 636.7 L1511.7 638.8 L1511.9 641.5 L1512.0 642.4 L1512.1 643.0 L1512.3 643.5 L1512.5 643.4 L1512.7 642.8 L1512.9 641.3 L1513.0 640.1 L1513.1 638.4 L1513.3 633.8 L1513.5 630.9 L1513.6 631.7 L1513.7 633.8 L1513.9 638.4 L1514.0 640.1 L1514.1 641.4 L1514.2 642.3 L1514.3 643.0 L1514.5 643.8 L1514.6 644.1 L1514.7 644.2 L1514.9 644.4 L1515.1 644.4 L1515.3 644.2 L1515.5 643.8 L1515.6 643.4 L1515.7 642.9 L1515.8 642.2 L1515.9 641.2 L1516.1 638.1 L1516.3 633.2 L1516.5 630.1 L1516.6 631.0 L1516.7 633.2 L1516.8 635.8 L1516.9 638.1 L1517.1 641.3 L1517.2 642.3 L1517.3 643.0 L1517.5 643.9 L1517.6 644.2 L1517.7 644.4 L1517.8 644.6 L1517.9 644.7 L1518.0 644.8 L1518.1 644.8 L1518.2 644.9 L1518.3 644.9 L1518.4 644.9 L1518.5 644.8 L1518.6 644.7 L1518.7 644.6 L1518.8 644.5 L1518.9 644.2 L1519.0 643.9 L1519.1 643.5 L1519.2 643.0 L1519.3 642.4 L1519.4 641.7 L1519.5 641.2 L1519.6 640.9 L1519.7 641.1 L1519.8 641.5 L1519.9 642.0 L1520.0 642.5 L1520.1 642.8 L1520.2 643.0 L1520.3 643.1 L1520.4 643.0 L1520.5 642.8 L1520.6 642.5 L1520.7 642.0 L1520.8 641.3 L1520.9 640.5 L1521.0 639.6 L1521.1 638.7 L1521.2 638.0 L1521.3 637.7 L1521.4 637.8 L1521.5 638.4 L1521.6 639.1 L1521.7 639.8 L1521.8 640.4 L1521.9 640.8 L1522.0 640.9 L1522.1 640.9 L1522.2 640.6 L1522.3 640.2 L1522.4 639.8 L1522.5 639.5 L1522.6 639.4 L1522.7 639.6 L1522.8 640.1 L1522.9 640.6 L1523.0 641.2 L1523.1 641.6 L1523.2 641.9 L1523.3 642.0 L1523.4 642.0 L1523.5 641.8 L1523.6 641.5 L1523.7 641.2 L1523.8 641.0 L1523.9 640.9 L1524.0 641.1 L1524.1 641.5 L1524.2 642.0 L1524.3 642.5 L1524.4 643.0 L1524.5 643.3 L1524.6 643.6 L1524.7 643.7 L1524.8 643.8 L1524.9 643.8 L1525.0 643.7 L1525.1 643.6 L1525.2 643.6 L1525.3 643.6 L1525.4 643.7 L1525.5 643.9 L1525.7 644.4 L1525.9 644.9 L1526.1 645.2 L1526.2 645.3 L1526.3 645.3 L1526.4 645.4 L1526.5 645.5 L1526.7 645.6 L1526.9 645.6 L1527.0 645.6 L1527.1 645.7 L1527.2 645.7 L1527.3 645.7 L1527.5 645.7 L1527.7 645.7 L1527.9 645.8 L1528.0 645.8 L1528.2 645.8 L1528.4 645.8 L1528.5 645.8 L1528.9 645.8 L1529.0 645.8 L1529.2 645.8 L1529.4 645.8 L1529.5 645.8 L1529.9 645.8 L1530.4 645.9 L1530.9 645.9 L1532.2 645.9 L1535.2 645.9 L1538.2 645.9 L1541.2 645.9 L1544.2 645.9 L1547.2 645.9 L1550.2 645.9 L1553.2 645.9 L1556.2 645.9 L1559.2 645.9 L1562.2 645.9 L1565.2 645.9 L1566.1 645.9 L1566.6 645.9 L1567.1 645.9 L1567.6 645.9 L1568.1 645.9 L1568.2 645.9 L1568.6 645.9 L1569.1 645.9 L1569.6 645.9 L1570.1 645.9 L1570.3 645.9 L1570.5 645.8 L1570.7 645.8 L1570.9 645.8 L1571.1 645.7 L1571.2 645.7 L1571.3 645.6 L1571.5 645.4 L1571.7 645.0 L1571.9 644.4 L1572.1 643.9 L1572.3 644.4 L1572.5 645.0 L1572.7 645.4 L1572.9 645.6 L1573.1 645.7 L1573.3 645.8 L1573.5 645.8 L1573.7 645.8 L1573.9 645.9 L1574.1 645.9 L1574.2 645.9 L1574.3 645.9 L1574.5 645.9 L1574.7 645.9 L1575.2 645.9 L1575.7 645.9 L1576.2 645.9 L1576.7 645.9 L1577.2 645.9 L1577.7 645.9 L1579.0 645.9 L1579.5 645.9 L1580.0 645.9 L1580.2 645.9 L1580.5 645.9 L1581.0 645.9 L1581.5 645.9 L1582.0 645.9 L1582.5 645.9 L1583.0 645.9 L1583.2 645.9 L1583.4 645.9 L1583.6 645.9 L1583.8 645.9 L1584.0 645.9 L1584.2 645.9 L1584.4 645.8 L1584.6 645.8 L1584.8 645.7 L1585.0 645.6 L1585.1 645.7 L1585.2 645.7 L1585.4 645.8 L1585.6 645.8 L1585.8 645.9 L1586.0 645.9 L1586.1 645.9 L1586.2 645.9 L1586.3 645.9 L1586.4 645.9 L1586.6 645.9 L1586.8 645.9 L1587.0 645.9 L1587.1 645.9 L1587.2 645.9 L1587.3 645.9 L1587.4 645.9 L1587.6 645.9 L1587.8 645.9 L1588.1 645.9 L1588.3 645.9 L1588.6 645.9 L1588.8 645.9 L1589.0 645.9 L1589.1 645.9 L1589.2 645.9 L1589.3 645.9 L1589.4 645.8 L1589.6 645.8 L1589.8 645.8 L1590.0 645.7 L1590.1 645.6 L1590.2 645.5 L1590.3 645.4 L1590.4 645.2 L1590.5 645.0 L1590.6 644.9 L1590.7 645.0 L1590.8 645.2 L1590.9 645.4 L1591.0 645.5 L1591.1 645.6 L1591.2 645.7 L1591.3 645.7 L1591.4 645.7 L1591.5 645.7 L1591.6 645.7 L1591.7 645.7 L1591.8 645.6 L1591.9 645.5 L1592.0 645.4 L1592.1 645.2 L1592.2 645.0 L1592.3 644.9 L1592.4 645.0 L1592.5 645.2 L1592.6 645.4 L1592.7 645.5 L1592.8 645.6 L1592.9 645.7 L1593.0 645.8 L1593.1 645.8 L1593.2 645.8 L1593.3 645.8 L1593.5 645.8 L1593.7 645.9 L1593.9 645.9 L1594.0 645.9 L1594.1 645.9 L1594.2 645.9 L1594.3 645.9 L1594.5 645.9 L1594.6 645.9 L1594.7 645.9 L1594.9 645.9 L1595.0 645.9 L1595.1 645.9 L1595.2 645.9 L1595.4 645.9 L1595.5 645.9 L1595.6 645.9 L1595.7 645.9 L1595.9 645.9 L1596.0 645.9 L1596.1 645.9 L1596.2 645.9 L1596.4 645.9 L1596.5 645.9 L1596.6 645.9 L1596.9 645.9 L1597.0 645.9 L1597.1 645.9 L1597.2 645.9 L1597.4 645.9 L1597.6 645.9 L1597.8 645.8 L1597.9 645.8 L1598.0 645.8 L1598.1 645.8 L1598.2 645.8 L1598.4 645.7 L1598.6 645.6 L1598.8 645.3 L1599.0 645.0 L1599.2 645.3 L1599.4 645.5 L1599.6 645.7 L1599.8 645.7 L1600.0 645.7 L1600.2 645.5 L1600.4 645.3 L1600.6 645.0 L1600.8 645.3 L1601.0 645.6 L1601.2 645.7 L1601.4 645.8 L1601.6 645.8 L1601.8 645.8 L1602.0 645.9 L1602.1 645.9 L1602.2 645.9 L1602.4 645.9 L1602.6 645.9 L1602.8 645.9 L1603.0 645.9 L1603.1 645.9 L1603.2 645.9 L1603.6 645.9 L1603.7 645.9 L1604.1 645.9 L1604.2 645.9 L1604.6 645.9 L1604.7 645.9 L1605.2 645.9 L1605.7 645.9 L1606.2 645.9 L1607.2 645.9 L1610.2 645.9 L1613.2 645.8 L1616.2 645.7 L1616.6 645.7 L1617.1 645.6 L1617.6 645.5 L1618.1 645.5 L1618.3 645.4 L1618.6 645.3 L1618.8 645.2 L1619.1 645.1 L1619.2 645.1 L1619.3 645.0 L1619.6 644.8 L1619.8 644.6 L1620.1 644.2 L1620.3 643.9 L1620.6 643.2 L1620.8 642.5 L1621.0 641.6 L1621.2 640.3 L1621.3 639.3 L1621.4 638.2 L1621.6 635.1 L1621.8 630.0 L1622.0 621.6 L1622.2 608.4 L1622.3 600.0 L1622.4 591.6 L1622.5 585.0 L1622.6 582.2 L1622.7 584.2 L1622.8 589.9 L1622.9 597.4 L1623.0 604.7 L1623.1 610.8 L1623.2 615.3 L1623.3 618.3 L1623.4 619.8 L1623.5 619.9 L1623.6 618.6 L1623.7 615.9 L1623.8 611.6 L1623.9 605.8 L1624.0 598.8 L1624.1 591.7 L1624.2 586.2 L1624.3 584.3 L1624.4 587.0 L1624.5 593.4 L1624.6 601.5 L1624.7 609.6 L1624.8 616.6 L1624.9 622.4 L1625.0 626.9 L1625.1 630.5 L1625.2 633.2 L1625.3 635.4 L1625.5 638.4 L1625.7 640.4 L1625.9 641.7 L1626.0 642.2 L1626.1 642.6 L1626.2 643.0 L1626.3 643.3 L1626.5 643.8 L1626.7 644.1 L1626.9 644.4 L1627.0 644.5 L1627.2 644.7 L1627.4 644.9 L1627.5 645.0 L1627.7 645.1 L1627.9 645.2 L1628.0 645.2 L1628.2 645.3 L1628.4 645.4 L1628.5 645.4 L1628.7 645.4 L1628.9 645.5 L1629.1 645.5 L1629.3 645.5 L1629.4 645.6 L1629.5 645.6 L1629.7 645.6 L1629.9 645.6 L1630.1 645.6 L1630.3 645.6 L1630.5 645.6 L1630.7 645.6 L1630.9 645.7 L1631.1 645.7 L1631.2 645.7 L1631.3 645.7 L1631.5 645.7 L1631.7 645.7 L1631.9 645.8 L1632.1 645.8 L1632.3 645.8 L1632.5 645.8 L1632.7 645.8 L1632.9 645.8 L1633.1 645.8 L1633.6 645.8 L1634.1 645.8 L1634.2 645.8 L1634.6 645.8 L1635.1 645.8 L1635.6 645.8 L1636.1 645.9 L1637.2 645.9 L1640.2 645.9 L1643.2 645.9 L1646.2 645.9 L1649.2 645.9 L1652.2 645.9 L1655.2 645.9 L1658.2 645.9 L1661.2 645.9 L1664.2 645.9 L1667.2 645.9 L1670.2 645.9 L1673.2 645.9 L1676.2 645.9 L1679.2 645.9 L1682.2 645.9 L1685.2 645.9 L1688.2 645.9 L1691.2 645.9 L1694.2 645.9 L1697.2 645.9 L1700.2 645.9 L1703.2 645.9 L1706.2 645.9 L1709.2 645.9 L1712.2 645.9 L1715.2 645.9 L1718.2 645.9 L1721.2 645.9 L1723.5 645.9 L1724.0 645.9 L1724.2 645.9 L1724.5 645.9 L1725.0 645.9 L1725.5 645.9 L1726.0 645.9 L1726.5 645.9 L1727.0 645.9 L1727.2 645.9 L1727.5 645.9 L1727.7 645.9 L1727.9 645.9 L1728.1 645.9 L1728.3 645.9 L1728.5 645.9 L1728.7 645.8 L1728.9 645.8 L1729.1 645.6 L1729.3 645.2 L1729.5 644.8 L1729.7 645.2 L1729.9 645.6 L1730.1 645.8 L1730.2 645.8 L1730.3 645.8 L1730.5 645.9 L1730.7 645.9 L1730.9 645.9 L1731.1 645.9 L1731.3 645.9 L1731.5 645.9 L1731.7 645.9 L1731.9 645.9 L1732.1 645.9 L1732.6 645.9 L1733.1 645.9 L1733.2 645.9 L1733.6 645.9 L1734.1 645.9 L1734.6 645.9 L1735.1 645.9 L1736.2 645.9 L1739.2 645.9 L1742.2 645.9 L1745.2 645.9 L1748.2 645.9 L1751.2 645.9 L1754.2 645.9 L1757.2 645.9 L1760.2 645.9 L1763.2 645.9 L1766.2 645.9 L1769.2 645.9 L1772.2 645.9 L1775.2 645.9 L1778.2 645.9 L1781.2 645.9 L1784.2 645.9 L1787.2 645.9 L1790.2 645.9 L1793.2 645.9 L1796.2 645.9 L1799.2 645.9 L1802.2 645.9 L1805.2 645.9 L1808.2 645.9 L1811.2 645.9 L1814.2 645.9 L1817.2 645.9 L1820.2 645.9 L1823.2 645.9 L1826.2 645.9 L1829.2 645.9 L1832.2 645.9 L1835.2 645.9 L1838.0 645.9" fill="none" stroke="#f03838" stroke-width="0.9" clip-path="url(#cpH)"/>
<rect x="475.6" y="708.15" width="159.9" height="1.3" fill="#555"/>
<rect x="473.8" y="712.85" width="161.7" height="1.3" fill="#999"/>
<rect x="476" y="743.00" width="159.5" height="1.4" fill="#444"/>
<rect x="448.5" y="743.20" width="187.0" height="1.0" fill="#888"/>
<rect x="490" y="747.00" width="145.5" height="1.2" fill="#aaa"/>
<rect x="490" y="769.40" width="145.5" height="1.2" fill="#555"/>
<rect x="476" y="781.60" width="159.5" height="1.2" fill="#555"/>
<rect x="475" y="784.10" width="160.5" height="1.2" fill="#999"/>
<rect x="476" y="790.40" width="159.5" height="1.2" fill="#aaa"/>
<rect x="462" y="802.45" width="173.5" height="1.3" fill="#888"/>
<rect x="447" y="804.60" width="188.5" height="2.2" fill="#1a1a1a"/>
<rect x="476" y="811.30" width="159.5" height="1.2" fill="#777"/>
<rect x="531.3" y="885.70" width="104.2" height="2.6" fill="#999"/>
<rect x="495" y="890.85" width="140.5" height="1.3" fill="#bbb"/>
<rect x="499.8" y="894.25" width="135.7" height="1.5" fill="#6d826d"/>
<rect x="562.9" y="939.35" width="72.6" height="1.3" fill="#6d866d"/>
<rect x="559.4" y="951.55" width="76.1" height="1.3" fill="#888"/>
<path d="M635.6 662 C634.6 760 634.6 920 635.2 1018" fill="none" stroke="#0a0a0a" stroke-width="2.4"/>
<ellipse cx="967.2" cy="895" rx="7" ry="2.7" fill="#f01010"/>
<ellipse cx="1026.4" cy="891.6" rx="8" ry="2.7" fill="#f01010"/>
<ellipse cx="1054.2" cy="782.3" rx="9" ry="2.6" fill="#1010e8"/>
<ellipse cx="1114.9" cy="802.9" rx="6.5" ry="2.7" fill="#f01010"/>
<ellipse cx="1205.5" cy="806.9" rx="7" ry="2.7" fill="#f01010"/>
<ellipse cx="1226.8" cy="782.3" rx="7" ry="2.4" fill="#1010e8"/>
<ellipse cx="1246.7" cy="785.2" rx="9" ry="2.4" fill="#1010e8"/>
<ellipse cx="1270" cy="791" rx="8.5" ry="2.5" fill="#1010e8"/>
<ellipse cx="1283" cy="791" rx="8.5" ry="2.5" fill="#1010e8"/>
<ellipse cx="1313.5" cy="785.2" rx="8" ry="2.4" fill="#1010e8"/>
<ellipse cx="1329.8" cy="770.4" rx="7" ry="2.6" fill="#1010e8"/>
<ellipse cx="1418.2" cy="770.5" rx="8.5" ry="2.7" fill="#1010e8"/>
<ellipse cx="1435.9" cy="743.1" rx="9" ry="2.5" fill="#1010e8"/>
<ellipse cx="1458.5" cy="747.6" rx="8.5" ry="2.6" fill="#1010e8"/>
<ellipse cx="1468.2" cy="743.1" rx="8.5" ry="2.5" fill="#1010e8"/>
<ellipse cx="1514.9" cy="747.7" rx="9.5" ry="2.6" fill="#1010e8"/>
<ellipse cx="1520.3" cy="744.8" rx="10" ry="2.6" fill="#f01010"/>
<ellipse cx="1503.2" cy="713.9" rx="7" ry="2.5" fill="#f01010"/>
<ellipse cx="1622.8" cy="708.8" rx="7" ry="3" fill="#f01010"/>
<ellipse cx="1417.2" cy="743.2" rx="3.5" ry="1.8" fill="#5a6af0"/>
<ellipse cx="1435.4" cy="770.3" rx="2" ry="1" fill="#4a5af0"/>
<ellipse cx="1469.3" cy="770.3" rx="2.7" ry="1" fill="#5a6af0"/>
<ellipse cx="1619.9" cy="744.7" rx="1" ry="1.5" fill="#3040e8"/>
<ellipse cx="1625" cy="744.7" rx="2.7" ry="2.1" fill="#f03030"/>
<ellipse cx="1516.6" cy="712.2" rx="1" ry="1" fill="#ff7070"/>
<ellipse cx="1571.3" cy="729.4" rx="1.1" ry="1.1" fill="#ff6060"/>
<ellipse cx="1026.8" cy="713.7" rx="1" ry="1" fill="#ff5050"/>
<ellipse cx="1503.3" cy="891.2" rx="2" ry="1.4" fill="#ff4040"/>
<ellipse cx="838.3" cy="805.3" rx="1" ry="1" fill="#e02020"/>
<ellipse cx="1519.3" cy="742.9" rx="3" ry="1" fill="#3030d0"/>
<ellipse cx="970" cy="896.6" rx="3.2" ry="1.2" fill="#2020d0"/>
<ellipse cx="1029" cy="890" rx="3" ry="1" fill="#3030d0"/>
<ellipse cx="967.2" cy="895" rx="4.3" ry="1.4" fill="none" stroke="#ff8a7a" stroke-width="0.5" stroke-dasharray="1.2 0.8" opacity="0.8"/>
<ellipse cx="967.2" cy="895" rx="2.4" ry="1.1" fill="#400000" opacity="0.85"/>
<ellipse cx="1026.4" cy="891.6" rx="5.0" ry="1.4" fill="none" stroke="#ff8a7a" stroke-width="0.5" stroke-dasharray="1.2 0.8" opacity="0.8"/>
<ellipse cx="1026.4" cy="891.6" rx="2.7" ry="1.1" fill="#400000" opacity="0.85"/>
<ellipse cx="1054.2" cy="782.3" rx="5.6" ry="1.3" fill="none" stroke="#6a7aff" stroke-width="0.5" stroke-dasharray="1.2 0.8" opacity="0.8"/>
<ellipse cx="1054.2" cy="782.3" rx="3.1" ry="1.1" fill="#000030" opacity="0.85"/>
<ellipse cx="1114.9" cy="802.9" rx="4.0" ry="1.4" fill="none" stroke="#ff8a7a" stroke-width="0.5" stroke-dasharray="1.2 0.8" opacity="0.8"/>
<ellipse cx="1114.9" cy="802.9" rx="2.2" ry="1.1" fill="#400000" opacity="0.85"/>
<ellipse cx="1205.5" cy="806.9" rx="4.3" ry="1.4" fill="none" stroke="#ff8a7a" stroke-width="0.5" stroke-dasharray="1.2 0.8" opacity="0.8"/>
<ellipse cx="1205.5" cy="806.9" rx="2.4" ry="1.1" fill="#400000" opacity="0.85"/>
<ellipse cx="1226.8" cy="782.3" rx="4.3" ry="1.2" fill="none" stroke="#6a7aff" stroke-width="0.5" stroke-dasharray="1.2 0.8" opacity="0.8"/>
<ellipse cx="1226.8" cy="782.3" rx="2.4" ry="1.0" fill="#000030" opacity="0.85"/>
<ellipse cx="1246.7" cy="785.2" rx="5.6" ry="1.2" fill="none" stroke="#6a7aff" stroke-width="0.5" stroke-dasharray="1.2 0.8" opacity="0.8"/>
<ellipse cx="1246.7" cy="785.2" rx="3.1" ry="1.0" fill="#000030" opacity="0.85"/>
<ellipse cx="1270" cy="791" rx="5.3" ry="1.2" fill="none" stroke="#6a7aff" stroke-width="0.5" stroke-dasharray="1.2 0.8" opacity="0.8"/>
<ellipse cx="1270" cy="791" rx="2.9" ry="1.1" fill="#000030" opacity="0.85"/>
<ellipse cx="1283" cy="791" rx="5.3" ry="1.2" fill="none" stroke="#6a7aff" stroke-width="0.5" stroke-dasharray="1.2 0.8" opacity="0.8"/>
<ellipse cx="1283" cy="791" rx="2.9" ry="1.1" fill="#000030" opacity="0.85"/>
<ellipse cx="1313.5" cy="785.2" rx="5.0" ry="1.2" fill="none" stroke="#6a7aff" stroke-width="0.5" stroke-dasharray="1.2 0.8" opacity="0.8"/>
<ellipse cx="1313.5" cy="785.2" rx="2.7" ry="1.0" fill="#000030" opacity="0.85"/>
<ellipse cx="1329.8" cy="770.4" rx="4.3" ry="1.3" fill="none" stroke="#6a7aff" stroke-width="0.5" stroke-dasharray="1.2 0.8" opacity="0.8"/>
<ellipse cx="1329.8" cy="770.4" rx="2.4" ry="1.1" fill="#000030" opacity="0.85"/>
<ellipse cx="1418.2" cy="770.5" rx="5.3" ry="1.4" fill="none" stroke="#6a7aff" stroke-width="0.5" stroke-dasharray="1.2 0.8" opacity="0.8"/>
<ellipse cx="1418.2" cy="770.5" rx="2.9" ry="1.1" fill="#000030" opacity="0.85"/>
<ellipse cx="1435.9" cy="743.1" rx="5.6" ry="1.2" fill="none" stroke="#6a7aff" stroke-width="0.5" stroke-dasharray="1.2 0.8" opacity="0.8"/>
<ellipse cx="1435.9" cy="743.1" rx="3.1" ry="1.1" fill="#000030" opacity="0.85"/>
<ellipse cx="1458.5" cy="747.6" rx="5.3" ry="1.3" fill="none" stroke="#6a7aff" stroke-width="0.5" stroke-dasharray="1.2 0.8" opacity="0.8"/>
<ellipse cx="1458.5" cy="747.6" rx="2.9" ry="1.1" fill="#000030" opacity="0.85"/>
<ellipse cx="1468.2" cy="743.1" rx="5.3" ry="1.2" fill="none" stroke="#6a7aff" stroke-width="0.5" stroke-dasharray="1.2 0.8" opacity="0.8"/>
<ellipse cx="1468.2" cy="743.1" rx="2.9" ry="1.1" fill="#000030" opacity="0.85"/>
<ellipse cx="1514.9" cy="747.7" rx="5.9" ry="1.3" fill="none" stroke="#6a7aff" stroke-width="0.5" stroke-dasharray="1.2 0.8" opacity="0.8"/>
<ellipse cx="1514.9" cy="747.7" rx="3.2" ry="1.1" fill="#000030" opacity="0.85"/>
<ellipse cx="1520.3" cy="744.8" rx="6.2" ry="1.3" fill="none" stroke="#ff8a7a" stroke-width="0.5" stroke-dasharray="1.2 0.8" opacity="0.8"/>
<ellipse cx="1520.3" cy="744.8" rx="3.4" ry="1.1" fill="#400000" opacity="0.85"/>
<ellipse cx="1503.2" cy="713.9" rx="4.3" ry="1.2" fill="none" stroke="#ff8a7a" stroke-width="0.5" stroke-dasharray="1.2 0.8" opacity="0.8"/>
<ellipse cx="1503.2" cy="713.9" rx="2.4" ry="1.1" fill="#400000" opacity="0.85"/>
<ellipse cx="1622.8" cy="708.8" rx="4.3" ry="1.5" fill="none" stroke="#ff8a7a" stroke-width="0.5" stroke-dasharray="1.2 0.8" opacity="0.8"/>
<ellipse cx="1622.8" cy="708.8" rx="2.4" ry="1.3" fill="#400000" opacity="0.85"/>
<path d="M1386.9 700.2 H1497.4 L1503.2 713" fill="none" stroke="#6e6e6e" stroke-width="1.1"/>
<text x="1403.7" y="695.9" font-size="12" fill="#111" transform="scale(0.988,1)">1.86, 15.05 (25, 25)</text>
<path d="M1506.6 695 H1617.7 L1622.5 708" fill="none" stroke="#6e6e6e" stroke-width="1.1"/>
<text x="1524.9" y="691.3" font-size="12" fill="#111" transform="scale(0.988,1)">0.88, 11.67 (24, 24)</text>
<path d="M1397.5 734 H1508.3 L1512.2 746" fill="none" stroke="#6e6e6e" stroke-width="1.1"/>
<text x="1414.5" y="729.7" font-size="12" fill="#111" transform="scale(0.988,1)">1.78, 37.87 (13, 13)</text>
<path d="M1637.4 758.1 H1525.1 L1520.7 746.5" fill="none" stroke="#6e6e6e" stroke-width="1.1"/>
<text x="1552.9" y="769.4" font-size="12" fill="#111" transform="scale(0.988,1)">1.72, 35.68 (11, 11)</text>
<path d="M1534.9 784.1 H1423 L1418.8 772.5" fill="none" stroke="#6e6e6e" stroke-width="1.1"/>
<text x="1448.4" y="795.3" font-size="12" fill="#111" transform="scale(0.988,1)">2.56, 52.96 (17, 17)</text>
<path d="M937.2 768.8 H1048 L1053.5 781" fill="none" stroke="#6e6e6e" stroke-width="1.1"/>
<text x="948.6" y="765" font-size="12" fill="#111" transform="scale(0.988,1)">5.53, 61.18 (15, 15)</text>
<path d="M1212.7 756.5 H1323.3 L1329 769" fill="none" stroke="#6e6e6e" stroke-width="1.1"/>
<text x="1227.4" y="752.4" font-size="12" fill="#111" transform="scale(0.988,1)">3.28, 52.95 (17, 17)</text>
<path d="M1152.8 777.3 H1263 L1269.5 790" fill="none" stroke="#6e6e6e" stroke-width="1.1"/>
<text x="1166.8" y="773" font-size="12" fill="#111" transform="scale(0.988,1)">3.77, 66.85 (22, 22)</text>
<path d="M1095 793.5 H1199.7 L1205.5 806" fill="none" stroke="#6e6e6e" stroke-width="1.1"/>
<text x="1108.3" y="789.2" font-size="12" fill="#111" transform="scale(0.988,1)">4.29, 77.52 (9a, 9)</text>
<path d="M1219.6 816.8 H1120.3 L1115.5 804.5" fill="none" stroke="#6e6e6e" stroke-width="1.1"/>
<text x="1142.3" y="828.2" font-size="12" fill="#111" transform="scale(0.988,1)">5.03, 75.10 (4, 4)</text>
<path d="M1400.5 804.7 H1288.2 L1283.5 793" fill="none" stroke="#6e6e6e" stroke-width="1.1"/>
<text x="1312.2" y="815.6" font-size="12" fill="#111" transform="scale(0.988,1)">3.66, 66.85 (22, 22)</text>
<path d="M1157.1 904.8 H1031.8 L1027.5 894" fill="none" stroke="#6e6e6e" stroke-width="1.1"/>
<text x="1052.7" y="916" font-size="12" fill="#111" transform="scale(0.988,1)">5.75, 134.62 (20a, 20)</text>
<path d="M843.5 909.4 H961.3 L967 897.5" fill="none" stroke="#6e6e6e" stroke-width="1.1"/>
<text x="853.7" y="920.4" font-size="12" fill="#111" transform="scale(0.988,1)">6.24, 136.93 (12, 12)</text>
<rect x="728" y="776" width="103" height="15" fill="#fff" stroke="#666" stroke-width="1"/>
<text x="732" y="787.6" font-size="12" fill="#111" textLength="95" lengthAdjust="spacingAndGlyphs">CHLOROFORM-d</text>
<path d="M821.5 791 L838.2 804.8 L831 791" fill="none" stroke="#666" stroke-width="0.9"/>
<path d="M1866.1 1027 v2.8 M1859.9 1027 v2.8 M1853.8 1027 v5.5 M1847.7 1027 v2.8 M1841.5 1027 v2.8 M1835.4 1027 v2.8 M1829.3 1027 v2.8 M1823.2 1027 v4.2 M1817.0 1027 v2.8 M1810.9 1027 v2.8 M1804.8 1027 v2.8 M1798.6 1027 v2.8 M1792.5 1027 v5.5 M1786.4 1027 v2.8 M1780.2 1027 v2.8 M1774.1 1027 v2.8 M1768.0 1027 v2.8 M1761.9 1027 v4.2 M1755.7 1027 v2.8 M1749.6 1027 v2.8 M1743.5 1027 v2.8 M1737.3 1027 v2.8 M1731.2 1027 v5.5 M1725.1 1027 v2.8 M1718.9 1027 v2.8 M1712.8 1027 v2.8 M1706.7 1027 v2.8 M1700.5 1027 v4.2 M1694.4 1027 v2.8 M1688.3 1027 v2.8 M1682.2 1027 v2.8 M1676.0 1027 v2.8 M1669.9 1027 v5.5 M1663.8 1027 v2.8 M1657.6 1027 v2.8 M1651.5 1027 v2.8 M1645.4 1027 v2.8 M1639.2 1027 v4.2 M1633.1 1027 v2.8 M1627.0 1027 v2.8 M1620.9 1027 v2.8 M1614.7 1027 v2.8 M1608.6 1027 v5.5 M1602.5 1027 v2.8 M1596.3 1027 v2.8 M1590.2 1027 v2.8 M1584.1 1027 v2.8 M1578.0 1027 v4.2 M1571.8 1027 v2.8 M1565.7 1027 v2.8 M1559.6 1027 v2.8 M1553.4 1027 v2.8 M1547.3 1027 v5.5 M1541.2 1027 v2.8 M1535.0 1027 v2.8 M1528.9 1027 v2.8 M1522.8 1027 v2.8 M1516.7 1027 v4.2 M1510.5 1027 v2.8 M1504.4 1027 v2.8 M1498.3 1027 v2.8 M1492.1 1027 v2.8 M1486.0 1027 v5.5 M1479.9 1027 v2.8 M1473.7 1027 v2.8 M1467.6 1027 v2.8 M1461.5 1027 v2.8 M1455.4 1027 v4.2 M1449.2 1027 v2.8 M1443.1 1027 v2.8 M1437.0 1027 v2.8 M1430.8 1027 v2.8 M1424.7 1027 v5.5 M1418.6 1027 v2.8 M1412.4 1027 v2.8 M1406.3 1027 v2.8 M1400.2 1027 v2.8 M1394.1 1027 v4.2 M1387.9 1027 v2.8 M1381.8 1027 v2.8 M1375.7 1027 v2.8 M1369.5 1027 v2.8 M1363.4 1027 v5.5 M1357.3 1027 v2.8 M1351.1 1027 v2.8 M1345.0 1027 v2.8 M1338.9 1027 v2.8 M1332.8 1027 v4.2 M1326.6 1027 v2.8 M1320.5 1027 v2.8 M1314.4 1027 v2.8 M1308.2 1027 v2.8 M1302.1 1027 v5.5 M1296.0 1027 v2.8 M1289.8 1027 v2.8 M1283.7 1027 v2.8 M1277.6 1027 v2.8 M1271.5 1027 v4.2 M1265.3 1027 v2.8 M1259.2 1027 v2.8 M1253.1 1027 v2.8 M1246.9 1027 v2.8 M1240.8 1027 v5.5 M1234.7 1027 v2.8 M1228.5 1027 v2.8 M1222.4 1027 v2.8 M1216.3 1027 v2.8 M1210.2 1027 v4.2 M1204.0 1027 v2.8 M1197.9 1027 v2.8 M1191.8 1027 v2.8 M1185.6 1027 v2.8 M1179.5 1027 v5.5 M1173.4 1027 v2.8 M1167.2 1027 v2.8 M1161.1 1027 v2.8 M1155.0 1027 v2.8 M1148.8 1027 v4.2 M1142.7 1027 v2.8 M1136.6 1027 v2.8 M1130.5 1027 v2.8 M1124.3 1027 v2.8 M1118.2 1027 v5.5 M1112.1 1027 v2.8 M1105.9 1027 v2.8 M1099.8 1027 v2.8 M1093.7 1027 v2.8 M1087.6 1027 v4.2 M1081.4 1027 v2.8 M1075.3 1027 v2.8 M1069.2 1027 v2.8 M1063.0 1027 v2.8 M1056.9 1027 v5.5 M1050.8 1027 v2.8 M1044.6 1027 v2.8 M1038.5 1027 v2.8 M1032.4 1027 v2.8 M1026.2 1027 v4.2 M1020.1 1027 v2.8 M1014.0 1027 v2.8 M1007.9 1027 v2.8 M1001.7 1027 v2.8 M995.6 1027 v5.5 M989.5 1027 v2.8 M983.3 1027 v2.8 M977.2 1027 v2.8 M971.1 1027 v2.8 M965.0 1027 v4.2 M958.8 1027 v2.8 M952.7 1027 v2.8 M946.6 1027 v2.8 M940.4 1027 v2.8 M934.3 1027 v5.5 M928.2 1027 v2.8 M922.0 1027 v2.8 M915.9 1027 v2.8 M909.8 1027 v2.8 M903.7 1027 v4.2 M897.5 1027 v2.8 M891.4 1027 v2.8 M885.3 1027 v2.8 M879.1 1027 v2.8 M873.0 1027 v5.5 M866.9 1027 v2.8 M860.7 1027 v2.8 M854.6 1027 v2.8 M848.5 1027 v2.8 M842.4 1027 v4.2 M836.2 1027 v2.8 M830.1 1027 v2.8 M824.0 1027 v2.8 M817.8 1027 v2.8 M811.7 1027 v5.5 M805.6 1027 v2.8 M799.4 1027 v2.8 M793.3 1027 v2.8 M787.2 1027 v2.8 M781.1 1027 v4.2 M774.9 1027 v2.8 M768.8 1027 v2.8 M762.7 1027 v2.8 M756.5 1027 v2.8 M750.4 1027 v5.5 M744.3 1027 v2.8 M738.1 1027 v2.8 M732.0 1027 v2.8 M725.9 1027 v2.8 M719.8 1027 v4.2 M713.6 1027 v2.8 M707.5 1027 v2.8 M701.4 1027 v2.8 M695.2 1027 v2.8 M689.1 1027 v5.5 M683.0 1027 v2.8 M676.8 1027 v2.8 M670.7 1027 v2.8 M664.6 1027 v2.8" stroke="#555" stroke-width="0.9" fill="none"/>
<text x="1853.8" y="1043.6" font-size="12" fill="#222" text-anchor="middle">-1.0</text>
<text x="1792.5" y="1043.6" font-size="12" fill="#222" text-anchor="middle">-0.5</text>
<text x="1731.2" y="1043.6" font-size="12" fill="#222" text-anchor="middle">0</text>
<text x="1669.9" y="1043.6" font-size="12" fill="#222" text-anchor="middle">0.5</text>
<text x="1608.6" y="1043.6" font-size="12" fill="#222" text-anchor="middle">1.0</text>
<text x="1547.3" y="1043.6" font-size="12" fill="#222" text-anchor="middle">1.5</text>
<text x="1486.0" y="1043.6" font-size="12" fill="#222" text-anchor="middle">2.0</text>
<text x="1424.7" y="1043.6" font-size="12" fill="#222" text-anchor="middle">2.5</text>
<text x="1363.4" y="1043.6" font-size="12" fill="#222" text-anchor="middle">3.0</text>
<text x="1302.1" y="1043.6" font-size="12" fill="#222" text-anchor="middle">3.5</text>
<text x="1240.8" y="1043.6" font-size="12" fill="#222" text-anchor="middle">4.0</text>
<text x="1179.5" y="1043.6" font-size="12" fill="#222" text-anchor="middle">4.5</text>
<text x="1118.2" y="1043.6" font-size="12" fill="#222" text-anchor="middle">5.0</text>
<text x="1056.9" y="1043.6" font-size="12" fill="#222" text-anchor="middle">5.5</text>
<text x="995.6" y="1043.6" font-size="12" fill="#222" text-anchor="middle">6.0</text>
<text x="934.3" y="1043.6" font-size="12" fill="#222" text-anchor="middle">6.5</text>
<text x="873.0" y="1043.6" font-size="12" fill="#222" text-anchor="middle">7.0</text>
<text x="811.7" y="1043.6" font-size="12" fill="#222" text-anchor="middle">7.5</text>
<text x="750.4" y="1043.6" font-size="12" fill="#222" text-anchor="middle">8.0</text>
<text x="689.1" y="1043.6" font-size="12" fill="#222" text-anchor="middle">8.5</text>
<text x="447" y="1043.4" font-size="12" fill="#222">F2 Chemical Shift (ppm)</text>
<path d="M1868 655.3 h3 M1868 658.3 h3 M1868 661.3 h7 M1868 664.2 h3 M1868 667.2 h3 M1868 670.2 h3 M1868 673.2 h3 M1868 676.1 h5 M1868 679.1 h3 M1868 682.1 h3 M1868 685.1 h3 M1868 688.0 h3 M1868 691.0 h7 M1868 694.0 h3 M1868 696.9 h3 M1868 699.9 h3 M1868 702.9 h3 M1868 705.9 h5 M1868 708.8 h3 M1868 711.8 h3 M1868 714.8 h3 M1868 717.8 h3 M1868 720.7 h7 M1868 723.7 h3 M1868 726.7 h3 M1868 729.6 h3 M1868 732.6 h3 M1868 735.6 h5 M1868 738.6 h3 M1868 741.5 h3 M1868 744.5 h3 M1868 747.5 h3 M1868 750.5 h7 M1868 753.4 h3 M1868 756.4 h3 M1868 759.4 h3 M1868 762.4 h3 M1868 765.3 h5 M1868 768.3 h3 M1868 771.3 h3 M1868 774.2 h3 M1868 777.2 h3 M1868 780.2 h7 M1868 783.2 h3 M1868 786.1 h3 M1868 789.1 h3 M1868 792.1 h3 M1868 795.1 h5 M1868 798.0 h3 M1868 801.0 h3 M1868 804.0 h3 M1868 806.9 h3 M1868 809.9 h7 M1868 812.9 h3 M1868 815.9 h3 M1868 818.8 h3 M1868 821.8 h3 M1868 824.8 h5 M1868 827.8 h3 M1868 830.7 h3 M1868 833.7 h3 M1868 836.7 h3 M1868 839.6 h7 M1868 842.6 h3 M1868 845.6 h3 M1868 848.6 h3 M1868 851.5 h3 M1868 854.5 h5 M1868 857.5 h3 M1868 860.5 h3 M1868 863.4 h3 M1868 866.4 h3 M1868 869.4 h7 M1868 872.4 h3 M1868 875.3 h3 M1868 878.3 h3 M1868 881.3 h3 M1868 884.2 h5 M1868 887.2 h3 M1868 890.2 h3 M1868 893.2 h3 M1868 896.1 h3 M1868 899.1 h7 M1868 902.1 h3 M1868 905.1 h3 M1868 908.0 h3 M1868 911.0 h3 M1868 914.0 h5 M1868 916.9 h3 M1868 919.9 h3 M1868 922.9 h3 M1868 925.9 h3 M1868 928.8 h7 M1868 931.8 h3 M1868 934.8 h3 M1868 937.8 h3 M1868 940.7 h3 M1868 943.7 h5 M1868 946.7 h3 M1868 949.7 h3 M1868 952.6 h3 M1868 955.6 h3 M1868 958.6 h7 M1868 961.5 h3 M1868 964.5 h3 M1868 967.5 h3 M1868 970.5 h3 M1868 973.4 h5 M1868 976.4 h3 M1868 979.4 h3 M1868 982.4 h3 M1868 985.3 h3 M1868 988.3 h7 M1868 991.3 h3 M1868 994.2 h3 M1868 997.2 h3 M1868 1000.2 h3 M1868 1003.2 h5 M1868 1006.1 h3 M1868 1009.1 h3 M1868 1012.1 h3 M1868 1015.1 h3 M1868 1018.0 h7 M1868 1021.0 h3 M1868 1024.0 h3" stroke="#666" stroke-width="0.9" fill="none"/>
<text x="1889.5" y="665.6" font-size="12" fill="#222" text-anchor="middle">-20</text>
<text x="1889.5" y="695.3" font-size="12" fill="#222" text-anchor="middle">0</text>
<text x="1889.5" y="725.0" font-size="12" fill="#222" text-anchor="middle">20</text>
<text x="1889.5" y="754.8" font-size="12" fill="#222" text-anchor="middle">40</text>
<text x="1889.5" y="784.5" font-size="12" fill="#222" text-anchor="middle">60</text>
<text x="1889.5" y="814.2" font-size="12" fill="#222" text-anchor="middle">80</text>
<text x="1889.5" y="843.9" font-size="12" fill="#222" text-anchor="middle">100</text>
<text x="1889.5" y="873.7" font-size="12" fill="#222" text-anchor="middle">120</text>
<text x="1889.5" y="903.4" font-size="12" fill="#222" text-anchor="middle">140</text>
<text x="1889.5" y="933.1" font-size="12" fill="#222" text-anchor="middle">160</text>
<text x="1889.5" y="962.9" font-size="12" fill="#222" text-anchor="middle">180</text>
<text x="1889.5" y="992.6" font-size="12" fill="#222" text-anchor="middle">200</text>
<text x="1889.5" y="1022.3" font-size="12" fill="#222" text-anchor="middle">220</text>
<g>
<text x="214.5" y="731.5" font-size="29.8" fill="#dcdcdc" text-anchor="middle">Chemical Structures</text>
<path d="M190.5 622 L211 654.5 L242 680" fill="none" stroke="#aef6ae" stroke-width="31" stroke-linecap="round" stroke-linejoin="round"/>
<path d="M173 668.5 L211 654.5" fill="none" stroke="#aef6ae" stroke-width="31" stroke-linecap="round" stroke-linejoin="round"/>
<circle cx="270.8" cy="665" r="15.4" fill="#f8f56a"/>
<circle cx="240.3" cy="717.2" r="16.3" fill="#f8f56a"/>
<circle cx="321.3" cy="707" r="16.3" fill="#aef6ae"/>
<circle cx="132.8" cy="723.5" r="16.3" fill="#aef6ae"/>
<path d="M252.6 779.5 L269.4 742.5" fill="none" stroke="#aef6ae" stroke-width="29" stroke-linecap="round" stroke-linejoin="round"/>
<path d="M304 739.4 L308 739.4" fill="none" stroke="#f8f56a" stroke-width="30" stroke-linecap="round" stroke-linejoin="round"/>
<path d="M94.5 777.5 L129 758.8" fill="none" stroke="#f8f56a" stroke-width="30" stroke-linecap="round" stroke-linejoin="round"/>
<circle cx="96.7" cy="815.9" r="16.4" fill="#aef6ae"/>
<path d="M157 788.6 L192.8 805 L192.8 845 L150 858" fill="none" stroke="#aef6ae" stroke-width="28.5" stroke-linecap="round" stroke-linejoin="round"/>
<path d="M191.1 629.5 L201.4 645.2 M190.3 612.3 L191.2 609.8 M217.6 640.1 L222.8 644.4 M220.2 636.7 L225.4 641 M201.4 658.6 L179.1 668.9 M166.3 664.1 L149.1 652.9 M163.7 668.9 L154.3 663.2 M171.4 676.9 L166.6 694.9 M155.6 711.2 L145.7 716.3 M132.2 730 L128.9 753 M215.1 660.7 L232.2 674.4 M257 661.5 L259 665.5 M259.5 665.8 L262.5 671.5 M237.3 685.5 L239.9 706.9 M245.1 722 L263 736.9 M281 738.3 L298 737.2 M281 744.8 L298 743.7 M308.4 730.9 L316.1 717.2 M306.8 745.4 L317.6 760.3 M264.7 748 L256.1 770.6 M105.3 771.4 L121.7 764.4 M105.3 778.75 L124.1 770.9 M133.4 767.5 L149.8 781.6 M165 794.1 L185 803.4 M204.5 797.2 L210.8 793.3 M228 785.5 L247.5 780.8 M253.4 783.9 L268.6 802.7 M258.75 780.3 L273.3 797.5 M93.1 783.9 L95.9 805.8 M110 818.75 L124.1 820.9 M139.7 812 L152.2 796.4 M166.25 852.7 L185 846.9 M145.3 845.2 L146 846.2" fill="none" stroke="#111" stroke-width="1.5" stroke-linecap="round"/>
<path d="M161.4 780.2 L166.2 767.3 L171.8 770.8 Z" fill="#111"/>
<path d="M187.8 814.8 H192.2 M187.3 819.2 H192.7 M186.8 823.6 H193.2 M186.4 828 H193.6 M186.1 832.8 H193.9" fill="none" stroke="#111" stroke-width="1.6"/>
<path d="M186.8 629.8 L176.5 660.7" fill="none" stroke="#1a861a" stroke-width="1.0"/><path d="M176.5 660.7 L175.9 651.0 L178.5 654.6 L182.8 653.3 Z" fill="#1a861a"/>
<path d="M262.2 662.4 L220.2 656.9" fill="none" stroke="#1a861a" stroke-width="1.0"/><path d="M220.2 656.9 L229.6 654.5 L226.6 657.7 L228.7 661.6 Z" fill="#1a861a"/>
<path d="M264.8 676.1 L247.6 705.2" fill="none" stroke="#1a861a" stroke-width="1.0"/><path d="M247.6 705.2 L249.1 695.6 L250.9 699.6 L255.3 699.3 Z" fill="#1a861a"/>
<path d="M240.8 686.3 L260.5 729.0" fill="none" stroke="#1a861a" stroke-width="1.0"/><path d="M260.5 729.0 L253.5 722.3 L257.8 723.1 L260.0 719.3 Z" fill="#1a861a"/>
<path d="M315.3 712.0 L281.9 733.5" fill="none" stroke="#1a861a" stroke-width="1.0"/><path d="M281.9 733.5 L287.5 725.6 L287.3 730.0 L291.4 731.7 Z" fill="#1a861a"/>
<path d="M242.5 726.0 L249.8 766.7" fill="none" stroke="#1a861a" stroke-width="1.0"/><path d="M249.8 766.7 L244.7 758.5 L248.7 760.3 L251.8 757.2 Z" fill="#1a861a"/>
<path d="M245.2 727.0 L262.5 741.5" fill="none" stroke="#1a861a" stroke-width="1.0"/><path d="M262.5 741.5 L253.3 738.5 L257.5 737.3 L257.9 733.0 Z" fill="#1a861a"/>
<path d="M317.8 767.5 L283.0 746.0" fill="none" stroke="#1a861a" stroke-width="1.0"/><path d="M283.0 746.0 L292.5 747.7 L288.5 749.4 L288.8 753.8 Z" fill="#1a861a"/>
<path d="M246.5 718.0 L270.0 734.5" fill="none" stroke="#1a861a" stroke-width="1.0"/><path d="M270.0 734.5 L260.6 732.3 L264.7 730.8 L264.7 726.4 Z" fill="#1a861a"/>
<path d="M313.0 714.5 L305.5 727.0" fill="none" stroke="#1a861a" stroke-width="1.0"/><path d="M305.5 727.0 L307.0 717.4 L308.8 721.4 L313.2 721.1 Z" fill="#1a861a"/>
<path d="M122.5 736.2 L103.0 763.6" fill="none" stroke="#1a861a" stroke-width="1.0"/><path d="M103.0 763.6 L105.3 754.2 L106.8 758.3 L111.2 758.4 Z" fill="#1a861a"/>
<path d="M126.0 735.0 L125.4 750.5" fill="none" stroke="#1a861a" stroke-width="1.0"/><path d="M125.4 750.5 L122.2 741.4 L125.7 744.0 L129.3 741.6 Z" fill="#1a861a"/>
<path d="M135.0 733.1 L149.1 775.3" fill="none" stroke="#1a861a" stroke-width="1.0"/><path d="M149.1 775.3 L142.8 767.9 L147.0 769.2 L149.7 765.6 Z" fill="#1a861a"/>
<path d="M103.8 780.0 L149.8 787.8" fill="none" stroke="#1a861a" stroke-width="1.0"/><path d="M149.8 787.8 L140.3 789.8 L143.4 786.7 L141.5 782.7 Z" fill="#1a861a"/>
<path d="M104.5 806.6 L123.3 771.4" fill="none" stroke="#1a861a" stroke-width="1.0"/><path d="M123.3 771.4 L122.2 781.0 L120.2 777.1 L115.9 777.6 Z" fill="#1a861a"/>
<path d="M106.9 823.8 L145.2 852.7" fill="none" stroke="#1a861a" stroke-width="1.0"/><path d="M145.2 852.7 L135.8 850.1 L140.0 848.8 L140.2 844.4 Z" fill="#1a861a"/><path d="M106.9 823.8 L116.3 826.3 L112.1 827.7 L111.9 832.0 Z" fill="#1a861a"/>
<path d="M153.0 851.1 L154.5 798.8" fill="none" stroke="#1a861a" stroke-width="1.0"/><path d="M154.5 798.8 L157.8 807.8 L154.3 805.2 L150.6 807.6 Z" fill="#1a861a"/>
<path d="M186.6 837.8 L160.0 798.0" fill="none" stroke="#1a861a" stroke-width="1.0"/><path d="M160.0 798.0 L168.0 803.5 L163.6 803.4 L162.0 807.5 Z" fill="#1a861a"/>
<path d="M183.4 812.8 L161.6 842.5" fill="none" stroke="#1a861a" stroke-width="1.0"/><path d="M161.6 842.5 L164.0 833.1 L165.4 837.3 L169.8 837.4 Z" fill="#1a861a"/><path d="M183.4 812.8 L181.0 822.2 L179.6 818.0 L175.2 817.9 Z" fill="#1a861a"/>
<path d="M189.4 629.8 Q190.5 642.6 200.5 650.6" fill="none" stroke="#1a861a" stroke-width="1.0"/><path d="M200.5 650.6 L191.2 647.7 L195.5 646.5 L195.8 642.1 Z" fill="#1a861a"/>
<path d="M231.0 680.0 Q229.1 694.4 237.0 706.5" fill="none" stroke="#1a861a" stroke-width="1.0"/><path d="M237.0 706.5 L229.1 700.9 L233.5 701.1 L235.1 697.0 Z" fill="#1a861a"/><path d="M231.0 680.0 L233.4 689.4 L230.2 686.4 L226.3 688.5 Z" fill="#1a861a"/>
<path d="M85.8 803.5 Q83.2 795.1 86.5 787.0" fill="none" stroke="#1a861a" stroke-width="1.0"/><path d="M86.5 787.0 L86.4 796.7 L84.0 793.0 L79.7 793.9 Z" fill="#1a861a"/><path d="M85.8 803.5 L79.7 796.0 L83.8 797.3 L86.5 793.8 Z" fill="#1a861a"/>
<path d="M194.0 834.0 Q203.1 825.4 194.2 816.5" fill="none" stroke="#1a861a" stroke-width="1.0"/><path d="M194.2 816.5 L203.1 820.3 L198.8 821.1 L198.0 825.4 Z" fill="#1a861a"/>
<path d="M164.7 856.0 Q177.1 861.0 185.5 850.5" fill="none" stroke="#1a861a" stroke-width="1.0"/><path d="M185.5 850.5 L182.7 859.8 L181.5 855.6 L177.1 855.3 Z" fill="#1a861a"/>
<path d="M262.5 663.0 L256.0 666.0" fill="none" stroke="#1a861a" stroke-width="1.0"/><path d="M256.0 666.0 L259.7 662.1 L259.3 664.5 L261.4 665.7 Z" fill="#1a861a"/>
<text class="ser" x="205.9" y="593.8" font-size="19" fill="#111" transform="scale(0.92,1)">OH</text>
<text class="ser" x="214.2" y="610.1" font-size="14.5" fill="#1a1af0" transform="scale(0.9,1)">23</text>
<text class="ser" x="204.1" y="627.2" font-size="14.5" fill="#2a9a10" transform="scale(0.9,1)">22</text>
<text class="ser" x="246.7" y="634.1" font-size="19" fill="#111" transform="scale(0.92,1)">OH</text>
<text class="ser" x="256.1" y="649.9" font-size="14.5" fill="#1a1af0" transform="scale(0.9,1)">21</text>
<text class="ser" x="225.6" y="658.9" font-size="14.5" fill="#2a9a10" transform="scale(0.9,1)">1S</text>
<text class="ser" x="145.7" y="655.5" font-size="19" fill="#111" transform="scale(0.92,1)">O</text>
<text class="ser" x="153.3" y="671.8" font-size="14.5" fill="#1a1af0" transform="scale(0.9,1)">19</text>
<text class="ser" x="188.6" y="673.8" font-size="14.5" fill="#2a9a10" transform="scale(0.9,1)">5</text>
<text class="ser" x="288.7" y="670.9" font-size="19" fill="#111" transform="scale(0.92,1)">CH</text>
<text class="ser" x="315.5" y="675.5" font-size="13" fill="#111" transform="scale(0.92,1)">3</text>
<text class="ser" x="298.6" y="686.3" font-size="14.5" fill="#2a9a10" transform="scale(0.9,1)">24</text>
<text class="ser" x="259.9" y="683.3" font-size="14.5" fill="#2a9a10" transform="scale(0.9,1)">11R</text>
<text class="ser" x="171.4" y="712.9" font-size="19" fill="#111" transform="scale(0.92,1)">O</text>
<text class="ser" x="179.6" y="727.5" font-size="14.5" fill="#1a1af0" transform="scale(0.9,1)">10</text>
<text class="ser" x="145.1" y="727.5" font-size="14.5" fill="#2a9a10" transform="scale(0.9,1)">15</text>
<text class="ser" x="264.9" y="720.6" font-size="14.5" fill="#2a9a10" transform="scale(0.9,1)">13</text>
<text class="ser" x="342.7" y="713.4" font-size="19" fill="#111" transform="scale(0.92,1)">CH</text>
<text class="ser" x="369.6" y="718" font-size="13" fill="#111" transform="scale(0.92,1)">3</text>
<text class="ser" x="354.1" y="729.7" font-size="14.5" fill="#2a9a10" transform="scale(0.9,1)">25</text>
<text class="ser" x="292.2" y="745.4" font-size="14.5" fill="#2a9a10" transform="scale(0.9,1)">6E</text>
<text class="ser" x="333.2" y="744.2" font-size="14.5" fill="#2a9a10" transform="scale(0.9,1)">20E</text>
<text class="ser" x="139.2" y="765.2" font-size="14.5" fill="#2a9a10" transform="scale(0.9,1)">7</text>
<text class="ser" x="100.6" y="780.3" font-size="14.5" fill="#2a9a10" transform="scale(0.9,1)">12</text>
<text class="ser" x="169.1" y="792.5" font-size="14.5" fill="#2a9a10" transform="scale(0.9,1)">9R</text>
<text class="ser" x="185.0" y="764.7" font-size="19" fill="#111" transform="scale(0.92,1)">H</text>
<text class="ser" x="192.0" y="780.3" font-size="14.5" fill="#2a9a10" transform="scale(0.9,1)">9a</text>
<text class="ser" x="207.0" y="809.7" font-size="14.5" fill="#2a9a10" transform="scale(0.9,1)">4R</text>
<text class="ser" x="231.6" y="792.8" font-size="19" fill="#111" transform="scale(0.92,1)">O</text>
<text class="ser" x="239.4" y="808.1" font-size="14.5" fill="#1a1af0" transform="scale(0.9,1)">3</text>
<text class="ser" x="277.1" y="781.9" font-size="14.5" fill="#2a9a10" transform="scale(0.9,1)">2</text>
<text class="ser" x="294.9" y="812.8" font-size="19" fill="#111" transform="scale(0.92,1)">O</text>
<text class="ser" x="306.2" y="829.2" font-size="14.5" fill="#1a1af0" transform="scale(0.9,1)">18</text>
<text class="ser" x="345.4" y="776.6" font-size="19" fill="#111" transform="scale(0.92,1)">H</text>
<text class="ser" x="356.2" y="792.5" font-size="14.5" fill="#2a9a10" transform="scale(0.9,1)">20a</text>
<text class="ser" x="105.2" y="822.2" font-size="14.5" fill="#2a9a10" transform="scale(0.9,1)">16</text>
<text class="ser" x="137.9" y="828.1" font-size="19" fill="#111" transform="scale(0.92,1)">N</text>
<text class="ser" x="144.8" y="843.3" font-size="14.5" fill="#1a1af0" transform="scale(0.9,1)">8*</text>
<text class="ser" x="166.4" y="858.9" font-size="14.5" fill="#2a9a10" transform="scale(0.9,1)">17</text>
<text class="ser" x="208.7" y="848" font-size="14.5" fill="#2a9a10" transform="scale(0.9,1)">14</text>
</g>
<text x="10.9" y="59.6" font-size="10.5" font-weight="bold" fill="#35359a" textLength="21.8" lengthAdjust="spacingAndGlyphs">Open</text>
<text x="99.5" y="59.6" font-size="10.5" font-weight="bold" fill="#35359a" textLength="30.5" lengthAdjust="spacingAndGlyphs">Process</text>
<text x="225.3" y="59.6" font-size="10.5" font-weight="bold" fill="#35359a" textLength="60" lengthAdjust="spacingAndGlyphs">Peak Detection</text>
<text x="389.2" y="59.6" font-size="10.5" font-weight="bold" fill="#35359a" textLength="34.5" lengthAdjust="spacingAndGlyphs">Interpret</text>
<text x="533.6" y="59.6" font-size="10.5" font-weight="bold" fill="#35359a" textLength="36.3" lengthAdjust="spacingAndGlyphs">Database</text>
<text x="625.1" y="59.6" font-size="10.5" font-weight="bold" fill="#35359a" textLength="26.5" lengthAdjust="spacingAndGlyphs">Report</text>
<text x="663.9" y="59.6" font-size="10.5" font-weight="bold" fill="#35359a" textLength="47.8" lengthAdjust="spacingAndGlyphs">ChemSketch</text>
<text x="1864.3" y="53.2" font-size="10" font-weight="bold" fill="#35359a" textLength="38" lengthAdjust="spacingAndGlyphs">Customer</text>
<text x="1873.3" y="62.5" font-size="10" font-weight="bold" fill="#35359a" textLength="22.5" lengthAdjust="spacingAndGlyphs">Portal</text>
<path d="M1895 24 C1908 26 1906 36 1888 39 C1897 35 1901 28 1893 26 Z" fill="#1a6aa8"/>
<path d="M1872 40 C1859 38 1862 27 1880 24 C1871 28 1866 35 1874 38 Z" fill="#1a6aa8"/>
<circle cx="1879.5" cy="22.5" r="1.6" fill="#1f74b4"/>
<circle cx="1882.5" cy="25.5" r="1.8" fill="#1f74b4"/>
<circle cx="1878.5" cy="26" r="1.2" fill="#1f74b4"/>
<circle cx="1884" cy="32" r="1.8" fill="#1f74b4"/>
<circle cx="1887.5" cy="33.5" r="1.5" fill="#1f74b4"/>
<circle cx="1882.5" cy="35.5" r="1.3" fill="#1f74b4"/>
<circle cx="1886.5" cy="39.5" r="1.8" fill="#1f74b4"/>
<circle cx="1884" cy="42" r="1.2" fill="#1f74b4"/>
<circle cx="1889" cy="41.5" r="1.0" fill="#1f74b4"/>
<circle cx="1881.5" cy="30.5" r="1.0" fill="#1f74b4"/>
<path d="M1914.2 25.6 L1917.8 25.6 L1916 29.5 Z" fill="#2a2a7a"/>
<path d="M9.5 25 l13 -3.5 l2.5 8 l-14 3 z" fill="#fafafa" stroke="#d8d8d8" stroke-width="0.6"/>
<defs><linearGradient id="gFold" x1="0" y1="0" x2="0.6" y2="1"><stop offset="0" stop-color="#fff0b0"/><stop offset="0.55" stop-color="#fbd56a"/><stop offset="1" stop-color="#f0ae2c"/></linearGradient></defs>
<path d="M8 28.5 h6.5 l1.5 1.8 h11.5 v12 h-19.5 z" fill="#eeb240"/>
<path d="M8 31.5 h19.5 v10.8 h-19.5 z" fill="url(#gFold)"/>
<path d="M31.799999999999997 35.3 L34.3 32.3 L36.8 35.3 Z" fill="#111"/>
<path d="M51.3 22 L51.3 46 L52.6 41 L54 39.5 L55.8 38 L58 36.6 L61 35.6 L66 35 L75 34.6 L66 34 L61 33.2 L58 32.2 L55.8 30.8 L54 29.3 L52.6 27.5 Z" fill="#4656c6" fill-opacity="0.8" stroke="#3a48c0" stroke-width="0.6"/>
<path d="M51.5 41 C56 40 58 24 63 24 C68 24 67 39 75 40.5" fill="none" stroke="#e02030" stroke-width="1.3"/>
<ellipse cx="86.5" cy="28.7" rx="4.2" ry="2.8" fill="#2030d8" opacity="0.48"/><ellipse cx="86.5" cy="28.7" rx="2.5" ry="1.7" fill="#2030d8" opacity="0.8"/>
<path d="M84 32 H99 M91.5 24.5 V38" stroke="#e03040" stroke-width="1"/><circle cx="91.5" cy="32" r="1.8" fill="#fff" stroke="#e03040" stroke-width="0.9"/>
<text x="78" y="42.3" font-size="9" fill="#d83040" textLength="12.5" lengthAdjust="spacingAndGlyphs">Ref</text>
<path d="M102.5 35.3 L105 32.3 L107.5 35.3 Z" fill="#111"/>
<path d="M114 24.5 H134 M113 25 V45.5 M115.5 27 V45.5" fill="none" stroke="#7c838c" stroke-width="0.8"/><path d="M119 24.5 c1.5 0 1.5 -3.5 2.5 -3.5 c1 0 1 3.5 2.5 3.5" stroke="#7c838c" stroke-width="0.8" fill="none"/><path d="M113 30 c0 1.5 -3 1.5 -3 2.5 c0 1 3 1 3 2.5" stroke="#7c838c" stroke-width="0.8" fill="none"/>
<path d="M112 32.5 H134 M121.5 24 V46 M129.5 27 V46 M116 40.5 H134" stroke="#e02838" stroke-width="1" stroke-dasharray="1.4 1.2" fill="none"/>
<ellipse cx="128.5" cy="40.5" rx="5.5" ry="2.8" fill="#2838e0" opacity="0.51"/><ellipse cx="128.5" cy="40.5" rx="3.3" ry="1.7" fill="#2838e0" opacity="0.85"/>
<path d="M137.5 35.3 L140 32.3 L142.5 35.3 Z" fill="#111"/>
<path d="M150 24.5 H170 M149 25 V45.5 M151.5 27 V45.5" fill="none" stroke="#7c838c" stroke-width="0.8"/><path d="M155 24.5 c1.5 0 1.5 -3.5 2.5 -3.5 c1 0 1 3.5 2.5 3.5" stroke="#7c838c" stroke-width="0.8" fill="none"/><path d="M149 30 c0 1.5 -3 1.5 -3 2.5 c0 1 3 1 3 2.5" stroke="#7c838c" stroke-width="0.8" fill="none"/>
<path d="M147 32.5 H170 M156.5 24 V46 M164.5 34 V46" stroke="#2030d0" stroke-width="1" stroke-dasharray="1.4 1.2" fill="none"/>
<ellipse cx="163.5" cy="40.5" rx="5.5" ry="2.8" fill="#e02838" opacity="0.51"/><ellipse cx="163.5" cy="40.5" rx="3.3" ry="1.7" fill="#e02838" opacity="0.85"/>
<path d="M152 40.5 H168" stroke="#2030d0" stroke-width="0.9"/>
<circle cx="163.8" cy="28.2" r="5.6" fill="#9a9ca4" stroke="#6e7078" stroke-width="1" stroke-dasharray="2 1.3"/><circle cx="163.8" cy="28.2" r="4.3" fill="#a8aab2"/><circle cx="163.8" cy="28.2" r="2.1" fill="#e8e8ee"/>
<path d="M172.8 35.3 L175.3 32.3 L177.8 35.3 Z" fill="#111"/>
<ellipse cx="195.8" cy="36.8" rx="4.6" ry="2.8" fill="#e02838" opacity="0.48"/><ellipse cx="195.8" cy="36.8" rx="2.8" ry="1.7" fill="#e02838" opacity="0.8"/>
<path d="M193.5 33.5 h4.6 M195.8 33.5 v4 M194 31 h1.2 M196.5 31 h1.2" stroke="#2020c0" stroke-width="1"/>
<ellipse cx="207.3" cy="42.3" rx="4.3" ry="2.6" fill="#2838e0" opacity="0.48"/><ellipse cx="207.3" cy="42.3" rx="2.6" ry="1.6" fill="#2838e0" opacity="0.8"/>
<path d="M205.2 37 h4.4 M207.4 37 v6 M205.5 40 l3.8 3" stroke="#1818c0" stroke-width="1"/>
<circle cx="207" cy="28.5" r="5.4" fill="#9a9ca4" stroke="#6e7078" stroke-width="1" stroke-dasharray="2 1.3"/><circle cx="207" cy="28.5" r="4.1000000000000005" fill="#a8aab2"/><circle cx="207" cy="28.5" r="2.1" fill="#e8e8ee"/>
<ellipse cx="220.7" cy="28.3" rx="4.5" ry="2.7" fill="#e02838" opacity="0.48"/><ellipse cx="220.7" cy="28.3" rx="2.7" ry="1.6" fill="#e02838" opacity="0.8"/>
<path d="M218.4 25 h4.6 M220.7 25 v4.2 M219 22.8 h1.2 M221.4 22.8 h1.2" stroke="#2020c0" stroke-width="1"/>
<circle cx="231.5" cy="27.8" r="5.4" fill="#9a9ca4" stroke="#6e7078" stroke-width="1" stroke-dasharray="2 1.3"/><circle cx="231.5" cy="27.8" r="4.1000000000000005" fill="#a8aab2"/><circle cx="231.5" cy="27.8" r="2.1" fill="#e8e8ee"/>
<path d="M218.5 36.5 h1.2 M221 36.5 h1.2" stroke="#2020c0" stroke-width="1"/>
<path d="M215 45 h4 c1.5 0 1 -7.5 2.2 -7.5 c1.2 0 0.7 7.5 2.2 7.5 h4 c1.5 0 1 -7.5 2.2 -7.5 c1.2 0 0.7 7.5 2.2 7.5 h5" fill="none" stroke="#444" stroke-width="1.1"/>
<rect x="239" y="19" width="24" height="29.5" fill="#ffe28c"/><rect x="239" y="19" width="24" height="12" fill="#ffeeb0" opacity="0.7"/>
<ellipse cx="247.5" cy="32.5" rx="4.6" ry="3" fill="#e02838" opacity="0.48"/><ellipse cx="247.5" cy="32.5" rx="2.8" ry="1.8" fill="#e02838" opacity="0.8"/>
<path d="M245 29.5 h4.8 M247.4 29.5 v4.3 M245.6 27 h1.2 M248.3 27 h1.2" stroke="#2020c0" stroke-width="1"/>
<path d="M248 37.5 H262 M255.8 29 V46" stroke="#555" stroke-width="1"/><circle cx="255.8" cy="37.5" r="1.8" fill="#ffe9a0" stroke="#555" stroke-width="0.9"/>
<path d="M265.8 35.3 L268.3 32.3 L270.8 35.3 Z" fill="#111"/>
<text x="279.3" y="33.5" font-size="9" font-weight="bold" fill="#2030c8" text-anchor="middle">C</text>
<path d="M273.5 30 h2.2 M283 30 h2.2 M279.3 22 v2 M279.3 35.5 v2" stroke="#2030c8" stroke-width="1"/>
<ellipse cx="279.5" cy="40.5" rx="4.5" ry="2.6" fill="#e02838" opacity="0.48"/><ellipse cx="279.5" cy="40.5" rx="2.7" ry="1.6" fill="#e02838" opacity="0.8"/>
<path d="M274 40.8 H297" stroke="#1a1ab8" stroke-width="1.1"/>
<path d="M287 39 L296.5 28.5" stroke="#f2a818" stroke-width="3.4" stroke-linecap="butt"/><path d="M287 39 L289.1 36.7" stroke="#e8d0a0" stroke-width="3"/><path d="M287 39 L287.8 38.2" stroke="#333" stroke-width="1.6"/><path d="M295.4 29.8 L296.5 28.5" stroke="#e06a6a" stroke-width="3.4"/>
<path d="M308.3 21.5 V46.5" stroke="#1a1ab8" stroke-width="1.1"/>
<ellipse cx="307.8" cy="40.3" rx="4.3" ry="2.6" fill="#e02838" opacity="0.48"/><ellipse cx="307.8" cy="40.3" rx="2.6" ry="1.6" fill="#e02838" opacity="0.8"/>
<path d="M311 35.5 L319.5 24.5" stroke="#f2a818" stroke-width="3.4" stroke-linecap="butt"/><path d="M311 35.5 L312.9 33.1" stroke="#e8d0a0" stroke-width="3"/><path d="M311 35.5 L311.7 34.6" stroke="#333" stroke-width="1.6"/><path d="M318.5 25.8 L319.5 24.5" stroke="#e06a6a" stroke-width="3.4"/>
<polygon points="343.3,37.3 338.5,40.1 333.7,37.3 333.7,31.7 338.5,28.9 343.3,31.7" fill="none" stroke="#222" stroke-width="1.2"/>
<polygon points="353.0,37.3 348.2,40.1 343.4,37.3 343.4,31.7 348.2,28.9 353.0,31.7" fill="none" stroke="#222" stroke-width="1.2"/>
<path d="M348.7 28.5 V21.5" stroke="#222" stroke-width="1.2"/>
<path d="M343 36.5 l4.5 4.5 l8 -8.5" fill="none" stroke="#2fb52f" stroke-width="3" stroke-linejoin="round" stroke-linecap="round"/>
<path d="M359.0 35.3 L361.5 32.3 L364.0 35.3 Z" fill="#111"/>
<text x="367.3" y="27.7" font-size="7.5" fill="#2a6ac0" textLength="21.5" lengthAdjust="spacingAndGlyphs">UBV+</text>
<polygon points="383.6,35.4 380.0,37.5 376.4,35.4 376.4,31.2 380.0,29.1 383.6,31.2" fill="none" stroke="#333" stroke-width="1.1"/>
<polygon points="380.1,42.8 376.5,44.9 372.9,42.8 372.9,38.6 376.5,36.5 380.1,38.6" fill="none" stroke="#333" stroke-width="1.1"/>
<path d="M380 44 l3.5 2" stroke="#333" stroke-width="1.1"/>
<path d="M393.0 35.3 L395.5 32.3 L398.0 35.3 Z" fill="#111"/>
<ellipse cx="406.8" cy="36.5" rx="4.5" ry="2.8" fill="#e02838" opacity="0.48"/><ellipse cx="406.8" cy="36.5" rx="2.7" ry="1.7" fill="#e02838" opacity="0.8"/>
<path d="M404.5 33.5 h4.6 M406.8 33.5 v4 M405 31 h1.2 M407.6 31 h1.2" stroke="#2020c0" stroke-width="1"/>
<path d="M408 37 L413.5 31.5" stroke="#e02020" stroke-width="1.2"/><circle cx="413.8" cy="31" r="1.6" fill="#28b428"/>
<polygon points="423.2,30.5 418.5,33.2 413.8,30.5 413.8,25.1 418.5,22.4 423.2,25.1" fill="none" stroke="#222" stroke-width="1.2"/>
<ellipse cx="417.8" cy="43.3" rx="4.6" ry="2.5" fill="#2838e0" opacity="0.48"/><ellipse cx="417.8" cy="43.3" rx="2.8" ry="1.5" fill="#2838e0" opacity="0.8"/>
<path d="M427.0 35.3 L429.5 32.3 L432.0 35.3 Z" fill="#111"/>
<rect x="435" y="20.5" width="19.5" height="25" fill="#d9e2f1"/><path d="M449.5 20.5 l5 5 h-5 z" fill="#b9c6dc"/>
<polygon points="449.7,37.0 444.5,40.0 439.3,37.0 439.3,31.0 444.5,28.0 449.7,31.0" fill="none" stroke="#222" stroke-width="1.2"/>
<path d="M439.5 41 L455.5 22.5" stroke="#f2a818" stroke-width="3.4" stroke-linecap="butt"/><path d="M439.5 41 L443.0 36.9" stroke="#e8d0a0" stroke-width="3"/><path d="M439.5 41 L440.8 39.5" stroke="#333" stroke-width="1.6"/><path d="M453.6 24.7 L455.5 22.5" stroke="#e06a6a" stroke-width="3.4"/>
<ellipse cx="464.8" cy="36.3" rx="4.4" ry="2.7" fill="#e02838" opacity="0.44999999999999996"/><ellipse cx="464.8" cy="36.3" rx="2.6" ry="1.6" fill="#e02838" opacity="0.75"/>
<ellipse cx="475.8" cy="42.5" rx="4.6" ry="2.6" fill="#2838e0" opacity="0.44999999999999996"/><ellipse cx="475.8" cy="42.5" rx="2.8" ry="1.6" fill="#2838e0" opacity="0.75"/>
<rect x="469.5" y="23.5" width="10.5" height="7" rx="1" fill="#f4f6fb" stroke="#6a78c8" stroke-width="1"/><path d="M471.5 30.5 l-1 3 l3.5 -3" fill="#f4f6fb" stroke="#6a78c8" stroke-width="0.9"/><path d="M471 26 h7.5 M471 28 h7.5" stroke="#b0b8d8" stroke-width="0.8"/>
<path d="M499.0 23.5 l5 -1.5 l3.5 4 l-5.5 11 l-7 -2.5 z" fill="#6e727a"/><path d="M506.5 25.5 l5.5 -0.5 l4 6.5 l-3.5 12.5 l-7.5 -1.5 z" fill="#4e525a"/><path d="M500.0 24 l3.5 -1 l2 2.3 l-3.6 1.2 z" fill="#a4a8b0"/><path d="M507.5 26 l4 -0.4 l1.8 2.8 l-4 0.8 z" fill="#8a8e96"/><ellipse cx="497.8" cy="35.5" rx="3.9" ry="3.2" fill="#8c9cf4" stroke="#565a62" stroke-width="1.3" transform="rotate(20 497.8 35.5)"/><ellipse cx="508.8" cy="43" rx="4.2" ry="3.4" fill="#8c9cf4" stroke="#44484e" stroke-width="1.3" transform="rotate(20 508.8 43)"/><path d="M503.5 29 l4 1.5" stroke="#3c4046" stroke-width="2"/>
<path d="M518.8 35.3 L521.3 32.3 L523.8 35.3 Z" fill="#111"/>
<polygon points="543.4,34.2 536.0,38.5 528.6,34.2 528.6,25.8 536.0,21.5 543.4,25.7" fill="none" stroke="#1a70b8" stroke-width="1.1"/>
<polygon points="541.2,33.0 536.0,36.0 530.8,33.0 530.8,27.0 536.0,24.0 541.2,27.0" fill="none" stroke="#1a70b8" stroke-width="0.8"/>
<path d="M535.5 25.0 l5 -1.5 l3.5 4 l-5.5 11 l-7 -2.5 z" fill="#6e727a"/><path d="M543 27.0 l5.5 -0.5 l4 6.5 l-3.5 12.5 l-7.5 -1.5 z" fill="#4e525a"/><path d="M536.5 25.5 l3.5 -1 l2 2.3 l-3.6 1.2 z" fill="#a4a8b0"/><path d="M544 27.5 l4 -0.4 l1.8 2.8 l-4 0.8 z" fill="#8a8e96"/><ellipse cx="534.3" cy="37.0" rx="3.9" ry="3.2" fill="#8c9cf4" stroke="#565a62" stroke-width="1.3" transform="rotate(20 534.3 37.0)"/><ellipse cx="545.3" cy="44.5" rx="4.2" ry="3.4" fill="#8c9cf4" stroke="#44484e" stroke-width="1.3" transform="rotate(20 545.3 44.5)"/><path d="M540 30.5 l4 1.5" stroke="#3c4046" stroke-width="2"/>
<path d="M552.8 35.3 L555.3 32.3 L557.8 35.3 Z" fill="#111"/>
<path d="M561.8 40.1 v4.2 c0 3.3 17.5 3.3 17.5 0 v-4.2 z" fill="#a4a0d0"/><ellipse cx="570.55" cy="40.1" rx="8.75" ry="2.6" fill="#d4d2ee" stroke="#b8b6dc" stroke-width="0.5"/><path d="M561.8 34.9 v4.2 c0 3.3 17.5 3.3 17.5 0 v-4.2 z" fill="#a4a0d0"/><ellipse cx="570.55" cy="34.9" rx="8.75" ry="2.6" fill="#d4d2ee" stroke="#b8b6dc" stroke-width="0.5"/><path d="M561.8 29.7 v4.2 c0 3.3 17.5 3.3 17.5 0 v-4.2 z" fill="#a4a0d0"/><ellipse cx="570.55" cy="29.7" rx="8.75" ry="2.6" fill="#d4d2ee" stroke="#b8b6dc" stroke-width="0.5"/><path d="M561.8 24.5 v4.2 c0 3.3 17.5 3.3 17.5 0 v-4.2 z" fill="#a4a0d0"/><ellipse cx="570.55" cy="24.5" rx="8.75" ry="2.6" fill="#d4d2ee" stroke="#b8b6dc" stroke-width="0.5"/><rect x="563.8" y="24.5" width="3.5" height="21" fill="#fff" opacity="0.35"/>
<path d="M583.5 40.1 v4.2 c0 3.3 17.5 3.3 17.5 0 v-4.2 z" fill="#a4a0d0"/><ellipse cx="592.25" cy="40.1" rx="8.75" ry="2.6" fill="#d4d2ee" stroke="#b8b6dc" stroke-width="0.5"/><path d="M583.5 34.9 v4.2 c0 3.3 17.5 3.3 17.5 0 v-4.2 z" fill="#a4a0d0"/><ellipse cx="592.25" cy="34.9" rx="8.75" ry="2.6" fill="#d4d2ee" stroke="#b8b6dc" stroke-width="0.5"/><path d="M583.5 29.7 v4.2 c0 3.3 17.5 3.3 17.5 0 v-4.2 z" fill="#a4a0d0"/><ellipse cx="592.25" cy="29.7" rx="8.75" ry="2.6" fill="#d4d2ee" stroke="#b8b6dc" stroke-width="0.5"/><path d="M583.5 24.5 v4.2 c0 3.3 17.5 3.3 17.5 0 v-4.2 z" fill="#a4a0d0"/><ellipse cx="592.25" cy="24.5" rx="8.75" ry="2.6" fill="#d4d2ee" stroke="#b8b6dc" stroke-width="0.5"/><rect x="585.5" y="24.5" width="3.5" height="21" fill="#fff" opacity="0.35"/>
<path d="M592 40.5 h11.5 M597.7 34.5 v12" stroke="#2db82d" stroke-width="3.6"/>
<path d="M605.5 35.3 L608 32.3 L610.5 35.3 Z" fill="#111"/>
<path d="M624 21.5 h15 l6.5 6.5 v17.5 h-21.5 z" fill="#fafbfd" stroke="#d0d4dc" stroke-width="0.8"/><path d="M639 21.5 v6.5 h6.5 z" fill="#dfe3ec"/>
<rect x="626" y="21.8" width="12" height="2.2" fill="#8c8cf0"/>
<path d="M626.5 39 h3 l1.5 -10 l1.5 10 h2 l1.2 -5 l1.2 5 h4.5" fill="none" stroke="#555" stroke-width="0.9"/><path d="M626.5 41.5 h16 M626.5 43.2 h16" stroke="#c8ccd4" stroke-width="0.8"/>
<path d="M649.2 35.3 L651.7 32.3 L654.2 35.3 Z" fill="#111"/>
<rect x="681.5" y="22.5" width="17.5" height="17" fill="#e8f0ff" stroke="#2a3ad0" stroke-width="1.1"/>
<polygon points="695.9,30.1 692.8,31.9 689.7,30.1 689.7,26.5 692.8,24.7 695.9,26.5" fill="none" stroke="#222" stroke-width="1.1"/>
<path d="M684 35.5 c3 3.5 8 3.5 11.5 0.5" fill="none" stroke="#2038d0" stroke-width="1.3"/><path d="M683.5 24.5 l3.5 1 l-3 1.5 z" fill="#2038d0"/>
<path d="M677.5 27 h5 M677.5 29.5 h5 M678 32 h4" stroke="#e03030" stroke-width="1.3"/>
<path d="M679.3 33 h2.4 v5 l1.3 2.5 v6 h-5 v-6 l1.3 -2.5 z" fill="#d82020"/>
<rect x="676" y="42.5" width="24" height="4.5" fill="#f8b018"/><path d="M684 42.5 v2 M686.5 42.5 v2 M689 42.5 v2 M691.5 42.5 v2 M694 42.5 v2 M696.5 42.5 v2" stroke="#e04010" stroke-width="0.8"/>
<path d="M5 77 h5 l1.5 1.5 h8.5 v8 h-15 z" fill="#e02030"/><path d="M5 81 h15 v5.5 h-15 z" fill="#f05060"/><rect x="5" y="85" width="15" height="1.5" fill="#b01020"/>
<path d="M14.5 76.5 L21.5 71 M17.5 70.5 h4.5 v4.5" fill="none" stroke="#2a3ae0" stroke-width="1.4"/>
<rect x="29.5" y="72.2" width="14.0" height="14.0" fill="#1a22d8"/><rect x="32.5" y="73.2" width="8.0" height="5.0" fill="#c8d0ff"/><path d="M33.5 74.7 h6.0 M33.5 76.7 h6.0" stroke="#1a22d8" stroke-width="0.9"/><rect x="33.5" y="81.2" width="6.5" height="5.0" fill="#a8b4ff"/><rect x="34.5" y="82.2" width="2.0" height="3.5" fill="#1a22d8"/>
<rect x="56.5" y="71" width="10.92" height="10.92" fill="#1a22d8"/><rect x="58.84" y="71.78" width="6.24" height="3.9000000000000004" fill="#c8d0ff"/><path d="M59.62 72.95 h4.68 M59.62 74.51 h4.68" stroke="#1a22d8" stroke-width="0.7020000000000001"/><rect x="59.62" y="78.02" width="5.07" height="3.9000000000000004" fill="#a8b4ff"/><rect x="60.4" y="78.8" width="1.56" height="2.73" fill="#1a22d8"/>
<rect x="54.5" y="73" width="10.92" height="10.92" fill="#1a22d8"/><rect x="56.84" y="73.78" width="6.24" height="3.9000000000000004" fill="#c8d0ff"/><path d="M57.62 74.95 h4.68 M57.62 76.51 h4.68" stroke="#1a22d8" stroke-width="0.7020000000000001"/><rect x="57.62" y="80.02" width="5.07" height="3.9000000000000004" fill="#a8b4ff"/><rect x="58.4" y="80.8" width="1.56" height="2.73" fill="#1a22d8"/>
<rect x="52.5" y="75" width="10.92" height="10.92" fill="#1a22d8"/><rect x="54.84" y="75.78" width="6.24" height="3.9000000000000004" fill="#c8d0ff"/><path d="M55.62 76.95 h4.68 M55.62 78.51 h4.68" stroke="#1a22d8" stroke-width="0.7020000000000001"/><rect x="55.62" y="82.02" width="5.07" height="3.9000000000000004" fill="#a8b4ff"/><rect x="56.4" y="82.8" width="1.56" height="2.73" fill="#1a22d8"/>
<rect x="73" y="69" width="1" height="20" fill="#a9bfe6"/><rect x="74" y="69" width="1" height="20" fill="#eef4fd" opacity="0.7"/>
<path d="M82.0 77.0 C87.5 72.5 93.0 77.5 88.0 86.0" fill="none" stroke="#d82038" stroke-width="2.6" stroke-linecap="round"/><path d="M80.0 74.0 L81.0 81.0 L87.0 77.0 Z" fill="#e02840"/>
<path d="M114.0 77.0 C108.5 72.5 103.0 77.5 108.0 86.0" fill="none" stroke="#c4c4c4" stroke-width="2.6" stroke-linecap="round"/><path d="M116.0 74.0 L115.0 81.0 L109.0 77.0 Z" fill="#d0d0d0"/>
<rect x="130.5" y="71.5" width="12" height="10" fill="none" stroke="#1818e0" stroke-width="1.1" stroke-dasharray="1.2 1.2"/>
<circle cx="139.5" cy="80.5" r="4.3" fill="#fff" stroke="#1818e0" stroke-width="1.3"/><path d="M142.5 83.5 L147.6 88.6" stroke="#1818e0" stroke-width="2.2" stroke-linecap="round"/><path d="M137.2 80.5 H141.8 M139.5 78.2 V82.8" stroke="#1818e0" stroke-width="1.1"/>
<path d="M158 73 C163 68 170 72 166 80" fill="none" stroke="#d03048" stroke-width="2.6"/><path d="M156.5 70.5 L157.5 77 L163 74 Z" fill="#d82840"/>
<circle cx="161.5" cy="80.5" r="4.3" fill="#fff" stroke="#1818e0" stroke-width="1.3"/><path d="M164.5 83.5 L169.6 88.6" stroke="#1818e0" stroke-width="2.2" stroke-linecap="round"/><path d="M159.2 80.5 H163.8 M161.5 78.2 V82.8" stroke="#1818e0" stroke-width="1.1"/>
<rect x="176" y="69" width="1" height="20" fill="#a9bfe6"/><rect x="177" y="69" width="1" height="20" fill="#eef4fd" opacity="0.7"/>
<circle cx="187.2" cy="77.5" r="4.4" fill="#fff" stroke="#c8c8c8" stroke-width="1.3"/><path d="M190.3 80.6 L195.4 85.7" stroke="#c0c0c0" stroke-width="2.2" stroke-linecap="round"/><path d="M184.89999999999998 77.5 H189.5" stroke="#c8c8c8" stroke-width="1.1"/>
<rect x="202" y="69" width="1" height="20" fill="#a9bfe6"/><rect x="203" y="69" width="1" height="20" fill="#eef4fd" opacity="0.7"/>
<circle cx="212.5" cy="78.5" r="4.6" fill="#fff" stroke="#1818e0" stroke-width="1.3"/><path d="M215.7 81.7 L220.9 86.9" stroke="#1818e0" stroke-width="2.2" stroke-linecap="round"/><path d="M210.2 78.5 H214.8 M212.5 76.2 V80.8" stroke="#1818e0" stroke-width="1.1"/>
<rect x="207" y="70.3" width="1.5" height="1.5" fill="#1818e0"/><rect x="223.5" y="70.3" width="1.5" height="1.5" fill="#1818e0"/><rect x="207" y="86.5" width="1.5" height="1.5" fill="#1818e0"/><rect x="223.5" y="86.5" width="1.5" height="1.5" fill="#1818e0"/>
<path d="M230 77 h5 M233 75 l2.5 2 l-2.5 2 M247.5 77 h-5 M244.5 75 l-2.5 2 l2.5 2" fill="none" stroke="#e02020" stroke-width="1"/>
<text x="237" y="76.5" font-size="8" font-weight="bold" fill="#e02020">J</text><rect x="242" y="73.5" width="1.2" height="3" fill="#e02020"/>
<path d="M231.1 84.5 H237.9 M234.5 81.1 V87.9" stroke="#2048f0" stroke-width="1.1"/><circle cx="234.5" cy="84.5" r="1.2" fill="#30a0f0"/>
<path d="M240.4 84.5 H247.20000000000002 M243.8 81.1 V87.9" stroke="#2048f0" stroke-width="1.1"/><circle cx="243.8" cy="84.5" r="1.2" fill="#30a0f0"/>
<rect x="255.5" y="68.5" width="22.5" height="22" fill="#f6f0dc" stroke="#8da2c8" stroke-width="1"/>
<rect x="258.5" y="71.5" width="16" height="3.2" fill="none" stroke="#2020d0" stroke-width="1.1"/><path d="M260.5 73.1 h12" stroke="#e02020" stroke-width="1" stroke-dasharray="2.5 1.2"/>
<path d="M274.5 74.5 L269 80" stroke="#2020d0" stroke-width="1.1"/>
<path d="M258.6 84.8 H265.4 M262 81.39999999999999 V88.2" stroke="#2048f0" stroke-width="1.1"/><circle cx="262" cy="84.8" r="1.2" fill="#30a0f0"/>
<path d="M266.1 79.8 H272.9 M269.5 76.39999999999999 V83.2" stroke="#2048f0" stroke-width="1.1"/><circle cx="269.5" cy="79.8" r="1.2" fill="#30a0f0"/>
<path d="M280.8 76.6 L287.2 76.6 L284 80.5 Z" fill="#0a0a6a"/>
<rect x="294" y="74.5" width="15" height="12.5" fill="#eef2ff" stroke="#2020c0" stroke-width="1.2"/><rect x="299.5" y="70.5" width="11.5" height="4" fill="#fff" stroke="#e02020" stroke-width="1.1"/>
<path d="M296 84.5 h2.5 l1.5 -5 l1.5 5 h1 l1.2 -3 l1.2 3 h2" fill="none" stroke="#2020c0" stroke-width="0.9"/>
<rect x="315.5" y="68.5" width="22" height="22" fill="#f6f0dc" stroke="#8da2c8" stroke-width="1"/>
<polygon points="328.0,82.8 324.0,85.1 320.0,82.8 320.0,78.2 324.0,75.9 328.0,78.2" fill="none" stroke="#2020d0" stroke-width="1.1"/>
<rect x="328.5" y="73" width="6" height="5" fill="#fff" stroke="#e02020" stroke-width="1"/><path d="M321 72 l3 4 M330 85 l3 2" stroke="#2020d0" stroke-width="1" stroke-dasharray="1 1"/>
<rect x="340.5" y="68.5" width="21.5" height="22" fill="#f6f0dc" stroke="#8da2c8" stroke-width="1"/>
<rect x="342.5" y="70.5" width="15" height="11" fill="#fff" stroke="#2020d0" stroke-width="1"/><rect x="342.5" y="70.5" width="15" height="3" fill="#4a6af0"/><path d="M342.5 76.5 h15 M342.5 79 h15 M347.5 73.5 v8 M352.5 73.5 v8" stroke="#8090e0" stroke-width="0.7"/>
<rect x="346.5" y="82.5" width="5" height="3" fill="#fff" stroke="#e02020" stroke-width="0.9"/><path d="M359 79.5 v5 h-5 m2 -1.8 l-2 1.8 l2 1.8" fill="none" stroke="#2020d0" stroke-width="1"/>
<path d="M342 88.5 h3 l1 -2 l1 2 h2 l1 -1.5 l1 1.5 h2 l1 -2 l1 2 h4" fill="none" stroke="#444" stroke-width="0.9"/>
<path d="M364.8 76.6 L371.2 76.6 L368 80.5 Z" fill="#0a0a6a"/>
<rect x="377" y="69" width="1" height="20" fill="#a9bfe6"/><rect x="378" y="69" width="1" height="20" fill="#eef4fd" opacity="0.7"/>
<path d="M382 71.5 h5 M382 88 h5 M384.5 71.5 V88 M382.8 73.5 l1.7 -2 l1.7 2 M382.8 86 l1.7 2 l1.7 -2" fill="none" stroke="#d82020" stroke-width="1"/>
<path d="M380.5 85 h6.5 c1.2 0 1 -13 2 -13 c1 0 0.8 13 2 13 h6" fill="none" stroke="#1a1ad0" stroke-width="1.2"/>
<circle cx="393.5" cy="75" r="3.6" fill="#3a4ae8"/><path d="M390.5 74.5 h6 M390.5 76.5 h6" stroke="#c0c8ff" stroke-width="0.9"/><path d="M391 81.5 h4 M393 79.8 v3.4" stroke="#e02020" stroke-width="1"/>
<text x="447.3" y="82" font-size="8.7" transform="scale(0.92,1)">From</text>
<rect x="430.5" y="73.5" width="31.5" height="11.5" fill="#fff" stroke="#8a9cc0" stroke-width="1"/><text x="469.6" y="82.3" font-size="8.7" transform="scale(0.92,1)">1.618</text><rect x="453.5" y="74" width="8" height="10.5" fill="#fff"/><path d="M454.5 78.25 l3.2 -3.6 l3.2 3.6 Z M454.5 80.25 l3.2 3.6 l3.2 -3.6 Z" fill="#111"/>
<text x="508.7" y="82" font-size="8.7" transform="scale(0.92,1)">To</text>
<rect x="477.5" y="73.5" width="31" height="11.5" fill="#fff" stroke="#8a9cc0" stroke-width="1"/><text x="520.7" y="82.3" font-size="8.7" transform="scale(0.92,1)">95</text><rect x="500" y="74" width="8" height="10.5" fill="#fff"/><path d="M501 78.25 l3.2 -3.6 l3.2 3.6 Z M501 80.25 l3.2 3.6 l3.2 -3.6 Z" fill="#111"/>
<path d="M515.5 80.5 h5" stroke="#111" stroke-width="1"/>
<path d="M515.4 82.6 L520.6 82.6 L518 86.5 Z" fill="#111"/>
<text x="1746.2" y="82" font-size="8.7" transform="scale(0.92,1)">Spectra</text>
<rect x="1635.0" y="73.0" width="24" height="12" fill="#fff" stroke="#8a9cc0" stroke-width="1"/><text x="1778.8" y="82.3" font-size="8.7" transform="scale(0.92,1)">2</text><rect x="1650.5" y="73.5" width="8" height="11" fill="#fff"/><path d="M1651.5 78.0 l3.2 -3.6 l3.2 3.6 Z M1651.5 80.0 l3.2 3.6 l3.2 -3.6 Z" fill="#111"/>
<rect x="1665.5" y="69.5" width="28" height="19" fill="#f4f6ff" stroke="#1818d8" stroke-width="1"/><path d="M1673.5 69.5 v19 M1673.5 82 h20" stroke="#1818d8" stroke-width="1"/>
<path d="M1667 72 h4.5 M1667 75 h4.5 M1667 78 h4.5 M1667 84 h4.5 M1667 86.5 h4.5" stroke="#1818d8" stroke-width="1" stroke-dasharray="1.5 1"/>
<path d="M1674.5 80.5 h3.6 l1.8 -8 l1.8 8 h2.7 l1.4 -5.2 l1.4 5.2 h5.2" fill="none" stroke="#1818d8" stroke-width="1"/>
<path d="M1681 87.3 h2.4 l1.2 -3.5 l1.2 3.5 h1.8 l1.0 -2.3 l1.0 2.3 h3.5" fill="none" stroke="#1818d8" stroke-width="0.8"/>
<path d="M1674.5 87 q2 -4 3.5 -1 t3 0" fill="none" stroke="#2a8a2a" stroke-width="0.8"/>
<rect x="1698" y="69" width="1" height="20" fill="#a9bfe6"/><rect x="1699" y="69" width="1" height="20" fill="#eef4fd" opacity="0.7"/>
<rect x="1703.5" y="71.5" width="15.5" height="14.5" rx="1.5" fill="#f4f6ff" stroke="#1818d8" stroke-width="1.2"/><path d="M1703.5 76.3 h15.5 M1703.5 81.2 h15.5" stroke="#1818d8" stroke-width="1.2"/>
<rect x="1723.5" y="68.5" width="21.5" height="22" fill="#e9eef8" stroke="#8da2c8" stroke-width="1"/>
<rect x="1726" y="70.5" width="17" height="8" rx="2" fill="#fff" stroke="#1818d8" stroke-width="1"/><rect x="1726" y="80.5" width="17" height="8" rx="2" fill="#fff" stroke="#1818d8" stroke-width="1"/>
<path d="M1727 77 h3.0 l1.5 -4.5 l1.5 4.5 h2.2 l1.2 -2.9 l1.2 2.9 h4.3" fill="none" stroke="#1818d8" stroke-width="1"/>
<path d="M1727.5 87.5 h3 v-4 h1.2 v4 h4 v-4.5 h1.2 v4.5 h5" fill="none" stroke="#1818d8" stroke-width="1"/>
<path d="M1748.5 88.5 v-16 l2 -2.5 h7 l2 2.5 h6.5 v16 z" fill="#eef2ff" stroke="#1818d8" stroke-width="1.1"/><path d="M1750.5 86.5 h3 v-8 h1.5 v8 h3 v-5.5 h1.5 v5.5 h2 v-3 h1.3 v3 h1.5" fill="none" stroke="#1818d8" stroke-width="1.1"/>
<rect x="1770" y="69" width="1" height="20" fill="#a9bfe6"/><rect x="1771" y="69" width="1" height="20" fill="#eef4fd" opacity="0.7"/>
<rect x="1773.5" y="68.5" width="22.5" height="22" fill="#f6f0dc" stroke="#a8b8d8" stroke-width="1"/><rect x="1776" y="78" width="15" height="9.5" fill="#f4f6ff" stroke="#1818d8" stroke-width="1.1"/><path d="M1782 77.5 h3.5 c1 0 0.6 -6.5 1.6 -6.5 c1 0 0.6 4.5 1.6 4.5 h1.2 c1 0 0.6 -3 1.4 -3 c0.8 0 0.5 3 1.4 3 h1.5" fill="none" stroke="#1818d8" stroke-width="1"/><path d="M1780.5 73.5 v6" stroke="#1818d8" stroke-width="1"/><path d="M1778 79 h5 l-2.5 3 z" fill="#1818d8"/>
<rect x="1799" y="78" width="15" height="9.5" fill="#f4f6ff" stroke="#1818d8" stroke-width="1.1" stroke-dasharray="1.5 1"/><path d="M1805 77.5 h3.5 c1 0 0.6 -6.5 1.6 -6.5 c1 0 0.6 4.5 1.6 4.5 h1.2 c1 0 0.6 -3 1.4 -3 c0.8 0 0.5 3 1.4 3 h1.5" fill="none" stroke="#1818d8" stroke-width="1" stroke-dasharray="1.5 1"/><path d="M1803.5 73.5 v6" stroke="#1818d8" stroke-width="1"/><path d="M1801 79 h5 l-2.5 3 z" fill="#1818d8"/><path d="M1801 85.5 h2.5 v-2.5 h1 v2.5 h3 v-2 h1 v2 h3" fill="none" stroke="#1818d8" stroke-width="0.9"/>
<rect x="1822" y="78" width="15" height="9.5" fill="#f4f6ff" stroke="#1818d8" stroke-width="1.1" stroke-dasharray="1.5 1"/><path d="M1828 77.5 h3.5 c1 0 0.6 -6.5 1.6 -6.5 c1 0 0.6 4.5 1.6 4.5 h1.2 c1 0 0.6 -3 1.4 -3 c0.8 0 0.5 3 1.4 3 h1.5" fill="none" stroke="#1818d8" stroke-width="1" stroke-dasharray="1.5 1"/><path d="M1826.5 73.5 v6" stroke="#1818d8" stroke-width="1"/><path d="M1824 79 h5 l-2.5 3 z" fill="#1818d8"/><path d="M1824 85.5 h2.5 v-2.5 h1 v2.5 h3 v-2 h1 v2 h3" fill="none" stroke="#1818d8" stroke-width="0.9"/><path d="M1830 80.5 l6 6 M1836 80.5 l-6 6" stroke="#e02020" stroke-width="1.4"/>
<rect x="1843" y="69" width="1" height="20" fill="#a9bfe6"/><rect x="1844" y="69" width="1" height="20" fill="#eef4fd" opacity="0.7"/>
<rect x="1846.5" y="68.5" width="22" height="22" fill="#e9eef8" stroke="#a8b8d8" stroke-width="1"/>
<rect x="1869.0" y="68.5" width="11" height="22" fill="#f6f0dc" stroke="#a8b8d8" stroke-width="1"/>
<path d="M1850 71.5 v16 M1866 71.5 v16 M1850 71.5 h1.5 M1850 87.5 h1.5 M1864.5 71.5 h1.5 M1864.5 87.5 h1.5" stroke="#1818d8" stroke-width="1" stroke-dasharray="1.3 1" fill="none"/>
<path d="M1848 82.5 h4.5 c1 0 0.7 -7 1.8 -7 c1.1 0 0.8 7 1.8 7 h2 c1 0 0.7 -9 1.8 -9 c1.1 0 0.8 9 1.8 9 h4.5" fill="none" stroke="#1818d8" stroke-width="1.1"/><path d="M1851 87.2 h14 M1852.5 86 l-1.5 1.2 l1.5 1.2 M1863.5 86 l1.5 1.2 l-1.5 1.2" fill="none" stroke="#1818d8" stroke-width="0.8"/>
<path d="M1871.1 76.8 L1877.9 76.8 L1874.5 80.7 Z" fill="#0a0a6a"/>
<path d="M1885.1 76.8 L1891.5 76.8 L1888.3 80.7 Z" fill="#0a0a6a"/>
<rect x="1895.5" y="69.5" width="19.5" height="19" rx="1.5" fill="#dce6ff" stroke="#2038e0" stroke-width="1.3"/><rect x="1900" y="73.5" width="11" height="11" fill="#2a55f5"/><rect x="1902" y="76.5" width="7" height="5.5" fill="#6f9cff"/>
<path d="M4 401 l12 -5.5 l7 3.5 l-12 6 z" fill="#2a3ae0"/><path d="M4 401 v3 l7 4 v-3 z" fill="#1a22b0"/><path d="M11 405 v3 l12 -6 v-3 z" fill="#4a5af0"/><path d="M7 401 l8 -3.7 M9.5 402.3 l8 -3.7" stroke="#c0c8ff" stroke-width="1"/>
<path d="M20 393 l3 -2.5 h8.5 v13 h-11.5 z" fill="#fff" stroke="#e02020" stroke-width="1.3"/><path d="M22.5 399 h6.5 M22.5 401 h6.5 M22.5 403 h6.5" stroke="#888" stroke-width="0.9"/><path d="M23 396.5 q2 -4 3 -1 t3 -1.5" fill="none" stroke="#2020c0" stroke-width="1.2"/>
<rect x="37.5" y="391" width="1" height="20" fill="#a9bfe6"/><rect x="38.5" y="391" width="1" height="20" fill="#eef4fd" opacity="0.7"/>
<path d="M46.0 398.5 C51.5 394 57.0 399 52.0 407.5" fill="none" stroke="#d82038" stroke-width="2.6" stroke-linecap="round"/><path d="M44.0 395.5 L45.0 402.5 L51.0 398.5 Z" fill="#e02840"/>
<path d="M78.0 398.5 C72.5 394 67.0 399 72.0 407.5" fill="none" stroke="#c4c4c4" stroke-width="2.6" stroke-linecap="round"/><path d="M80.0 395.5 L79.0 402.5 L73.0 398.5 Z" fill="#d0d0d0"/>
<rect x="86" y="391" width="1" height="20" fill="#a9bfe6"/><rect x="87" y="391" width="1" height="20" fill="#eef4fd" opacity="0.7"/>
<rect x="89.5" y="389.5" width="22.5" height="23" fill="#f6f0dc" stroke="#8da2c8" stroke-width="1"/>
<polygon points="106.4,396.7 103.5,398.4 100.6,396.7 100.6,393.3 103.5,391.6 106.4,393.3" fill="none" stroke="#2020d0" stroke-width="1.1"/>
<path d="M106.5 393 l3 -2" stroke="#2020d0" stroke-width="1"/><path d="M103.5 399 L98 405" stroke="#e02020" stroke-width="1.1"/><path d="M97 406 l1 -3.5 l2.3 2.2 z" fill="#e02020"/>
<rect x="101.5" y="398.3" width="4" height="1.6" fill="#20b020"/><rect x="97" y="406.3" width="2.5" height="3" fill="#20b020"/>
<path d="M92 410 h2 v-9 h1.3 v9 h3 v-4 h1.3 v4 h3 v-3 h1.3 v3 h2 v-6 h1.3 v6 h2" fill="none" stroke="#333" stroke-width="1.1"/>
<rect x="114" y="391" width="1" height="20" fill="#a9bfe6"/><rect x="115" y="391" width="1" height="20" fill="#eef4fd" opacity="0.7"/>
<circle cx="127.5" cy="400.5" r="5" fill="#3a48e8"/><circle cx="126" cy="399" r="2" fill="#7a88ff" opacity="0.7"/><path d="M129.5 402.5 l6.5 2.5 l-2.6 0.8 l2.6 3 l-1.3 1 l-2.6 -3 l-1.4 2.2 z" fill="#d81818"/>
<path d="M143 403.5 h8 l2 -2" fill="none" stroke="#222" stroke-width="1.3"/><path d="M152.5 402 l5.5 -10.5 l2.5 1.2 l-5.5 10.5 z" fill="#2a3ae0"/><path d="M153.5 399.5 l2.5 1.2" stroke="#fff" stroke-width="1"/><path d="M156 411 l5 -5 v5 z" fill="#fff"/>
<path d="M172 402 l5 -8 l5.5 3 l-5 8.5 z" fill="#3a4ae0"/><path d="M177 394 l3 -2 l4.5 2.5 l-2 2.5 z" fill="#888"/><path d="M172 402 l-1 3.5 l5 3 l1.5 -3 z" fill="#e03030"/><path d="M163 403.5 h9 v3 h-9z" fill="#fff" opacity="0.9"/>
<text x="193" y="404" font-size="10" font-weight="bold" fill="#1a22d0">A</text><text x="188.5" y="397.5" font-size="5.5" font-weight="bold" fill="#d82020">I</text><text x="200.5" y="397.5" font-size="5.5" font-weight="bold" fill="#d82020">Q</text><text x="194.5" y="410.5" font-size="5.5" font-weight="bold" fill="#d82020">N</text>
<polygon points="224.9,405.0 218.0,409.0 211.1,405.0 211.1,397.0 218.0,393.0 224.9,397.0" fill="none" stroke="#2a3ae0" stroke-width="1.1"/>
<polygon points="223.0,403.9 218.0,406.8 213.0,403.9 213.0,398.1 218.0,395.2 223.0,398.1" fill="none" stroke="#2a3ae0" stroke-width="1"/>
<ellipse cx="218" cy="401" rx="8.5" ry="8" fill="#6090ff" opacity="0.18"/><ellipse cx="218" cy="401" rx="5.1" ry="4.8" fill="#6090ff" opacity="0.3"/>
<path d="M216 401 h11" stroke="#d82020" stroke-width="1"/><circle cx="217" cy="401" r="1.4" fill="none" stroke="#d82020" stroke-width="0.8"/><path d="M226 399.5 l1.5 1.5 l-1.5 1.5" fill="none" stroke="#d82020" stroke-width="0.8"/>
<rect x="232.5" y="391" width="1" height="20" fill="#a9bfe6"/><rect x="233.5" y="391" width="1" height="20" fill="#eef4fd" opacity="0.7"/>
<circle cx="246.5" cy="401.5" r="5.6" fill="#3040e8"/><circle cx="245" cy="400" r="2.3" fill="#8090ff" opacity="0.7"/><path d="M240 404 c-1 6 10 8 13 0 c2 -5 -1 -9 -4 -10" fill="none" stroke="#d82020" stroke-width="1.2"/><path d="M248 391.5 l5 0.8 l-3.5 3 z" fill="#d82020"/>
<circle cx="269" cy="400.5" r="5" fill="#3040e8"/><circle cx="267.5" cy="399" r="2" fill="#8090ff" opacity="0.7"/><ellipse cx="269.5" cy="401" rx="7.5" ry="3" fill="none" stroke="#d82020" stroke-width="1.2" transform="rotate(-35 269.5 401)"/><path d="M270 405.5 l4 -0.5 l-2 -3 z" fill="#d82020"/>
<ellipse cx="293" cy="400.5" rx="4" ry="6.5" fill="none" stroke="#d82020" stroke-width="1.1"/><path d="M285 400.5 h16" stroke="#2a3ae0" stroke-width="1.6"/><path d="M284 400.5 l3 -2 v4 z" fill="#2a3ae0"/><rect x="291" y="399" width="10" height="3" fill="#6a8aff" opacity="0.6"/>
<rect x="306" y="391" width="1" height="20" fill="#a9bfe6"/><rect x="307" y="391" width="1" height="20" fill="#eef4fd" opacity="0.7"/>
<circle cx="320" cy="401" r="7.8" fill="#d01818"/><circle cx="320" cy="401" r="7.8" fill="none" stroke="#f0a0a0" stroke-width="1" opacity="0.6"/><path d="M315 403.5 c0 -6 7 -7 9.5 -3" fill="none" stroke="#fff" stroke-width="2.4"/><path d="M326.5 396.5 l-0.5 6 l-5 -3 z" fill="#fff"/>
<rect x="333.5" y="391" width="1" height="20" fill="#a9bfe6"/><rect x="334.5" y="391" width="1" height="20" fill="#eef4fd" opacity="0.7"/>
<path d="M342 401 h10 M347 396 v10" stroke="#d81818" stroke-width="2"/>
<text x="366.5" y="400.5" font-size="12" font-weight="bold" fill="#111">»</text><path d="M368.5 403.8 h5" stroke="#111" stroke-width="1"/>
<path d="M368.5 405.6 L373.5 405.6 L371 409.5 Z" fill="#111"/>
<rect x="384" y="394" width="14" height="14" rx="1" fill="#2a5af0"/><rect x="385" y="395" width="12" height="5" fill="#5a8aff" opacity="0.7"/><path d="M394.5 397 l-6.5 7.5 M388 400.5 v4 h4" fill="none" stroke="#fff" stroke-width="1.8"/>
<rect x="407" y="394" width="14" height="14" rx="1" fill="#e83838"/><rect x="408" y="395" width="12" height="5" fill="#ff7a7a" opacity="0.6"/><path d="M410.5 397.5 l7 7 M417.5 397.5 l-7 7" stroke="#fff" stroke-width="2"/>
</svg>
</body></html>
